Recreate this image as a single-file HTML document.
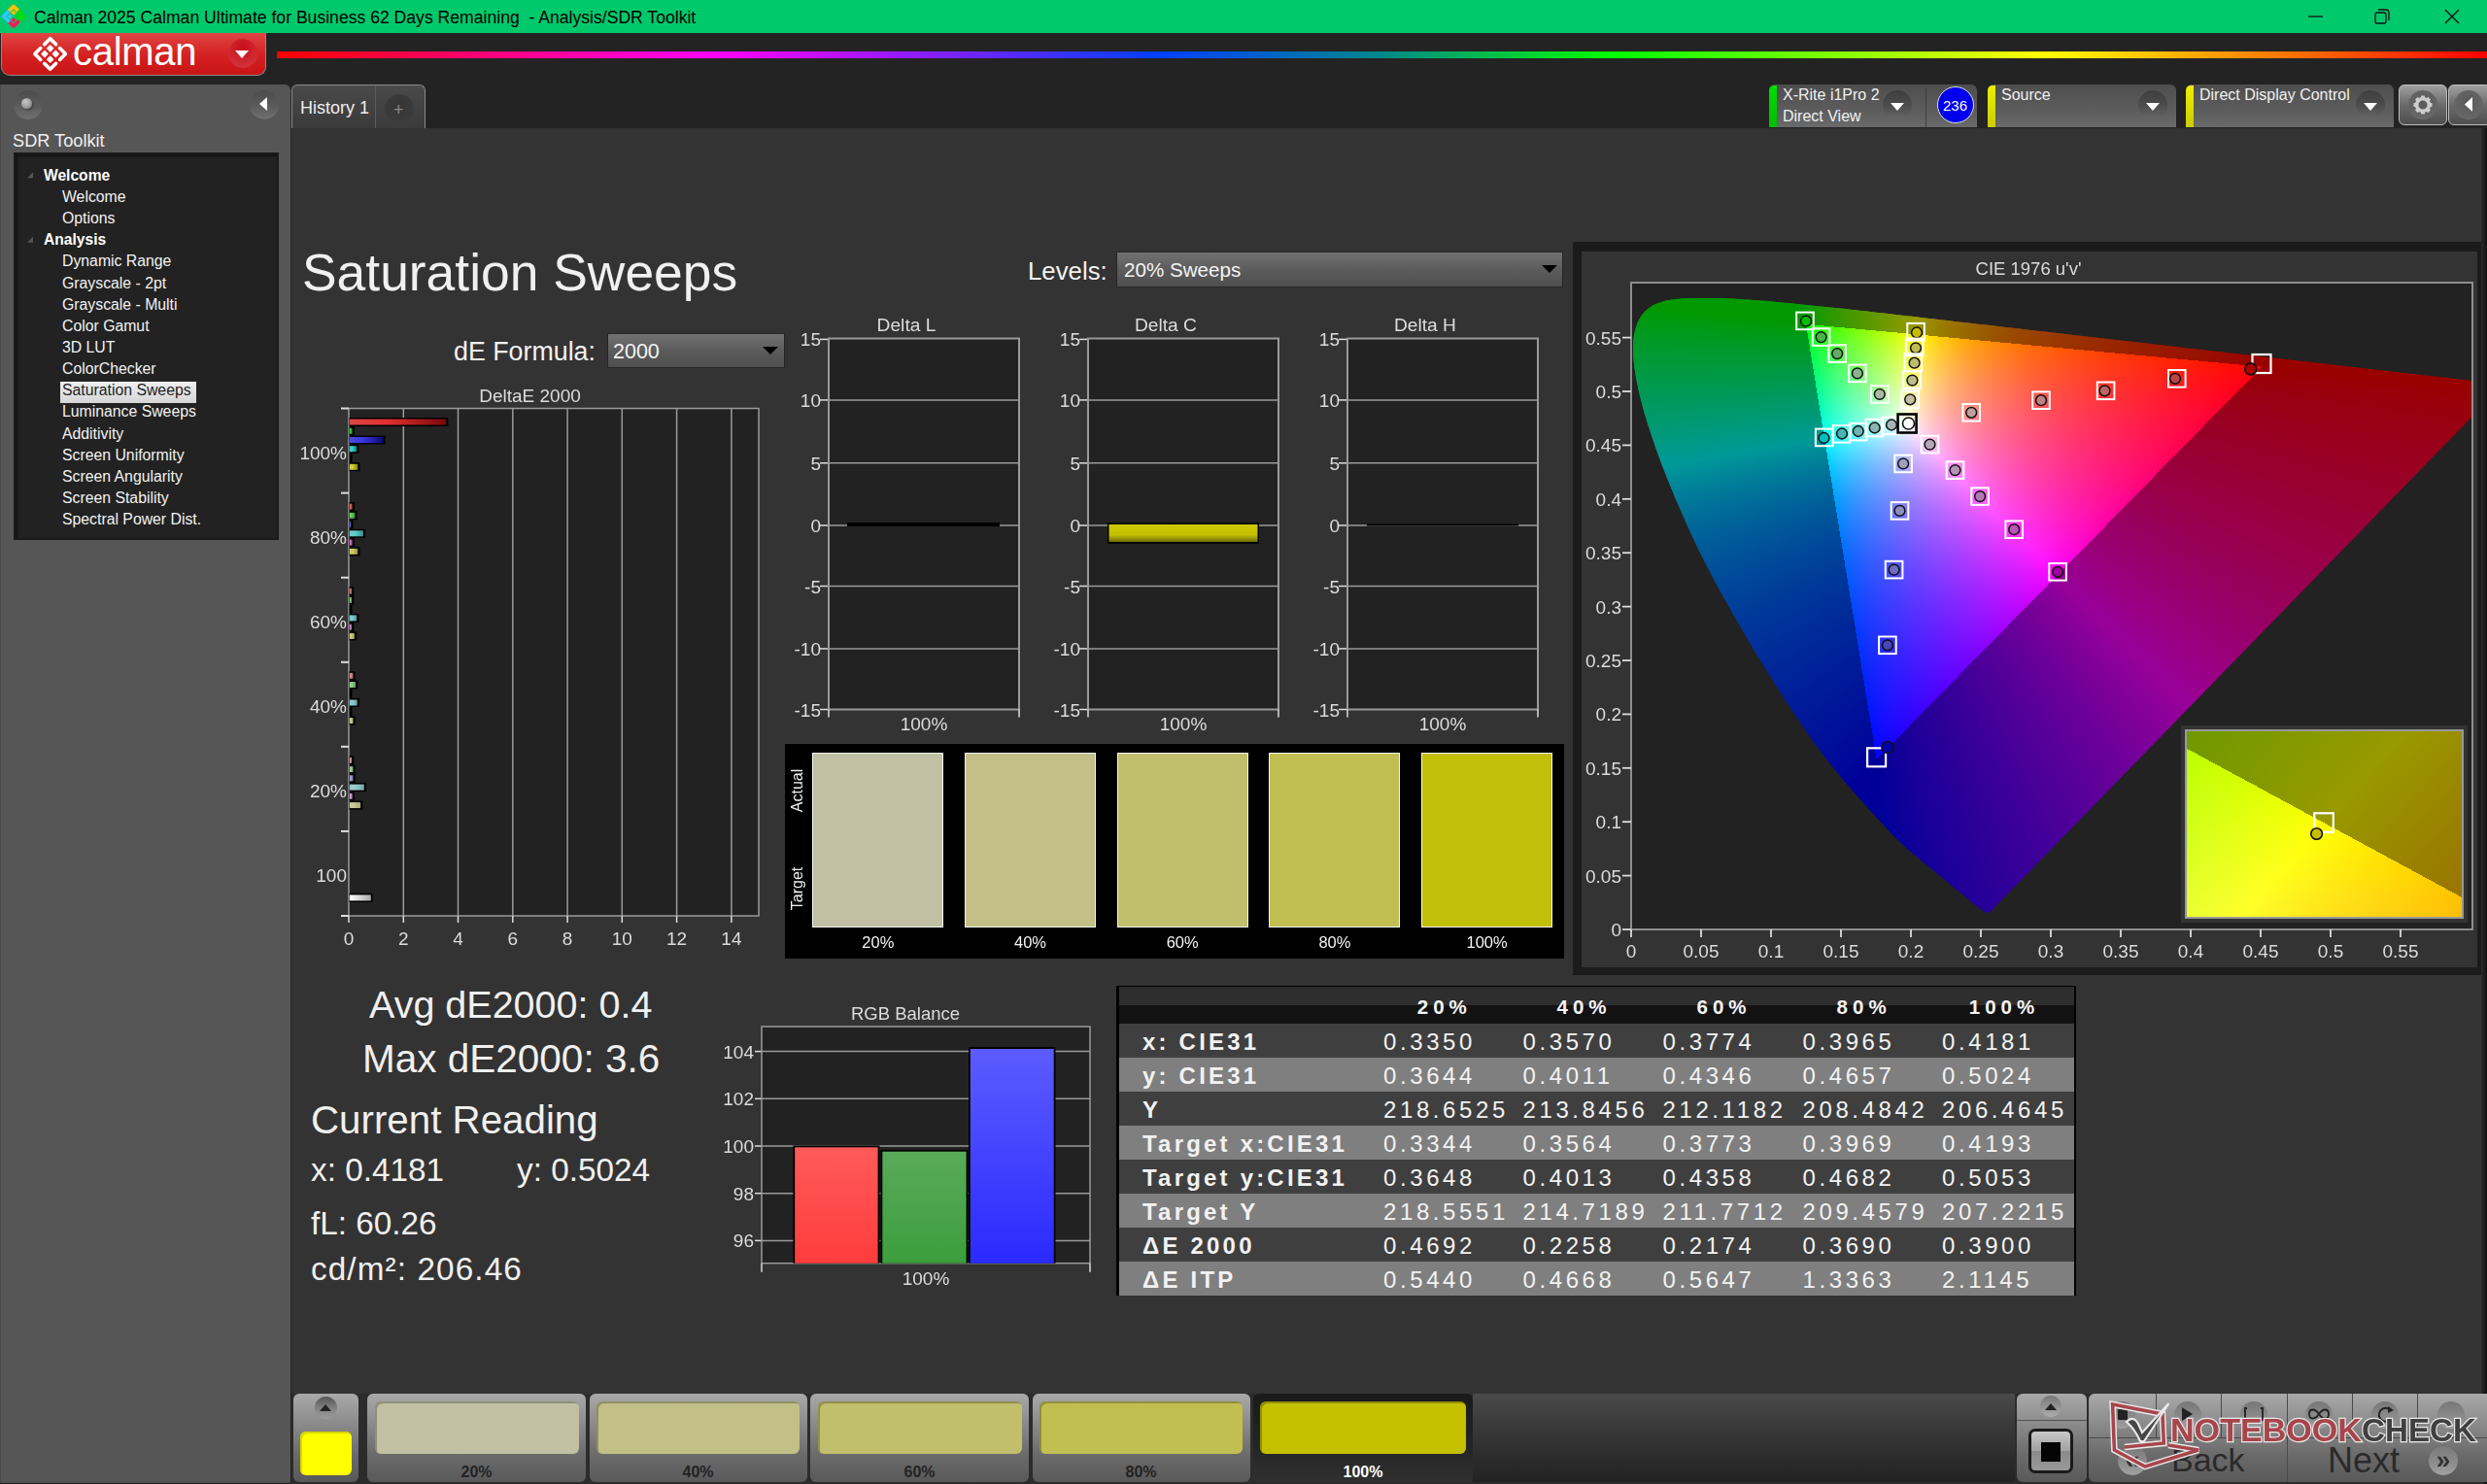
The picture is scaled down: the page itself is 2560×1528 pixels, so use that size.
<!DOCTYPE html>
<html><head><meta charset="utf-8"><style>*{margin:0;padding:0;box-sizing:border-box}
html,body{width:2560px;height:1528px;overflow:hidden;background:#232323;font-family:"Liberation Sans",sans-serif;color:#eee}
.a{position:absolute}
.t{position:absolute;white-space:nowrap;line-height:1}
svg text{font-family:"Liberation Sans",sans-serif}
#titlebar{left:0;top:0;width:2560px;height:34px;background:#00c96c}
#logo{left:1px;top:34px;width:273px;height:44px;border-radius:0 0 9px 9px;background:linear-gradient(#e04444,#d42020 55%,#c81414);border:1px solid #8a8a8a;border-top:none}
#rainbow{left:285px;top:53px;width:2275px;height:7px;background:linear-gradient(90deg,#ff0000 0%,#ff00ff 20%,#0040ff 40%,#00888a 50%,#00ff00 60.5%,#ffff00 80%,#ff0000 100%)}
#sidebar{left:0;top:87px;width:298.5px;height:1440px;background:#565656;border-radius:0 6px 0 0;border-left:1px solid #4a4a4a;border-bottom:1px solid #4a4a4a}
#tree{left:14px;top:157px;width:273px;height:399px;background:#222;border:2px solid #1a1a1a;box-shadow:inset 2px 2px 3px #111}
#content{left:300px;top:132px;width:2256px;height:1396px;background:#333}
</style></head><body>
<div id="titlebar" class="a"></div>
<div class="t" style="left:35px;top:9.5px;font-size:17.6px;color:#000;font-weight:normal;">Calman 2025 Calman Ultimate for Business 62 Days Remaining&nbsp; - Analysis/SDR Toolkit</div>
<div id="logo" class="a"></div>
<div class="t" style="left:75px;top:33px;font-size:40px;color:#fff;font-weight:normal;letter-spacing:-0.3px">calman</div>
<div class="a" style="left:235px;top:40px;width:30px;height:30px;border-radius:50%;background:radial-gradient(circle at 50% 30%,#c80e1a,#d2333a 80%)"></div>
<div id="rainbow" class="a"></div>
<div id="sidebar" class="a"></div>
<div class="a" style="left:14px;top:92.6px;width:30px;height:30px;border-radius:50%;background:linear-gradient(#4c4c4c,#5a5a5a 50%,#707070)"></div>
<div class="a" style="left:22px;top:101px;width:11px;height:11px;border-radius:50%;background:radial-gradient(circle at 40% 35%,#c8c8c8,#7a7a7a);box-shadow:1.5px 1.5px 2px #444"></div>
<div class="a" style="left:256.5px;top:92.6px;width:30px;height:30px;border-radius:50%;background:linear-gradient(#4c4c4c,#5a5a5a 50%,#707070)"></div>
<div class="t" style="left:13px;top:136px;font-size:18.2px;color:#f0f0f0;font-weight:normal;">SDR Toolkit</div>
<div id="tree" class="a"></div>
<div class="t" style="left:45px;top:172.8px;font-size:15.6px;color:#fff;font-weight:bold;">Welcome</div>
<div class="t" style="left:64px;top:194.95000000000002px;font-size:15.8px;color:#f2f2f2;font-weight:normal;">Welcome</div>
<div class="t" style="left:64px;top:217.10000000000002px;font-size:15.8px;color:#f2f2f2;font-weight:normal;">Options</div>
<div class="t" style="left:45px;top:239.25px;font-size:15.6px;color:#fff;font-weight:bold;">Analysis</div>
<div class="t" style="left:64px;top:261.4px;font-size:15.8px;color:#f2f2f2;font-weight:normal;">Dynamic Range</div>
<div class="t" style="left:64px;top:283.55px;font-size:15.8px;color:#f2f2f2;font-weight:normal;">Grayscale - 2pt</div>
<div class="t" style="left:64px;top:305.7px;font-size:15.8px;color:#f2f2f2;font-weight:normal;">Grayscale - Multi</div>
<div class="t" style="left:64px;top:327.85px;font-size:15.8px;color:#f2f2f2;font-weight:normal;">Color Gamut</div>
<div class="t" style="left:64px;top:350.0px;font-size:15.8px;color:#f2f2f2;font-weight:normal;">3D LUT</div>
<div class="t" style="left:64px;top:372.15px;font-size:15.8px;color:#f2f2f2;font-weight:normal;">ColorChecker</div>
<div class="a" style="left:62px;top:392.8px;width:140px;height:22px;background:linear-gradient(#eee,#d6d6d6)"></div>
<div class="t" style="left:64px;top:394.3px;font-size:15.8px;color:#222;font-weight:normal;">Saturation Sweeps</div>
<div class="t" style="left:64px;top:416.45px;font-size:15.8px;color:#f2f2f2;font-weight:normal;">Luminance Sweeps</div>
<div class="t" style="left:64px;top:438.59999999999997px;font-size:15.8px;color:#f2f2f2;font-weight:normal;">Additivity</div>
<div class="t" style="left:64px;top:460.75px;font-size:15.8px;color:#f2f2f2;font-weight:normal;">Screen Uniformity</div>
<div class="t" style="left:64px;top:482.9px;font-size:15.8px;color:#f2f2f2;font-weight:normal;">Screen Angularity</div>
<div class="t" style="left:64px;top:505.04999999999995px;font-size:15.8px;color:#f2f2f2;font-weight:normal;">Screen Stability</div>
<div class="t" style="left:64px;top:527.2px;font-size:15.8px;color:#f2f2f2;font-weight:normal;">Spectral Power Dist.</div>
<div class="a" style="left:300px;top:87px;width:138px;height:46px;border-radius:6px 6px 0 0;background:linear-gradient(#4a4a4a,#3a3a3a);border:1.5px solid #8a8a8a;border-bottom:none"></div>
<div class="a" style="left:386px;top:88px;width:1px;height:44px;background:#5c5c5c"></div>
<div class="a" style="left:396px;top:97px;width:30px;height:30px;border-radius:50%;background:radial-gradient(circle at 50% 40%,#353535,#3b3b3b 70%,#444)"></div>
<div class="t" style="left:309px;top:102px;font-size:18px;color:#eee;font-weight:normal;">History 1</div>
<div class="t" style="left:405px;top:104px;font-size:18px;color:#888;font-weight:normal;">+</div>
<div id="content" class="a"></div>
<div class="a" style="left:1821px;top:87px;width:214px;height:44px;border-radius:6px 6px 0 0;background:linear-gradient(#4e4e4e,#5c5c5c 60%,#6a6a6a)"></div>
<div class="a" style="left:1821px;top:88px;width:8px;height:43px;border-radius:5px 0 0 0;background:linear-gradient(#00dd00,#00bb00)"></div>
<div class="t" style="left:1835px;top:90px;font-size:16px;color:#f0f0f0;font-weight:normal;">X-Rite i1Pro 2</div>
<div class="t" style="left:1835px;top:112px;font-size:16px;color:#f0f0f0;font-weight:normal;">Direct View</div>
<div class="a" style="left:2046px;top:87px;width:194px;height:44px;border-radius:6px 6px 0 0;background:linear-gradient(#4e4e4e,#5c5c5c 60%,#6a6a6a)"></div>
<div class="a" style="left:2046px;top:88px;width:8px;height:43px;border-radius:5px 0 0 0;background:linear-gradient(#eeee00,#cccc00)"></div>
<div class="t" style="left:2060px;top:90px;font-size:16px;color:#f0f0f0;font-weight:normal;">Source</div>
<div class="a" style="left:2250px;top:87px;width:214px;height:44px;border-radius:6px 6px 0 0;background:linear-gradient(#4e4e4e,#5c5c5c 60%,#6a6a6a)"></div>
<div class="a" style="left:2250px;top:88px;width:8px;height:43px;border-radius:5px 0 0 0;background:linear-gradient(#eeee00,#cccc00)"></div>
<div class="t" style="left:2264px;top:90px;font-size:16px;color:#f0f0f0;font-weight:normal;">Direct Display Control</div>
<div class="a" style="left:1938px;top:93px;width:30px;height:30px;border-radius:50%;background:linear-gradient(#3e3e3e,#4c4c4c 50%,#666)"></div>
<div class="a" style="left:2201px;top:93px;width:30px;height:30px;border-radius:50%;background:linear-gradient(#3e3e3e,#4c4c4c 50%,#666)"></div>
<div class="a" style="left:2425px;top:93px;width:30px;height:30px;border-radius:50%;background:linear-gradient(#3e3e3e,#4c4c4c 50%,#666)"></div>
<div class="a" style="left:1982px;top:91px;width:1px;height:40px;background:#3e3e3e"></div>
<div class="a" style="left:1994px;top:89px;width:38px;height:38px;border-radius:50%;background:#0000ee;border:1.5px solid #ddd"></div>
<div class="t" style="left:2000px;top:101px;font-size:15px;color:#fff;font-weight:normal;">236</div>
<div class="a" style="left:2469px;top:87px;width:50px;height:42px;border-radius:6px;background:linear-gradient(#a0a0a0,#6a6a6a 50%,#4e4e4e);border:1.5px solid #bdbdbd"></div>
<div class="a" style="left:2520px;top:87px;width:45px;height:42px;border-radius:6px;background:linear-gradient(#a0a0a0,#6a6a6a 50%,#4e4e4e);border:1.5px solid #bdbdbd"></div>
<div class="a" style="left:2479px;top:93px;width:30px;height:30px;border-radius:50%;background:radial-gradient(circle at 50% 40%,#5a5a5a,#666 70%,#888)"></div>
<div class="a" style="left:2526px;top:93px;width:30px;height:30px;border-radius:50%;background:radial-gradient(circle at 50% 40%,#5a5a5a,#666 70%,#888)"></div>
<div class="t" style="left:311px;top:254px;font-size:53.4px;color:#f0f0f0;font-weight:normal;">Saturation Sweeps</div>
<div class="t" style="left:1058px;top:266.5px;font-size:25.8px;color:#f2f2f2;font-weight:normal;">Levels:</div>
<div class="a" style="left:1149px;top:259px;width:460px;height:37px;background:#262626;padding:1px"><div style="width:100%;height:100%;background:linear-gradient(#727272,#5c5c5c 50%,#4e4e4e)"></div></div>
<div class="t" style="left:1157px;top:268px;font-size:20.6px;color:#f4f4f4;font-weight:normal;">20% Sweeps</div>
<div class="t" style="left:467px;top:349px;font-size:26.8px;color:#f2f2f2;font-weight:normal;">dE Formula:</div>
<div class="a" style="left:625px;top:343px;width:183px;height:36px;background:#262626;padding:1px"><div style="width:100%;height:100%;background:linear-gradient(#727272,#5c5c5c 50%,#4e4e4e)"></div></div>
<div class="t" style="left:631px;top:352px;font-size:21.5px;color:#f4f4f4;font-weight:normal;">2000</div>
<div class="a" style="left:808px;top:766px;width:802px;height:221px;background:#000"></div>
<div class="a" style="left:836.3px;top:775px;width:135px;height:180px;background:#c1c0a3;border:1.5px solid #f4f4f4"></div>
<div class="a" style="left:993.0px;top:775px;width:135px;height:180px;background:#c2c086;border:1.5px solid #f4f4f4"></div>
<div class="a" style="left:1149.7px;top:775px;width:135px;height:180px;background:#c2bf6c;border:1.5px solid #f4f4f4"></div>
<div class="a" style="left:1306.4px;top:775px;width:135px;height:180px;background:#c2bf52;border:1.5px solid #f4f4f4"></div>
<div class="a" style="left:1463.1px;top:775px;width:135px;height:180px;background:#c1bf0a;border:1.5px solid #f4f4f4"></div>
<div class="t" style="left:380px;top:1015px;font-size:39.5px;color:#f0f0f0;font-weight:normal;">Avg dE2000: 0.4</div>
<div class="t" style="left:373px;top:1070px;font-size:40.5px;color:#f0f0f0;font-weight:normal;">Max dE2000: 3.6</div>
<div class="t" style="left:320px;top:1134px;font-size:40.3px;color:#f0f0f0;font-weight:normal;">Current Reading</div>
<div class="t" style="left:320px;top:1188px;font-size:33.3px;color:#f0f0f0;font-weight:normal;">x: 0.4181</div>
<div class="t" style="left:532px;top:1188px;font-size:33.3px;color:#f0f0f0;font-weight:normal;">y: 0.5024</div>
<div class="t" style="left:320px;top:1243px;font-size:33.3px;color:#f0f0f0;font-weight:normal;">fL: 60.26</div>
<div class="t" style="left:320px;top:1290px;font-size:33.3px;color:#f0f0f0;font-weight:normal;letter-spacing:1.1px">cd/m²: 206.46</div>
<div class="a" style="left:1149px;top:1014.6px;width:988px;height:319.4px;background:#000"></div>
<div class="a" style="left:1152px;top:1016px;width:983px;height:19px;background:#2e2e2e"></div>
<div class="a" style="left:1152px;top:1035px;width:983px;height:18.6px;background:#121212"></div>
<div class="t" style="left:1426.8px;width:120px;text-align:center;top:1027px;font-size:20.5px;font-weight:bold;color:#f4f4f4;letter-spacing:5px">20%</div>
<div class="t" style="left:1570.5px;width:120px;text-align:center;top:1027px;font-size:20.5px;font-weight:bold;color:#f4f4f4;letter-spacing:5px">40%</div>
<div class="t" style="left:1714.5px;width:120px;text-align:center;top:1027px;font-size:20.5px;font-weight:bold;color:#f4f4f4;letter-spacing:5px">60%</div>
<div class="t" style="left:1858.6px;width:120px;text-align:center;top:1027px;font-size:20.5px;font-weight:bold;color:#f4f4f4;letter-spacing:5px">80%</div>
<div class="t" style="left:2003px;width:120px;text-align:center;top:1027px;font-size:20.5px;font-weight:bold;color:#f4f4f4;letter-spacing:5px">100%</div>
<div class="a" style="left:1152px;top:1053.6px;width:983px;height:35.1px;background:#3f3f3f"></div>
<div class="t" style="left:1176px;top:1060.6px;font-size:24px;color:#f2f2f2;font-weight:bold;letter-spacing:3.2px">x: CIE31</div>
<div class="t" style="left:1424px;top:1060.6px;font-size:24px;color:#f2f2f2;font-weight:normal;letter-spacing:3.6px">0.3350</div>
<div class="t" style="left:1567.5px;top:1060.6px;font-size:24px;color:#f2f2f2;font-weight:normal;letter-spacing:3.6px">0.3570</div>
<div class="t" style="left:1711.5px;top:1060.6px;font-size:24px;color:#f2f2f2;font-weight:normal;letter-spacing:3.6px">0.3774</div>
<div class="t" style="left:1855.5px;top:1060.6px;font-size:24px;color:#f2f2f2;font-weight:normal;letter-spacing:3.6px">0.3965</div>
<div class="t" style="left:1999px;top:1060.6px;font-size:24px;color:#f2f2f2;font-weight:normal;letter-spacing:3.6px">0.4181</div>
<div class="a" style="left:1152px;top:1088.6px;width:983px;height:35.1px;background:#7f7f7f"></div>
<div class="t" style="left:1176px;top:1095.6px;font-size:24px;color:#f2f2f2;font-weight:bold;letter-spacing:3.2px">y: CIE31</div>
<div class="t" style="left:1424px;top:1095.6px;font-size:24px;color:#f2f2f2;font-weight:normal;letter-spacing:3.6px">0.3644</div>
<div class="t" style="left:1567.5px;top:1095.6px;font-size:24px;color:#f2f2f2;font-weight:normal;letter-spacing:3.6px">0.4011</div>
<div class="t" style="left:1711.5px;top:1095.6px;font-size:24px;color:#f2f2f2;font-weight:normal;letter-spacing:3.6px">0.4346</div>
<div class="t" style="left:1855.5px;top:1095.6px;font-size:24px;color:#f2f2f2;font-weight:normal;letter-spacing:3.6px">0.4657</div>
<div class="t" style="left:1999px;top:1095.6px;font-size:24px;color:#f2f2f2;font-weight:normal;letter-spacing:3.6px">0.5024</div>
<div class="a" style="left:1152px;top:1123.7px;width:983px;height:35.1px;background:#3f3f3f"></div>
<div class="t" style="left:1176px;top:1130.7px;font-size:24px;color:#f2f2f2;font-weight:bold;letter-spacing:3.2px">Y</div>
<div class="t" style="left:1424px;top:1130.7px;font-size:24px;color:#f2f2f2;font-weight:normal;letter-spacing:3.6px">218.6525</div>
<div class="t" style="left:1567.5px;top:1130.7px;font-size:24px;color:#f2f2f2;font-weight:normal;letter-spacing:3.6px">213.8456</div>
<div class="t" style="left:1711.5px;top:1130.7px;font-size:24px;color:#f2f2f2;font-weight:normal;letter-spacing:3.6px">212.1182</div>
<div class="t" style="left:1855.5px;top:1130.7px;font-size:24px;color:#f2f2f2;font-weight:normal;letter-spacing:3.6px">208.4842</div>
<div class="t" style="left:1999px;top:1130.7px;font-size:24px;color:#f2f2f2;font-weight:normal;letter-spacing:3.6px">206.4645</div>
<div class="a" style="left:1152px;top:1158.7px;width:983px;height:35.1px;background:#7f7f7f"></div>
<div class="t" style="left:1176px;top:1165.7px;font-size:24px;color:#f2f2f2;font-weight:bold;letter-spacing:3.2px">Target x:CIE31</div>
<div class="t" style="left:1424px;top:1165.7px;font-size:24px;color:#f2f2f2;font-weight:normal;letter-spacing:3.6px">0.3344</div>
<div class="t" style="left:1567.5px;top:1165.7px;font-size:24px;color:#f2f2f2;font-weight:normal;letter-spacing:3.6px">0.3564</div>
<div class="t" style="left:1711.5px;top:1165.7px;font-size:24px;color:#f2f2f2;font-weight:normal;letter-spacing:3.6px">0.3773</div>
<div class="t" style="left:1855.5px;top:1165.7px;font-size:24px;color:#f2f2f2;font-weight:normal;letter-spacing:3.6px">0.3969</div>
<div class="t" style="left:1999px;top:1165.7px;font-size:24px;color:#f2f2f2;font-weight:normal;letter-spacing:3.6px">0.4193</div>
<div class="a" style="left:1152px;top:1193.7px;width:983px;height:35.1px;background:#3f3f3f"></div>
<div class="t" style="left:1176px;top:1200.7px;font-size:24px;color:#f2f2f2;font-weight:bold;letter-spacing:3.2px">Target y:CIE31</div>
<div class="t" style="left:1424px;top:1200.7px;font-size:24px;color:#f2f2f2;font-weight:normal;letter-spacing:3.6px">0.3648</div>
<div class="t" style="left:1567.5px;top:1200.7px;font-size:24px;color:#f2f2f2;font-weight:normal;letter-spacing:3.6px">0.4013</div>
<div class="t" style="left:1711.5px;top:1200.7px;font-size:24px;color:#f2f2f2;font-weight:normal;letter-spacing:3.6px">0.4358</div>
<div class="t" style="left:1855.5px;top:1200.7px;font-size:24px;color:#f2f2f2;font-weight:normal;letter-spacing:3.6px">0.4682</div>
<div class="t" style="left:1999px;top:1200.7px;font-size:24px;color:#f2f2f2;font-weight:normal;letter-spacing:3.6px">0.5053</div>
<div class="a" style="left:1152px;top:1228.8px;width:983px;height:35.1px;background:#7f7f7f"></div>
<div class="t" style="left:1176px;top:1235.8px;font-size:24px;color:#f2f2f2;font-weight:bold;letter-spacing:3.2px">Target Y</div>
<div class="t" style="left:1424px;top:1235.8px;font-size:24px;color:#f2f2f2;font-weight:normal;letter-spacing:3.6px">218.5551</div>
<div class="t" style="left:1567.5px;top:1235.8px;font-size:24px;color:#f2f2f2;font-weight:normal;letter-spacing:3.6px">214.7189</div>
<div class="t" style="left:1711.5px;top:1235.8px;font-size:24px;color:#f2f2f2;font-weight:normal;letter-spacing:3.6px">211.7712</div>
<div class="t" style="left:1855.5px;top:1235.8px;font-size:24px;color:#f2f2f2;font-weight:normal;letter-spacing:3.6px">209.4579</div>
<div class="t" style="left:1999px;top:1235.8px;font-size:24px;color:#f2f2f2;font-weight:normal;letter-spacing:3.6px">207.2215</div>
<div class="a" style="left:1152px;top:1263.8px;width:983px;height:35.1px;background:#3f3f3f"></div>
<div class="t" style="left:1176px;top:1270.8px;font-size:24px;color:#f2f2f2;font-weight:bold;letter-spacing:3.2px">ΔE 2000</div>
<div class="t" style="left:1424px;top:1270.8px;font-size:24px;color:#f2f2f2;font-weight:normal;letter-spacing:3.6px">0.4692</div>
<div class="t" style="left:1567.5px;top:1270.8px;font-size:24px;color:#f2f2f2;font-weight:normal;letter-spacing:3.6px">0.2258</div>
<div class="t" style="left:1711.5px;top:1270.8px;font-size:24px;color:#f2f2f2;font-weight:normal;letter-spacing:3.6px">0.2174</div>
<div class="t" style="left:1855.5px;top:1270.8px;font-size:24px;color:#f2f2f2;font-weight:normal;letter-spacing:3.6px">0.3690</div>
<div class="t" style="left:1999px;top:1270.8px;font-size:24px;color:#f2f2f2;font-weight:normal;letter-spacing:3.6px">0.3900</div>
<div class="a" style="left:1152px;top:1298.8px;width:983px;height:35.1px;background:#7f7f7f"></div>
<div class="t" style="left:1176px;top:1305.8px;font-size:24px;color:#f2f2f2;font-weight:bold;letter-spacing:3.2px">ΔE ITP</div>
<div class="t" style="left:1424px;top:1305.8px;font-size:24px;color:#f2f2f2;font-weight:normal;letter-spacing:3.6px">0.5440</div>
<div class="t" style="left:1567.5px;top:1305.8px;font-size:24px;color:#f2f2f2;font-weight:normal;letter-spacing:3.6px">0.4668</div>
<div class="t" style="left:1711.5px;top:1305.8px;font-size:24px;color:#f2f2f2;font-weight:normal;letter-spacing:3.6px">0.5647</div>
<div class="t" style="left:1855.5px;top:1305.8px;font-size:24px;color:#f2f2f2;font-weight:normal;letter-spacing:3.6px">1.3363</div>
<div class="t" style="left:1999px;top:1305.8px;font-size:24px;color:#f2f2f2;font-weight:normal;letter-spacing:3.6px">2.1145</div>
<div class="a" style="left:1619px;top:249px;width:941px;height:755px;background:#1b1b1b"></div>
<div class="a" style="left:1628px;top:259px;width:922px;height:737px;background:#333"></div>
<div class="a" style="left:2554px;top:132px;width:6px;height:1396px;background:linear-gradient(90deg,#2a2a2a,#111)"></div>
<div class="a" style="left:1679px;top:291px;width:866px;height:666px;background:#222"></div>
<svg class="a mz" style="left:1679px;top:291px" width="866" height="666"><style>.mz rect{width:12px;height:12px}</style><defs><clipPath id="lc"><path d="M369.8 647.6 L369.7 647.7 L369.7 647.7 L369.6 647.8 L369.5 647.8 L369.4 647.9 L369.2 648.0 L369.1 648.0 L369.0 648.1 L368.8 648.2 L368.6 648.2 L368.4 648.3 L368.2 648.3 L368.0 648.4 L367.8 648.4 L367.5 648.4 L367.2 648.4 L366.9 648.4 L366.5 648.3 L366.1 648.3 L365.7 648.3 L365.3 648.2 L364.8 648.1 L364.1 647.8 L363.2 647.3 L362.1 646.6 L360.9 645.8 L359.6 644.9 L358.1 643.8 L356.4 642.5 L354.4 640.9 L352.2 639.2 L349.9 637.2 L347.3 635.1 L344.5 632.7 L341.4 630.1 L338.0 627.2 L334.2 624.2 L330.3 621.0 L326.1 617.5 L321.5 613.8 L316.5 609.7 L311.1 605.1 L305.4 600.4 L299.4 595.5 L293.0 590.3 L286.1 584.5 L278.6 577.6 L270.3 569.5 L260.9 559.6 L250.2 548.1 L239.0 535.6 L227.7 522.7 L217.0 510.2 L207.5 498.7 L199.3 488.3 L192.0 478.7 L185.3 469.3 L178.8 459.9 L172.2 450.1 L165.2 439.6 L157.7 428.2 L150.1 416.3 L142.3 404.0 L134.6 391.4 L126.8 378.7 L119.3 365.9 L111.7 353.0 L104.0 339.7 L96.5 326.3 L89.0 312.8 L81.9 299.5 L75.1 286.3 L68.6 273.2 L62.4 260.1 L56.5 247.1 L50.9 234.3 L45.5 221.9 L40.6 209.9 L35.9 198.2 L31.5 186.9 L27.4 175.9 L23.7 165.2 L20.2 155.1 L17.1 145.4 L14.3 136.3 L11.9 127.7 L9.8 119.5 L7.9 111.8 L6.4 104.5 L5.0 97.5 L3.9 91.0 L3.1 84.9 L2.5 79.3 L2.1 74.0 L2.0 69.0 L2.1 64.2 L2.3 59.7 L2.8 55.5 L3.5 51.5 L4.4 47.9 L5.5 44.5 L6.7 41.3 L8.1 38.3 L9.7 35.5 L11.5 33.0 L13.4 30.7 L15.5 28.6 L17.7 26.7 L20.0 25.0 L22.4 23.5 L25.0 22.3 L27.7 21.2 L30.5 20.2 L33.3 19.3 L36.2 18.5 L39.2 18.0 L42.3 17.5 L45.4 17.1 L48.6 16.8 L51.9 16.6 L55.1 16.3 L58.5 16.1 L61.8 16.0 L65.3 16.0 L68.7 15.9 L72.1 15.9 L75.5 15.9 L78.9 15.9 L82.3 15.9 L85.7 16.0 L89.2 16.0 L92.6 16.1 L96.1 16.2 L99.7 16.4 L103.2 16.5 L106.8 16.7 L110.4 16.9 L114.1 17.1 L117.8 17.4 L121.6 17.6 L125.4 17.9 L129.3 18.2 L133.2 18.5 L137.2 18.8 L141.2 19.1 L145.3 19.5 L149.5 19.9 L153.7 20.2 L157.9 20.7 L162.3 21.1 L166.7 21.5 L171.2 21.9 L175.7 22.4 L180.4 22.9 L185.1 23.4 L189.9 23.9 L194.8 24.4 L199.7 24.9 L204.8 25.4 L209.9 26.0 L215.2 26.6 L220.5 27.1 L225.9 27.7 L231.4 28.3 L237.0 29.0 L242.6 29.6 L248.4 30.3 L254.3 30.9 L260.3 31.6 L266.4 32.3 L272.5 33.0 L278.8 33.7 L285.2 34.4 L291.7 35.1 L298.3 35.9 L305.0 36.7 L311.8 37.4 L318.8 38.2 L325.8 39.0 L332.9 39.9 L340.1 40.7 L347.4 41.5 L354.9 42.4 L362.4 43.3 L370.1 44.1 L377.8 45.0 L385.6 45.9 L393.5 46.8 L401.6 47.8 L409.7 48.7 L417.9 49.7 L426.2 50.6 L434.5 51.6 L443.0 52.5 L451.5 53.5 L460.1 54.5 L468.7 55.5 L477.4 56.5 L486.1 57.5 L494.9 58.5 L503.7 59.5 L512.5 60.5 L521.3 61.6 L530.0 62.5 L538.1 63.5 L545.5 64.3 L552.9 65.2 L560.8 66.1 L570.0 67.2 L581.0 68.4 L594.5 70.0 L610.1 71.7 L626.9 73.7 L644.0 75.6 L660.6 77.5 L675.6 79.2 L689.3 80.8 L702.5 82.3 L715.0 83.8 L727.0 85.2 L738.4 86.5 L749.2 87.7 L759.3 88.9 L768.7 90.0 L777.5 91.0 L785.8 91.9 L793.7 92.9 L801.4 93.7 L808.7 94.6 L815.6 95.4 L822.2 96.1 L828.3 96.8 L834.1 97.5 L839.6 98.1 L844.6 98.7 L849.3 99.2 L853.6 99.7 L857.6 100.2 L861.3 100.6 L864.7 101.0 L867.8 101.4 L870.5 101.7 L873.0 102.0 L875.2 102.2 L877.4 102.5 L879.7 102.7 L882.0 103.0 L884.4 103.3 L886.8 103.5 L889.0 103.8 L891.0 104.0 L892.7 104.2 L894.0 104.4 L895.1 104.5 L896.0 104.6 L896.7 104.7 L897.2 104.8 L897.7 104.8 Z"/></clipPath><clipPath id="tc"><path d="M649.0 86.6 L180.0 42.8 L252.6 491.0 Z"/></clipPath></defs><g clip-path="url(#lc)"><rect x="0" y="0" fill="#009900"/><rect x="12" y="0" fill="#009900"/><rect x="24" y="0" fill="#009900"/><rect x="36" y="0" fill="#009900"/><rect x="48" y="0" fill="#009900"/><rect x="60" y="0" fill="#009900"/><rect x="72" y="0" fill="#009900"/><rect x="84" y="0" fill="#009900"/><rect x="96" y="0" fill="#009900"/><rect x="108" y="0" fill="#009900"/><rect x="120" y="0" fill="#009900"/><rect x="132" y="0" fill="#009900"/><rect x="144" y="0" fill="#009900"/><rect x="156" y="0" fill="#009900"/><rect x="168" y="0" fill="#009900"/><rect x="180" y="0" fill="#159900"/><rect x="192" y="0" fill="#249900"/><rect x="204" y="0" fill="#339900"/><rect x="216" y="0" fill="#409900"/><rect x="228" y="0" fill="#4e9900"/><rect x="240" y="0" fill="#5c9900"/><rect x="252" y="0" fill="#699900"/><rect x="264" y="0" fill="#779900"/><rect x="276" y="0" fill="#859900"/><rect x="288" y="0" fill="#939900"/><rect x="300" y="0" fill="#998f00"/><rect x="312" y="0" fill="#998300"/><rect x="324" y="0" fill="#997800"/><rect x="336" y="0" fill="#996f00"/><rect x="348" y="0" fill="#996700"/><rect x="360" y="0" fill="#995f00"/><rect x="372" y="0" fill="#995900"/><rect x="384" y="0" fill="#995300"/><rect x="396" y="0" fill="#994d00"/><rect x="408" y="0" fill="#994800"/><rect x="420" y="0" fill="#994300"/><rect x="432" y="0" fill="#993f00"/><rect x="444" y="0" fill="#993b00"/><rect x="456" y="0" fill="#993700"/><rect x="468" y="0" fill="#993300"/><rect x="480" y="0" fill="#993000"/><rect x="492" y="0" fill="#992d00"/><rect x="504" y="0" fill="#992a00"/><rect x="516" y="0" fill="#992700"/><rect x="528" y="0" fill="#992400"/><rect x="540" y="0" fill="#992100"/><rect x="552" y="0" fill="#991f00"/><rect x="564" y="0" fill="#991d00"/><rect x="576" y="0" fill="#991a00"/><rect x="588" y="0" fill="#991800"/><rect x="600" y="0" fill="#991600"/><rect x="612" y="0" fill="#991400"/><rect x="624" y="0" fill="#991200"/><rect x="636" y="0" fill="#991000"/><rect x="648" y="0" fill="#990d00"/><rect x="660" y="0" fill="#990b00"/><rect x="672" y="0" fill="#990900"/><rect x="684" y="0" fill="#990700"/><rect x="696" y="0" fill="#990500"/><rect x="708" y="0" fill="#990300"/><rect x="720" y="0" fill="#990000"/><rect x="732" y="0" fill="#990000"/><rect x="744" y="0" fill="#990000"/><rect x="756" y="0" fill="#990000"/><rect x="768" y="0" fill="#990000"/><rect x="780" y="0" fill="#990000"/><rect x="792" y="0" fill="#990000"/><rect x="804" y="0" fill="#990000"/><rect x="816" y="0" fill="#990000"/><rect x="828" y="0" fill="#990000"/><rect x="840" y="0" fill="#990000"/><rect x="852" y="0" fill="#990000"/><rect x="864" y="0" fill="#990000"/><rect x="0" y="12" fill="#009900"/><rect x="12" y="12" fill="#009900"/><rect x="24" y="12" fill="#009900"/><rect x="36" y="12" fill="#009900"/><rect x="48" y="12" fill="#009900"/><rect x="60" y="12" fill="#009900"/><rect x="72" y="12" fill="#009900"/><rect x="84" y="12" fill="#009900"/><rect x="96" y="12" fill="#009900"/><rect x="108" y="12" fill="#009900"/><rect x="120" y="12" fill="#009900"/><rect x="132" y="12" fill="#009900"/><rect x="144" y="12" fill="#009900"/><rect x="156" y="12" fill="#009900"/><rect x="168" y="12" fill="#009900"/><rect x="180" y="12" fill="#129900"/><rect x="192" y="12" fill="#239900"/><rect x="204" y="12" fill="#319900"/><rect x="216" y="12" fill="#409900"/><rect x="228" y="12" fill="#4e9900"/><rect x="240" y="12" fill="#5b9900"/><rect x="252" y="12" fill="#699900"/><rect x="264" y="12" fill="#789900"/><rect x="276" y="12" fill="#869900"/><rect x="288" y="12" fill="#959900"/><rect x="300" y="12" fill="#998e00"/><rect x="312" y="12" fill="#998200"/><rect x="324" y="12" fill="#997700"/><rect x="336" y="12" fill="#996d00"/><rect x="348" y="12" fill="#996500"/><rect x="360" y="12" fill="#995e00"/><rect x="372" y="12" fill="#995700"/><rect x="384" y="12" fill="#995100"/><rect x="396" y="12" fill="#994b00"/><rect x="408" y="12" fill="#994600"/><rect x="420" y="12" fill="#994100"/><rect x="432" y="12" fill="#993d00"/><rect x="444" y="12" fill="#993900"/><rect x="456" y="12" fill="#993500"/><rect x="468" y="12" fill="#993200"/><rect x="480" y="12" fill="#992e00"/><rect x="492" y="12" fill="#992b00"/><rect x="504" y="12" fill="#992800"/><rect x="516" y="12" fill="#992500"/><rect x="528" y="12" fill="#992300"/><rect x="540" y="12" fill="#992000"/><rect x="552" y="12" fill="#991d00"/><rect x="564" y="12" fill="#991b00"/><rect x="576" y="12" fill="#991900"/><rect x="588" y="12" fill="#991600"/><rect x="600" y="12" fill="#991400"/><rect x="612" y="12" fill="#991200"/><rect x="624" y="12" fill="#991000"/><rect x="636" y="12" fill="#990e00"/><rect x="648" y="12" fill="#990c00"/><rect x="660" y="12" fill="#990a00"/><rect x="672" y="12" fill="#990800"/><rect x="684" y="12" fill="#990600"/><rect x="696" y="12" fill="#990300"/><rect x="708" y="12" fill="#990000"/><rect x="720" y="12" fill="#990000"/><rect x="732" y="12" fill="#990000"/><rect x="744" y="12" fill="#990000"/><rect x="756" y="12" fill="#990000"/><rect x="768" y="12" fill="#990000"/><rect x="780" y="12" fill="#990000"/><rect x="792" y="12" fill="#990000"/><rect x="804" y="12" fill="#990000"/><rect x="816" y="12" fill="#990000"/><rect x="828" y="12" fill="#990000"/><rect x="840" y="12" fill="#990000"/><rect x="852" y="12" fill="#990000"/><rect x="864" y="12" fill="#990000"/><rect x="0" y="24" fill="#009906"/><rect x="12" y="24" fill="#009904"/><rect x="24" y="24" fill="#009903"/><rect x="36" y="24" fill="#009900"/><rect x="48" y="24" fill="#009900"/><rect x="60" y="24" fill="#009900"/><rect x="72" y="24" fill="#009900"/><rect x="84" y="24" fill="#009900"/><rect x="96" y="24" fill="#009900"/><rect x="108" y="24" fill="#009900"/><rect x="120" y="24" fill="#009900"/><rect x="132" y="24" fill="#009900"/><rect x="144" y="24" fill="#009900"/><rect x="156" y="24" fill="#009900"/><rect x="168" y="24" fill="#009900"/><rect x="180" y="24" fill="#109900"/><rect x="192" y="24" fill="#219900"/><rect x="204" y="24" fill="#309900"/><rect x="216" y="24" fill="#3f9900"/><rect x="228" y="24" fill="#4d9900"/><rect x="240" y="24" fill="#5b9900"/><rect x="252" y="24" fill="#6a9900"/><rect x="264" y="24" fill="#789900"/><rect x="276" y="24" fill="#879900"/><rect x="288" y="24" fill="#969900"/><rect x="300" y="24" fill="#998c00"/><rect x="312" y="24" fill="#998000"/><rect x="324" y="24" fill="#997500"/><rect x="336" y="24" fill="#996c00"/><rect x="348" y="24" fill="#996300"/><rect x="360" y="24" fill="#995c00"/><rect x="372" y="24" fill="#995500"/><rect x="384" y="24" fill="#994f00"/><rect x="396" y="24" fill="#994a00"/><rect x="408" y="24" fill="#994500"/><rect x="420" y="24" fill="#994000"/><rect x="432" y="24" fill="#993b00"/><rect x="444" y="24" fill="#993700"/><rect x="456" y="24" fill="#993400"/><rect x="468" y="24" fill="#993000"/><rect x="480" y="24" fill="#992d00"/><rect x="492" y="24" fill="#992a00"/><rect x="504" y="24" fill="#992600"/><rect x="516" y="24" fill="#992400"/><rect x="528" y="24" fill="#992100"/><rect x="540" y="24" fill="#991e00"/><rect x="552" y="24" fill="#991c00"/><rect x="564" y="24" fill="#991900"/><rect x="576" y="24" fill="#991700"/><rect x="588" y="24" fill="#991500"/><rect x="600" y="24" fill="#991300"/><rect x="612" y="24" fill="#991000"/><rect x="624" y="24" fill="#990e00"/><rect x="636" y="24" fill="#990c00"/><rect x="648" y="24" fill="#990a00"/><rect x="660" y="24" fill="#990800"/><rect x="672" y="24" fill="#990600"/><rect x="684" y="24" fill="#990300"/><rect x="696" y="24" fill="#990100"/><rect x="708" y="24" fill="#990000"/><rect x="720" y="24" fill="#990000"/><rect x="732" y="24" fill="#990000"/><rect x="744" y="24" fill="#990000"/><rect x="756" y="24" fill="#990000"/><rect x="768" y="24" fill="#990000"/><rect x="780" y="24" fill="#990000"/><rect x="792" y="24" fill="#990000"/><rect x="804" y="24" fill="#990000"/><rect x="816" y="24" fill="#990000"/><rect x="828" y="24" fill="#990000"/><rect x="840" y="24" fill="#990000"/><rect x="852" y="24" fill="#990000"/><rect x="864" y="24" fill="#990000"/><rect x="0" y="36" fill="#009914"/><rect x="12" y="36" fill="#009913"/><rect x="24" y="36" fill="#009912"/><rect x="36" y="36" fill="#009911"/><rect x="48" y="36" fill="#009910"/><rect x="60" y="36" fill="#00990f"/><rect x="72" y="36" fill="#00990e"/><rect x="84" y="36" fill="#00990d"/><rect x="96" y="36" fill="#00990b"/><rect x="108" y="36" fill="#00990a"/><rect x="120" y="36" fill="#009908"/><rect x="132" y="36" fill="#009907"/><rect x="144" y="36" fill="#009905"/><rect x="156" y="36" fill="#009902"/><rect x="168" y="36" fill="#009900"/><rect x="180" y="36" fill="#0d9900"/><rect x="192" y="36" fill="#1f9900"/><rect x="204" y="36" fill="#2f9900"/><rect x="216" y="36" fill="#3e9900"/><rect x="228" y="36" fill="#4c9900"/><rect x="240" y="36" fill="#5b9900"/><rect x="252" y="36" fill="#6a9900"/><rect x="264" y="36" fill="#799900"/><rect x="276" y="36" fill="#889900"/><rect x="288" y="36" fill="#989900"/><rect x="300" y="36" fill="#998b00"/><rect x="312" y="36" fill="#997e00"/><rect x="324" y="36" fill="#997300"/><rect x="336" y="36" fill="#996a00"/><rect x="348" y="36" fill="#996200"/><rect x="360" y="36" fill="#995a00"/><rect x="372" y="36" fill="#995300"/><rect x="384" y="36" fill="#994d00"/><rect x="396" y="36" fill="#994800"/><rect x="408" y="36" fill="#994300"/><rect x="420" y="36" fill="#993e00"/><rect x="432" y="36" fill="#993a00"/><rect x="444" y="36" fill="#993600"/><rect x="456" y="36" fill="#993200"/><rect x="468" y="36" fill="#992e00"/><rect x="480" y="36" fill="#992b00"/><rect x="492" y="36" fill="#992800"/><rect x="504" y="36" fill="#992500"/><rect x="516" y="36" fill="#992200"/><rect x="528" y="36" fill="#991f00"/><rect x="540" y="36" fill="#991d00"/><rect x="552" y="36" fill="#991a00"/><rect x="564" y="36" fill="#991800"/><rect x="576" y="36" fill="#991500"/><rect x="588" y="36" fill="#991300"/><rect x="600" y="36" fill="#991100"/><rect x="612" y="36" fill="#990f00"/><rect x="624" y="36" fill="#990c00"/><rect x="636" y="36" fill="#990a00"/><rect x="648" y="36" fill="#990800"/><rect x="660" y="36" fill="#990600"/><rect x="672" y="36" fill="#990300"/><rect x="684" y="36" fill="#990100"/><rect x="696" y="36" fill="#990000"/><rect x="708" y="36" fill="#990000"/><rect x="720" y="36" fill="#990000"/><rect x="732" y="36" fill="#990000"/><rect x="744" y="36" fill="#990000"/><rect x="756" y="36" fill="#990000"/><rect x="768" y="36" fill="#990000"/><rect x="780" y="36" fill="#990000"/><rect x="792" y="36" fill="#990000"/><rect x="804" y="36" fill="#990000"/><rect x="816" y="36" fill="#990000"/><rect x="828" y="36" fill="#990000"/><rect x="840" y="36" fill="#990000"/><rect x="852" y="36" fill="#990000"/><rect x="864" y="36" fill="#990000"/><rect x="0" y="48" fill="#009920"/><rect x="12" y="48" fill="#00991f"/><rect x="24" y="48" fill="#00991e"/><rect x="36" y="48" fill="#00991e"/><rect x="48" y="48" fill="#00991d"/><rect x="60" y="48" fill="#00991c"/><rect x="72" y="48" fill="#00991c"/><rect x="84" y="48" fill="#00991b"/><rect x="96" y="48" fill="#00991a"/><rect x="108" y="48" fill="#009919"/><rect x="120" y="48" fill="#009918"/><rect x="132" y="48" fill="#009918"/><rect x="144" y="48" fill="#009917"/><rect x="156" y="48" fill="#009916"/><rect x="168" y="48" fill="#009914"/><rect x="180" y="48" fill="#0a9913"/><rect x="192" y="48" fill="#1d9912"/><rect x="204" y="48" fill="#2d9911"/><rect x="216" y="48" fill="#3d990f"/><rect x="228" y="48" fill="#4c990e"/><rect x="240" y="48" fill="#5b990c"/><rect x="252" y="48" fill="#6a990a"/><rect x="264" y="48" fill="#799908"/><rect x="276" y="48" fill="#899905"/><rect x="288" y="48" fill="#999802"/><rect x="300" y="48" fill="#998900"/><rect x="312" y="48" fill="#997d00"/><rect x="324" y="48" fill="#997200"/><rect x="336" y="48" fill="#996800"/><rect x="348" y="48" fill="#996000"/><rect x="360" y="48" fill="#995800"/><rect x="372" y="48" fill="#995200"/><rect x="384" y="48" fill="#994c00"/><rect x="396" y="48" fill="#994600"/><rect x="408" y="48" fill="#994100"/><rect x="420" y="48" fill="#993c00"/><rect x="432" y="48" fill="#993800"/><rect x="444" y="48" fill="#993400"/><rect x="456" y="48" fill="#993000"/><rect x="468" y="48" fill="#992d00"/><rect x="480" y="48" fill="#992900"/><rect x="492" y="48" fill="#992600"/><rect x="504" y="48" fill="#992300"/><rect x="516" y="48" fill="#992000"/><rect x="528" y="48" fill="#991e00"/><rect x="540" y="48" fill="#991b00"/><rect x="552" y="48" fill="#991800"/><rect x="564" y="48" fill="#991600"/><rect x="576" y="48" fill="#991400"/><rect x="588" y="48" fill="#991100"/><rect x="600" y="48" fill="#990f00"/><rect x="612" y="48" fill="#990d00"/><rect x="624" y="48" fill="#990b00"/><rect x="636" y="48" fill="#990800"/><rect x="648" y="48" fill="#990600"/><rect x="660" y="48" fill="#990400"/><rect x="672" y="48" fill="#990100"/><rect x="684" y="48" fill="#990000"/><rect x="696" y="48" fill="#990000"/><rect x="708" y="48" fill="#990000"/><rect x="720" y="48" fill="#990000"/><rect x="732" y="48" fill="#990000"/><rect x="744" y="48" fill="#990000"/><rect x="756" y="48" fill="#990000"/><rect x="768" y="48" fill="#990000"/><rect x="780" y="48" fill="#990000"/><rect x="792" y="48" fill="#990000"/><rect x="804" y="48" fill="#990000"/><rect x="816" y="48" fill="#990000"/><rect x="828" y="48" fill="#990000"/><rect x="840" y="48" fill="#990000"/><rect x="852" y="48" fill="#990000"/><rect x="864" y="48" fill="#990000"/><rect x="0" y="60" fill="#00992b"/><rect x="12" y="60" fill="#00992a"/><rect x="24" y="60" fill="#00992a"/><rect x="36" y="60" fill="#009929"/><rect x="48" y="60" fill="#009929"/><rect x="60" y="60" fill="#009929"/><rect x="72" y="60" fill="#009928"/><rect x="84" y="60" fill="#009928"/><rect x="96" y="60" fill="#009927"/><rect x="108" y="60" fill="#009927"/><rect x="120" y="60" fill="#009926"/><rect x="132" y="60" fill="#009926"/><rect x="144" y="60" fill="#009925"/><rect x="156" y="60" fill="#009925"/><rect x="168" y="60" fill="#009924"/><rect x="180" y="60" fill="#069923"/><rect x="192" y="60" fill="#1a9923"/><rect x="204" y="60" fill="#2c9922"/><rect x="216" y="60" fill="#3c9921"/><rect x="228" y="60" fill="#4b9920"/><rect x="240" y="60" fill="#5b991f"/><rect x="252" y="60" fill="#6a991e"/><rect x="264" y="60" fill="#7a991d"/><rect x="276" y="60" fill="#8a991c"/><rect x="288" y="60" fill="#99961b"/><rect x="300" y="60" fill="#998717"/><rect x="312" y="60" fill="#997b14"/><rect x="324" y="60" fill="#997011"/><rect x="336" y="60" fill="#99660e"/><rect x="348" y="60" fill="#995e0c"/><rect x="360" y="60" fill="#99570a"/><rect x="372" y="60" fill="#995008"/><rect x="384" y="60" fill="#994a06"/><rect x="396" y="60" fill="#994404"/><rect x="408" y="60" fill="#993f02"/><rect x="420" y="60" fill="#993b00"/><rect x="432" y="60" fill="#993600"/><rect x="444" y="60" fill="#993200"/><rect x="456" y="60" fill="#992e00"/><rect x="468" y="60" fill="#992b00"/><rect x="480" y="60" fill="#992800"/><rect x="492" y="60" fill="#992400"/><rect x="504" y="60" fill="#992100"/><rect x="516" y="60" fill="#991f00"/><rect x="528" y="60" fill="#991c00"/><rect x="540" y="60" fill="#991900"/><rect x="552" y="60" fill="#991700"/><rect x="564" y="60" fill="#991400"/><rect x="576" y="60" fill="#991200"/><rect x="588" y="60" fill="#990f00"/><rect x="600" y="60" fill="#990d00"/><rect x="612" y="60" fill="#990b00"/><rect x="624" y="60" fill="#990900"/><rect x="636" y="60" fill="#990600"/><rect x="648" y="60" fill="#990400"/><rect x="660" y="60" fill="#990100"/><rect x="672" y="60" fill="#990000"/><rect x="684" y="60" fill="#990000"/><rect x="696" y="60" fill="#990000"/><rect x="708" y="60" fill="#990000"/><rect x="720" y="60" fill="#990000"/><rect x="732" y="60" fill="#990000"/><rect x="744" y="60" fill="#990000"/><rect x="756" y="60" fill="#990000"/><rect x="768" y="60" fill="#990000"/><rect x="780" y="60" fill="#990000"/><rect x="792" y="60" fill="#990000"/><rect x="804" y="60" fill="#990000"/><rect x="816" y="60" fill="#990000"/><rect x="828" y="60" fill="#990000"/><rect x="840" y="60" fill="#990000"/><rect x="852" y="60" fill="#990000"/><rect x="864" y="60" fill="#990000"/><rect x="0" y="72" fill="#009935"/><rect x="12" y="72" fill="#009935"/><rect x="24" y="72" fill="#009935"/><rect x="36" y="72" fill="#009935"/><rect x="48" y="72" fill="#009934"/><rect x="60" y="72" fill="#009934"/><rect x="72" y="72" fill="#009934"/><rect x="84" y="72" fill="#009934"/><rect x="96" y="72" fill="#009934"/><rect x="108" y="72" fill="#009933"/><rect x="120" y="72" fill="#009933"/><rect x="132" y="72" fill="#009933"/><rect x="144" y="72" fill="#009933"/><rect x="156" y="72" fill="#009933"/><rect x="168" y="72" fill="#009932"/><rect x="180" y="72" fill="#019932"/><rect x="192" y="72" fill="#189932"/><rect x="204" y="72" fill="#2a9932"/><rect x="216" y="72" fill="#3a9931"/><rect x="228" y="72" fill="#4a9931"/><rect x="240" y="72" fill="#5a9931"/><rect x="252" y="72" fill="#6a9930"/><rect x="264" y="72" fill="#7b9930"/><rect x="276" y="72" fill="#8b992f"/><rect x="288" y="72" fill="#99952e"/><rect x="300" y="72" fill="#998629"/><rect x="312" y="72" fill="#997924"/><rect x="324" y="72" fill="#996e21"/><rect x="336" y="72" fill="#99641d"/><rect x="348" y="72" fill="#995c1b"/><rect x="360" y="72" fill="#995518"/><rect x="372" y="72" fill="#994e16"/><rect x="384" y="72" fill="#994814"/><rect x="396" y="72" fill="#994212"/><rect x="408" y="72" fill="#993d10"/><rect x="420" y="72" fill="#99390e"/><rect x="432" y="72" fill="#99340d"/><rect x="444" y="72" fill="#99300b"/><rect x="456" y="72" fill="#992d0a"/><rect x="468" y="72" fill="#992908"/><rect x="480" y="72" fill="#992607"/><rect x="492" y="72" fill="#992306"/><rect x="504" y="72" fill="#992005"/><rect x="516" y="72" fill="#991d04"/><rect x="528" y="72" fill="#991a02"/><rect x="540" y="72" fill="#991701"/><rect x="552" y="72" fill="#991500"/><rect x="564" y="72" fill="#991200"/><rect x="576" y="72" fill="#991000"/><rect x="588" y="72" fill="#990e00"/><rect x="600" y="72" fill="#990b00"/><rect x="612" y="72" fill="#990900"/><rect x="624" y="72" fill="#990600"/><rect x="636" y="72" fill="#990400"/><rect x="648" y="72" fill="#990100"/><rect x="660" y="72" fill="#990000"/><rect x="672" y="72" fill="#990000"/><rect x="684" y="72" fill="#990000"/><rect x="696" y="72" fill="#990000"/><rect x="708" y="72" fill="#990000"/><rect x="720" y="72" fill="#990000"/><rect x="732" y="72" fill="#990000"/><rect x="744" y="72" fill="#990000"/><rect x="756" y="72" fill="#990000"/><rect x="768" y="72" fill="#990000"/><rect x="780" y="72" fill="#990000"/><rect x="792" y="72" fill="#990000"/><rect x="804" y="72" fill="#990000"/><rect x="816" y="72" fill="#990000"/><rect x="828" y="72" fill="#990000"/><rect x="840" y="72" fill="#990000"/><rect x="852" y="72" fill="#990000"/><rect x="864" y="72" fill="#990000"/><rect x="0" y="84" fill="#00993f"/><rect x="12" y="84" fill="#00993f"/><rect x="24" y="84" fill="#00993f"/><rect x="36" y="84" fill="#00993f"/><rect x="48" y="84" fill="#00993f"/><rect x="60" y="84" fill="#009940"/><rect x="72" y="84" fill="#009940"/><rect x="84" y="84" fill="#009940"/><rect x="96" y="84" fill="#009940"/><rect x="108" y="84" fill="#009940"/><rect x="120" y="84" fill="#009940"/><rect x="132" y="84" fill="#009940"/><rect x="144" y="84" fill="#009940"/><rect x="156" y="84" fill="#009940"/><rect x="168" y="84" fill="#009940"/><rect x="180" y="84" fill="#009940"/><rect x="192" y="84" fill="#159940"/><rect x="204" y="84" fill="#289941"/><rect x="216" y="84" fill="#399941"/><rect x="228" y="84" fill="#4a9941"/><rect x="240" y="84" fill="#5a9941"/><rect x="252" y="84" fill="#6b9941"/><rect x="264" y="84" fill="#7b9941"/><rect x="276" y="84" fill="#8c9941"/><rect x="288" y="84" fill="#99933f"/><rect x="300" y="84" fill="#998439"/><rect x="312" y="84" fill="#997733"/><rect x="324" y="84" fill="#996c2f"/><rect x="336" y="84" fill="#99632b"/><rect x="348" y="84" fill="#995a27"/><rect x="360" y="84" fill="#995324"/><rect x="372" y="84" fill="#994c21"/><rect x="384" y="84" fill="#99461f"/><rect x="396" y="84" fill="#99401c"/><rect x="408" y="84" fill="#993b1a"/><rect x="420" y="84" fill="#993718"/><rect x="432" y="84" fill="#993217"/><rect x="444" y="84" fill="#992e15"/><rect x="456" y="84" fill="#992b13"/><rect x="468" y="84" fill="#992712"/><rect x="480" y="84" fill="#992411"/><rect x="492" y="84" fill="#99210f"/><rect x="504" y="84" fill="#991e0e"/><rect x="516" y="84" fill="#991b0d"/><rect x="528" y="84" fill="#99180c"/><rect x="540" y="84" fill="#99160b"/><rect x="552" y="84" fill="#99130a"/><rect x="564" y="84" fill="#991009"/><rect x="576" y="84" fill="#990e08"/><rect x="588" y="84" fill="#990c07"/><rect x="600" y="84" fill="#990906"/><rect x="612" y="84" fill="#990705"/><rect x="624" y="84" fill="#990404"/><rect x="636" y="84" fill="#990103"/><rect x="648" y="84" fill="#990002"/><rect x="660" y="84" fill="#990001"/><rect x="672" y="84" fill="#990000"/><rect x="684" y="84" fill="#990000"/><rect x="696" y="84" fill="#990000"/><rect x="708" y="84" fill="#990000"/><rect x="720" y="84" fill="#990000"/><rect x="732" y="84" fill="#990000"/><rect x="744" y="84" fill="#990000"/><rect x="756" y="84" fill="#990000"/><rect x="768" y="84" fill="#990000"/><rect x="780" y="84" fill="#990000"/><rect x="792" y="84" fill="#990000"/><rect x="804" y="84" fill="#990000"/><rect x="816" y="84" fill="#990000"/><rect x="828" y="84" fill="#990000"/><rect x="840" y="84" fill="#990000"/><rect x="852" y="84" fill="#990000"/><rect x="864" y="84" fill="#990000"/><rect x="0" y="96" fill="#009949"/><rect x="12" y="96" fill="#00994a"/><rect x="24" y="96" fill="#00994a"/><rect x="36" y="96" fill="#00994a"/><rect x="48" y="96" fill="#00994a"/><rect x="60" y="96" fill="#00994b"/><rect x="72" y="96" fill="#00994b"/><rect x="84" y="96" fill="#00994b"/><rect x="96" y="96" fill="#00994c"/><rect x="108" y="96" fill="#00994c"/><rect x="120" y="96" fill="#00994c"/><rect x="132" y="96" fill="#00994d"/><rect x="144" y="96" fill="#00994d"/><rect x="156" y="96" fill="#00994d"/><rect x="168" y="96" fill="#00994e"/><rect x="180" y="96" fill="#00994e"/><rect x="192" y="96" fill="#13994f"/><rect x="204" y="96" fill="#26994f"/><rect x="216" y="96" fill="#389950"/><rect x="228" y="96" fill="#499950"/><rect x="240" y="96" fill="#5a9951"/><rect x="252" y="96" fill="#6b9952"/><rect x="264" y="96" fill="#7c9952"/><rect x="276" y="96" fill="#8e9953"/><rect x="288" y="96" fill="#999150"/><rect x="300" y="96" fill="#998248"/><rect x="312" y="96" fill="#997542"/><rect x="324" y="96" fill="#996a3c"/><rect x="336" y="96" fill="#996037"/><rect x="348" y="96" fill="#995833"/><rect x="360" y="96" fill="#99512f"/><rect x="372" y="96" fill="#994a2c"/><rect x="384" y="96" fill="#994429"/><rect x="396" y="96" fill="#993e26"/><rect x="408" y="96" fill="#993924"/><rect x="420" y="96" fill="#993522"/><rect x="432" y="96" fill="#993120"/><rect x="444" y="96" fill="#992d1e"/><rect x="456" y="96" fill="#99291c"/><rect x="468" y="96" fill="#99251a"/><rect x="480" y="96" fill="#992219"/><rect x="492" y="96" fill="#991f17"/><rect x="504" y="96" fill="#991c16"/><rect x="516" y="96" fill="#991915"/><rect x="528" y="96" fill="#991613"/><rect x="540" y="96" fill="#991412"/><rect x="552" y="96" fill="#991111"/><rect x="564" y="96" fill="#990e10"/><rect x="576" y="96" fill="#990c0f"/><rect x="588" y="96" fill="#99090e"/><rect x="600" y="96" fill="#99070d"/><rect x="612" y="96" fill="#99040c"/><rect x="624" y="96" fill="#99010b"/><rect x="636" y="96" fill="#99000b"/><rect x="648" y="96" fill="#99000a"/><rect x="660" y="96" fill="#990009"/><rect x="672" y="96" fill="#990008"/><rect x="684" y="96" fill="#990007"/><rect x="696" y="96" fill="#990007"/><rect x="708" y="96" fill="#990006"/><rect x="720" y="96" fill="#990005"/><rect x="732" y="96" fill="#990005"/><rect x="744" y="96" fill="#990004"/><rect x="756" y="96" fill="#990003"/><rect x="768" y="96" fill="#990002"/><rect x="780" y="96" fill="#990002"/><rect x="792" y="96" fill="#990001"/><rect x="804" y="96" fill="#990000"/><rect x="816" y="96" fill="#990000"/><rect x="828" y="96" fill="#990000"/><rect x="840" y="96" fill="#990000"/><rect x="852" y="96" fill="#990000"/><rect x="864" y="96" fill="#990000"/><rect x="0" y="108" fill="#009953"/><rect x="12" y="108" fill="#009954"/><rect x="24" y="108" fill="#009954"/><rect x="36" y="108" fill="#009955"/><rect x="48" y="108" fill="#009955"/><rect x="60" y="108" fill="#009956"/><rect x="72" y="108" fill="#009956"/><rect x="84" y="108" fill="#009957"/><rect x="96" y="108" fill="#009957"/><rect x="108" y="108" fill="#009958"/><rect x="120" y="108" fill="#009959"/><rect x="132" y="108" fill="#009959"/><rect x="144" y="108" fill="#00995a"/><rect x="156" y="108" fill="#00995b"/><rect x="168" y="108" fill="#00995c"/><rect x="180" y="108" fill="#00995c"/><rect x="192" y="108" fill="#0f995d"/><rect x="204" y="108" fill="#24995e"/><rect x="216" y="108" fill="#36995f"/><rect x="228" y="108" fill="#489960"/><rect x="240" y="108" fill="#599961"/><rect x="252" y="108" fill="#6b9962"/><rect x="264" y="108" fill="#7d9963"/><rect x="276" y="108" fill="#8f9965"/><rect x="288" y="108" fill="#999060"/><rect x="300" y="108" fill="#998057"/><rect x="312" y="108" fill="#99734f"/><rect x="324" y="108" fill="#996849"/><rect x="336" y="108" fill="#995e43"/><rect x="348" y="108" fill="#99563e"/><rect x="360" y="108" fill="#994f3a"/><rect x="372" y="108" fill="#994836"/><rect x="384" y="108" fill="#994233"/><rect x="396" y="108" fill="#993c30"/><rect x="408" y="108" fill="#99372d"/><rect x="420" y="108" fill="#99332a"/><rect x="432" y="108" fill="#992f28"/><rect x="444" y="108" fill="#992b26"/><rect x="456" y="108" fill="#992724"/><rect x="468" y="108" fill="#992322"/><rect x="480" y="108" fill="#992020"/><rect x="492" y="108" fill="#991d1f"/><rect x="504" y="108" fill="#991a1d"/><rect x="516" y="108" fill="#99171c"/><rect x="528" y="108" fill="#99141a"/><rect x="540" y="108" fill="#991219"/><rect x="552" y="108" fill="#990f18"/><rect x="564" y="108" fill="#990c17"/><rect x="576" y="108" fill="#990a15"/><rect x="588" y="108" fill="#990714"/><rect x="600" y="108" fill="#990413"/><rect x="612" y="108" fill="#990112"/><rect x="624" y="108" fill="#990011"/><rect x="636" y="108" fill="#990011"/><rect x="648" y="108" fill="#990010"/><rect x="660" y="108" fill="#99000f"/><rect x="672" y="108" fill="#99000e"/><rect x="684" y="108" fill="#99000d"/><rect x="696" y="108" fill="#99000d"/><rect x="708" y="108" fill="#99000c"/><rect x="720" y="108" fill="#99000b"/><rect x="732" y="108" fill="#99000a"/><rect x="744" y="108" fill="#99000a"/><rect x="756" y="108" fill="#990009"/><rect x="768" y="108" fill="#990008"/><rect x="780" y="108" fill="#990008"/><rect x="792" y="108" fill="#990007"/><rect x="804" y="108" fill="#990007"/><rect x="816" y="108" fill="#990006"/><rect x="828" y="108" fill="#990005"/><rect x="840" y="108" fill="#990005"/><rect x="852" y="108" fill="#990004"/><rect x="864" y="108" fill="#990004"/><rect x="0" y="120" fill="#00995e"/><rect x="12" y="120" fill="#00995e"/><rect x="24" y="120" fill="#00995f"/><rect x="36" y="120" fill="#009960"/><rect x="48" y="120" fill="#009960"/><rect x="60" y="120" fill="#009961"/><rect x="72" y="120" fill="#009962"/><rect x="84" y="120" fill="#009963"/><rect x="96" y="120" fill="#009963"/><rect x="108" y="120" fill="#009964"/><rect x="120" y="120" fill="#009965"/><rect x="132" y="120" fill="#009966"/><rect x="144" y="120" fill="#009967"/><rect x="156" y="120" fill="#009968"/><rect x="168" y="120" fill="#009969"/><rect x="180" y="120" fill="#00996b"/><rect x="192" y="120" fill="#0c996c"/><rect x="204" y="120" fill="#22996d"/><rect x="216" y="120" fill="#35996e"/><rect x="228" y="120" fill="#479970"/><rect x="240" y="120" fill="#599971"/><rect x="252" y="120" fill="#6b9973"/><rect x="264" y="120" fill="#7e9975"/><rect x="276" y="120" fill="#919977"/><rect x="288" y="120" fill="#998e70"/><rect x="300" y="120" fill="#997e66"/><rect x="312" y="120" fill="#99715d"/><rect x="324" y="120" fill="#996655"/><rect x="336" y="120" fill="#995c4f"/><rect x="348" y="120" fill="#995449"/><rect x="360" y="120" fill="#994c45"/><rect x="372" y="120" fill="#994640"/><rect x="384" y="120" fill="#99403c"/><rect x="396" y="120" fill="#993a39"/><rect x="408" y="120" fill="#993536"/><rect x="420" y="120" fill="#993133"/><rect x="432" y="120" fill="#992c30"/><rect x="444" y="120" fill="#99292e"/><rect x="456" y="120" fill="#99252b"/><rect x="468" y="120" fill="#992129"/><rect x="480" y="120" fill="#991e27"/><rect x="492" y="120" fill="#991b25"/><rect x="504" y="120" fill="#991824"/><rect x="516" y="120" fill="#991522"/><rect x="528" y="120" fill="#991221"/><rect x="540" y="120" fill="#990f1f"/><rect x="552" y="120" fill="#990d1e"/><rect x="564" y="120" fill="#990a1d"/><rect x="576" y="120" fill="#99071b"/><rect x="588" y="120" fill="#99051a"/><rect x="600" y="120" fill="#990119"/><rect x="612" y="120" fill="#990018"/><rect x="624" y="120" fill="#990017"/><rect x="636" y="120" fill="#990016"/><rect x="648" y="120" fill="#990015"/><rect x="660" y="120" fill="#990014"/><rect x="672" y="120" fill="#990013"/><rect x="684" y="120" fill="#990013"/><rect x="696" y="120" fill="#990012"/><rect x="708" y="120" fill="#990011"/><rect x="720" y="120" fill="#990010"/><rect x="732" y="120" fill="#99000f"/><rect x="744" y="120" fill="#99000f"/><rect x="756" y="120" fill="#99000e"/><rect x="768" y="120" fill="#99000d"/><rect x="780" y="120" fill="#99000d"/><rect x="792" y="120" fill="#99000c"/><rect x="804" y="120" fill="#99000c"/><rect x="816" y="120" fill="#99000b"/><rect x="828" y="120" fill="#99000a"/><rect x="840" y="120" fill="#99000a"/><rect x="852" y="120" fill="#990009"/><rect x="864" y="120" fill="#990009"/><rect x="0" y="132" fill="#009968"/><rect x="12" y="132" fill="#009969"/><rect x="24" y="132" fill="#009969"/><rect x="36" y="132" fill="#00996a"/><rect x="48" y="132" fill="#00996b"/><rect x="60" y="132" fill="#00996c"/><rect x="72" y="132" fill="#00996d"/><rect x="84" y="132" fill="#00996e"/><rect x="96" y="132" fill="#00996f"/><rect x="108" y="132" fill="#009971"/><rect x="120" y="132" fill="#009972"/><rect x="132" y="132" fill="#009973"/><rect x="144" y="132" fill="#009974"/><rect x="156" y="132" fill="#009976"/><rect x="168" y="132" fill="#009977"/><rect x="180" y="132" fill="#009979"/><rect x="192" y="132" fill="#08997b"/><rect x="204" y="132" fill="#1f997c"/><rect x="216" y="132" fill="#33997e"/><rect x="228" y="132" fill="#469980"/><rect x="240" y="132" fill="#599982"/><rect x="252" y="132" fill="#6c9984"/><rect x="264" y="132" fill="#7f9987"/><rect x="276" y="132" fill="#929989"/><rect x="288" y="132" fill="#998c80"/><rect x="300" y="132" fill="#997c74"/><rect x="312" y="132" fill="#996f6a"/><rect x="324" y="132" fill="#996462"/><rect x="336" y="132" fill="#995a5a"/><rect x="348" y="132" fill="#995254"/><rect x="360" y="132" fill="#994a4f"/><rect x="372" y="132" fill="#99444a"/><rect x="384" y="132" fill="#993e45"/><rect x="396" y="132" fill="#993842"/><rect x="408" y="132" fill="#99333e"/><rect x="420" y="132" fill="#992f3b"/><rect x="432" y="132" fill="#992a38"/><rect x="444" y="132" fill="#992635"/><rect x="456" y="132" fill="#992333"/><rect x="468" y="132" fill="#991f30"/><rect x="480" y="132" fill="#991c2e"/><rect x="492" y="132" fill="#99192c"/><rect x="504" y="132" fill="#99162a"/><rect x="516" y="132" fill="#991328"/><rect x="528" y="132" fill="#991027"/><rect x="540" y="132" fill="#990d25"/><rect x="552" y="132" fill="#990a24"/><rect x="564" y="132" fill="#990822"/><rect x="576" y="132" fill="#990521"/><rect x="588" y="132" fill="#990120"/><rect x="600" y="132" fill="#99001f"/><rect x="612" y="132" fill="#99001d"/><rect x="624" y="132" fill="#99001c"/><rect x="636" y="132" fill="#99001b"/><rect x="648" y="132" fill="#99001a"/><rect x="660" y="132" fill="#990019"/><rect x="672" y="132" fill="#990018"/><rect x="684" y="132" fill="#990017"/><rect x="696" y="132" fill="#990017"/><rect x="708" y="132" fill="#990016"/><rect x="720" y="132" fill="#990015"/><rect x="732" y="132" fill="#990014"/><rect x="744" y="132" fill="#990013"/><rect x="756" y="132" fill="#990013"/><rect x="768" y="132" fill="#990012"/><rect x="780" y="132" fill="#990011"/><rect x="792" y="132" fill="#990011"/><rect x="804" y="132" fill="#990010"/><rect x="816" y="132" fill="#99000f"/><rect x="828" y="132" fill="#99000f"/><rect x="840" y="132" fill="#99000e"/><rect x="852" y="132" fill="#99000e"/><rect x="864" y="132" fill="#99000d"/><rect x="0" y="144" fill="#009972"/><rect x="12" y="144" fill="#009973"/><rect x="24" y="144" fill="#009974"/><rect x="36" y="144" fill="#009975"/><rect x="48" y="144" fill="#009976"/><rect x="60" y="144" fill="#009978"/><rect x="72" y="144" fill="#009979"/><rect x="84" y="144" fill="#00997a"/><rect x="96" y="144" fill="#00997c"/><rect x="108" y="144" fill="#00997d"/><rect x="120" y="144" fill="#00997f"/><rect x="132" y="144" fill="#009980"/><rect x="144" y="144" fill="#009982"/><rect x="156" y="144" fill="#009984"/><rect x="168" y="144" fill="#009986"/><rect x="180" y="144" fill="#009988"/><rect x="192" y="144" fill="#02998a"/><rect x="204" y="144" fill="#1d998c"/><rect x="216" y="144" fill="#32998e"/><rect x="228" y="144" fill="#459991"/><rect x="240" y="144" fill="#589993"/><rect x="252" y="144" fill="#6c9996"/><rect x="264" y="144" fill="#7f9899"/><rect x="276" y="144" fill="#909599"/><rect x="288" y="144" fill="#998a90"/><rect x="300" y="144" fill="#997a83"/><rect x="312" y="144" fill="#996c77"/><rect x="324" y="144" fill="#99616e"/><rect x="336" y="144" fill="#995866"/><rect x="348" y="144" fill="#994f5f"/><rect x="360" y="144" fill="#994859"/><rect x="372" y="144" fill="#994153"/><rect x="384" y="144" fill="#993b4e"/><rect x="396" y="144" fill="#99364a"/><rect x="408" y="144" fill="#993146"/><rect x="420" y="144" fill="#992c43"/><rect x="432" y="144" fill="#99283f"/><rect x="444" y="144" fill="#99243c"/><rect x="456" y="144" fill="#99213a"/><rect x="468" y="144" fill="#991d37"/><rect x="480" y="144" fill="#991a35"/><rect x="492" y="144" fill="#991733"/><rect x="504" y="144" fill="#991430"/><rect x="516" y="144" fill="#99112f"/><rect x="528" y="144" fill="#990e2d"/><rect x="540" y="144" fill="#990b2b"/><rect x="552" y="144" fill="#990829"/><rect x="564" y="144" fill="#990528"/><rect x="576" y="144" fill="#990226"/><rect x="588" y="144" fill="#990025"/><rect x="600" y="144" fill="#990024"/><rect x="612" y="144" fill="#990022"/><rect x="624" y="144" fill="#990021"/><rect x="636" y="144" fill="#990020"/><rect x="648" y="144" fill="#99001f"/><rect x="660" y="144" fill="#99001e"/><rect x="672" y="144" fill="#99001d"/><rect x="684" y="144" fill="#99001c"/><rect x="696" y="144" fill="#99001b"/><rect x="708" y="144" fill="#99001a"/><rect x="720" y="144" fill="#990019"/><rect x="732" y="144" fill="#990018"/><rect x="744" y="144" fill="#990018"/><rect x="756" y="144" fill="#990017"/><rect x="768" y="144" fill="#990016"/><rect x="780" y="144" fill="#990015"/><rect x="792" y="144" fill="#990015"/><rect x="804" y="144" fill="#990014"/><rect x="816" y="144" fill="#990013"/><rect x="828" y="144" fill="#990013"/><rect x="840" y="144" fill="#990012"/><rect x="852" y="144" fill="#990011"/><rect x="864" y="144" fill="#990011"/><rect x="0" y="156" fill="#00997c"/><rect x="12" y="156" fill="#00997e"/><rect x="24" y="156" fill="#00997f"/><rect x="36" y="156" fill="#009980"/><rect x="48" y="156" fill="#009982"/><rect x="60" y="156" fill="#009983"/><rect x="72" y="156" fill="#009985"/><rect x="84" y="156" fill="#009986"/><rect x="96" y="156" fill="#009988"/><rect x="108" y="156" fill="#00998a"/><rect x="120" y="156" fill="#00998c"/><rect x="132" y="156" fill="#00998e"/><rect x="144" y="156" fill="#009990"/><rect x="156" y="156" fill="#009992"/><rect x="168" y="156" fill="#009994"/><rect x="180" y="156" fill="#009997"/><rect x="192" y="156" fill="#009899"/><rect x="204" y="156" fill="#199599"/><rect x="216" y="156" fill="#2e9399"/><rect x="228" y="156" fill="#409099"/><rect x="240" y="156" fill="#518d99"/><rect x="252" y="156" fill="#628a99"/><rect x="264" y="156" fill="#728799"/><rect x="276" y="156" fill="#828499"/><rect x="288" y="156" fill="#918199"/><rect x="300" y="156" fill="#997791"/><rect x="312" y="156" fill="#996a85"/><rect x="324" y="156" fill="#995f7a"/><rect x="336" y="156" fill="#995571"/><rect x="348" y="156" fill="#994d69"/><rect x="360" y="156" fill="#994663"/><rect x="372" y="156" fill="#993f5d"/><rect x="384" y="156" fill="#993957"/><rect x="396" y="156" fill="#993453"/><rect x="408" y="156" fill="#992f4e"/><rect x="420" y="156" fill="#992a4a"/><rect x="432" y="156" fill="#992647"/><rect x="444" y="156" fill="#992244"/><rect x="456" y="156" fill="#991e41"/><rect x="468" y="156" fill="#991b3e"/><rect x="480" y="156" fill="#99173b"/><rect x="492" y="156" fill="#991439"/><rect x="504" y="156" fill="#991137"/><rect x="516" y="156" fill="#990e34"/><rect x="528" y="156" fill="#990b32"/><rect x="540" y="156" fill="#990831"/><rect x="552" y="156" fill="#99052f"/><rect x="564" y="156" fill="#99022d"/><rect x="576" y="156" fill="#99002c"/><rect x="588" y="156" fill="#99002a"/><rect x="600" y="156" fill="#990029"/><rect x="612" y="156" fill="#990027"/><rect x="624" y="156" fill="#990026"/><rect x="636" y="156" fill="#990025"/><rect x="648" y="156" fill="#990024"/><rect x="660" y="156" fill="#990023"/><rect x="672" y="156" fill="#990021"/><rect x="684" y="156" fill="#990020"/><rect x="696" y="156" fill="#99001f"/><rect x="708" y="156" fill="#99001e"/><rect x="720" y="156" fill="#99001e"/><rect x="732" y="156" fill="#99001d"/><rect x="744" y="156" fill="#99001c"/><rect x="756" y="156" fill="#99001b"/><rect x="768" y="156" fill="#99001a"/><rect x="780" y="156" fill="#990019"/><rect x="792" y="156" fill="#990019"/><rect x="804" y="156" fill="#990018"/><rect x="816" y="156" fill="#990017"/><rect x="828" y="156" fill="#990016"/><rect x="840" y="156" fill="#990016"/><rect x="852" y="156" fill="#990015"/><rect x="864" y="156" fill="#990015"/><rect x="0" y="168" fill="#009987"/><rect x="12" y="168" fill="#009988"/><rect x="24" y="168" fill="#00998a"/><rect x="36" y="168" fill="#00998c"/><rect x="48" y="168" fill="#00998d"/><rect x="60" y="168" fill="#00998f"/><rect x="72" y="168" fill="#009991"/><rect x="84" y="168" fill="#009993"/><rect x="96" y="168" fill="#009995"/><rect x="108" y="168" fill="#009997"/><rect x="120" y="168" fill="#009899"/><rect x="132" y="168" fill="#009699"/><rect x="144" y="168" fill="#009399"/><rect x="156" y="168" fill="#009199"/><rect x="168" y="168" fill="#008f99"/><rect x="180" y="168" fill="#008c99"/><rect x="192" y="168" fill="#008999"/><rect x="204" y="168" fill="#148799"/><rect x="216" y="168" fill="#288499"/><rect x="228" y="168" fill="#398299"/><rect x="240" y="168" fill="#497f99"/><rect x="252" y="168" fill="#587c99"/><rect x="264" y="168" fill="#677999"/><rect x="276" y="168" fill="#757699"/><rect x="288" y="168" fill="#847399"/><rect x="300" y="168" fill="#927099"/><rect x="312" y="168" fill="#996892"/><rect x="324" y="168" fill="#995c86"/><rect x="336" y="168" fill="#99537c"/><rect x="348" y="168" fill="#994a74"/><rect x="360" y="168" fill="#99436c"/><rect x="372" y="168" fill="#993d66"/><rect x="384" y="168" fill="#993760"/><rect x="396" y="168" fill="#99315b"/><rect x="408" y="168" fill="#992c56"/><rect x="420" y="168" fill="#992852"/><rect x="432" y="168" fill="#99244e"/><rect x="444" y="168" fill="#99204b"/><rect x="456" y="168" fill="#991c47"/><rect x="468" y="168" fill="#991844"/><rect x="480" y="168" fill="#991542"/><rect x="492" y="168" fill="#99123f"/><rect x="504" y="168" fill="#990f3d"/><rect x="516" y="168" fill="#990c3a"/><rect x="528" y="168" fill="#990938"/><rect x="540" y="168" fill="#990536"/><rect x="552" y="168" fill="#990234"/><rect x="564" y="168" fill="#990032"/><rect x="576" y="168" fill="#990031"/><rect x="588" y="168" fill="#99002f"/><rect x="600" y="168" fill="#99002e"/><rect x="612" y="168" fill="#99002c"/><rect x="624" y="168" fill="#99002b"/><rect x="636" y="168" fill="#990029"/><rect x="648" y="168" fill="#990028"/><rect x="660" y="168" fill="#990027"/><rect x="672" y="168" fill="#990026"/><rect x="684" y="168" fill="#990025"/><rect x="696" y="168" fill="#990024"/><rect x="708" y="168" fill="#990023"/><rect x="720" y="168" fill="#990022"/><rect x="732" y="168" fill="#990021"/><rect x="744" y="168" fill="#990020"/><rect x="756" y="168" fill="#99001f"/><rect x="768" y="168" fill="#99001e"/><rect x="780" y="168" fill="#99001d"/><rect x="792" y="168" fill="#99001c"/><rect x="804" y="168" fill="#99001c"/><rect x="816" y="168" fill="#99001b"/><rect x="828" y="168" fill="#99001a"/><rect x="840" y="168" fill="#990019"/><rect x="852" y="168" fill="#990019"/><rect x="864" y="168" fill="#990018"/><rect x="0" y="180" fill="#009992"/><rect x="12" y="180" fill="#009993"/><rect x="24" y="180" fill="#009995"/><rect x="36" y="180" fill="#009997"/><rect x="48" y="180" fill="#009899"/><rect x="60" y="180" fill="#009699"/><rect x="72" y="180" fill="#009499"/><rect x="84" y="180" fill="#009299"/><rect x="96" y="180" fill="#009099"/><rect x="108" y="180" fill="#008e99"/><rect x="120" y="180" fill="#008b99"/><rect x="132" y="180" fill="#008999"/><rect x="144" y="180" fill="#008799"/><rect x="156" y="180" fill="#008599"/><rect x="168" y="180" fill="#008299"/><rect x="180" y="180" fill="#008099"/><rect x="192" y="180" fill="#007d99"/><rect x="204" y="180" fill="#0f7b99"/><rect x="216" y="180" fill="#227899"/><rect x="228" y="180" fill="#327599"/><rect x="240" y="180" fill="#427399"/><rect x="252" y="180" fill="#507099"/><rect x="264" y="180" fill="#5e6d99"/><rect x="276" y="180" fill="#6b6a99"/><rect x="288" y="180" fill="#786799"/><rect x="300" y="180" fill="#856499"/><rect x="312" y="180" fill="#926199"/><rect x="324" y="180" fill="#995a92"/><rect x="336" y="180" fill="#995088"/><rect x="348" y="180" fill="#99487e"/><rect x="360" y="180" fill="#994176"/><rect x="372" y="180" fill="#993a6f"/><rect x="384" y="180" fill="#993469"/><rect x="396" y="180" fill="#992f63"/><rect x="408" y="180" fill="#992a5e"/><rect x="420" y="180" fill="#99255a"/><rect x="432" y="180" fill="#992155"/><rect x="444" y="180" fill="#991d52"/><rect x="456" y="180" fill="#991a4e"/><rect x="468" y="180" fill="#99164b"/><rect x="480" y="180" fill="#991348"/><rect x="492" y="180" fill="#990f45"/><rect x="504" y="180" fill="#990c42"/><rect x="516" y="180" fill="#990940"/><rect x="528" y="180" fill="#99063e"/><rect x="540" y="180" fill="#99023b"/><rect x="552" y="180" fill="#990039"/><rect x="564" y="180" fill="#990038"/><rect x="576" y="180" fill="#990036"/><rect x="588" y="180" fill="#990034"/><rect x="600" y="180" fill="#990032"/><rect x="612" y="180" fill="#990031"/><rect x="624" y="180" fill="#99002f"/><rect x="636" y="180" fill="#99002e"/><rect x="648" y="180" fill="#99002d"/><rect x="660" y="180" fill="#99002b"/><rect x="672" y="180" fill="#99002a"/><rect x="684" y="180" fill="#990029"/><rect x="696" y="180" fill="#990028"/><rect x="708" y="180" fill="#990027"/><rect x="720" y="180" fill="#990026"/><rect x="732" y="180" fill="#990025"/><rect x="744" y="180" fill="#990024"/><rect x="756" y="180" fill="#990023"/><rect x="768" y="180" fill="#990022"/><rect x="780" y="180" fill="#990021"/><rect x="792" y="180" fill="#990020"/><rect x="804" y="180" fill="#99001f"/><rect x="816" y="180" fill="#99001e"/><rect x="828" y="180" fill="#99001e"/><rect x="840" y="180" fill="#99001d"/><rect x="852" y="180" fill="#99001c"/><rect x="864" y="180" fill="#99001b"/><rect x="0" y="192" fill="#009499"/><rect x="12" y="192" fill="#009399"/><rect x="24" y="192" fill="#009199"/><rect x="36" y="192" fill="#008f99"/><rect x="48" y="192" fill="#008d99"/><rect x="60" y="192" fill="#008b99"/><rect x="72" y="192" fill="#008999"/><rect x="84" y="192" fill="#008799"/><rect x="96" y="192" fill="#008599"/><rect x="108" y="192" fill="#008399"/><rect x="120" y="192" fill="#008099"/><rect x="132" y="192" fill="#007e99"/><rect x="144" y="192" fill="#007c99"/><rect x="156" y="192" fill="#007a99"/><rect x="168" y="192" fill="#007799"/><rect x="180" y="192" fill="#007599"/><rect x="192" y="192" fill="#007399"/><rect x="204" y="192" fill="#0b7099"/><rect x="216" y="192" fill="#1d6e99"/><rect x="228" y="192" fill="#2d6b99"/><rect x="240" y="192" fill="#3b6899"/><rect x="252" y="192" fill="#496699"/><rect x="264" y="192" fill="#566399"/><rect x="276" y="192" fill="#626099"/><rect x="288" y="192" fill="#6f5d99"/><rect x="300" y="192" fill="#7b5a99"/><rect x="312" y="192" fill="#875799"/><rect x="324" y="192" fill="#935499"/><rect x="336" y="192" fill="#994e93"/><rect x="348" y="192" fill="#994589"/><rect x="360" y="192" fill="#993e80"/><rect x="372" y="192" fill="#993778"/><rect x="384" y="192" fill="#993272"/><rect x="396" y="192" fill="#992c6b"/><rect x="408" y="192" fill="#992766"/><rect x="420" y="192" fill="#992361"/><rect x="432" y="192" fill="#991f5d"/><rect x="444" y="192" fill="#991b58"/><rect x="456" y="192" fill="#991755"/><rect x="468" y="192" fill="#991351"/><rect x="480" y="192" fill="#99104e"/><rect x="492" y="192" fill="#990d4b"/><rect x="504" y="192" fill="#990948"/><rect x="516" y="192" fill="#990646"/><rect x="528" y="192" fill="#990243"/><rect x="540" y="192" fill="#990041"/><rect x="552" y="192" fill="#99003f"/><rect x="564" y="192" fill="#99003d"/><rect x="576" y="192" fill="#99003b"/><rect x="588" y="192" fill="#990039"/><rect x="600" y="192" fill="#990037"/><rect x="612" y="192" fill="#990035"/><rect x="624" y="192" fill="#990034"/><rect x="636" y="192" fill="#990032"/><rect x="648" y="192" fill="#990031"/><rect x="660" y="192" fill="#990030"/><rect x="672" y="192" fill="#99002e"/><rect x="684" y="192" fill="#99002d"/><rect x="696" y="192" fill="#99002c"/><rect x="708" y="192" fill="#99002b"/><rect x="720" y="192" fill="#990029"/><rect x="732" y="192" fill="#990028"/><rect x="744" y="192" fill="#990027"/><rect x="756" y="192" fill="#990026"/><rect x="768" y="192" fill="#990025"/><rect x="780" y="192" fill="#990024"/><rect x="792" y="192" fill="#990024"/><rect x="804" y="192" fill="#990023"/><rect x="816" y="192" fill="#990022"/><rect x="828" y="192" fill="#990021"/><rect x="840" y="192" fill="#990020"/><rect x="852" y="192" fill="#990020"/><rect x="864" y="192" fill="#99001f"/><rect x="0" y="204" fill="#008a99"/><rect x="12" y="204" fill="#008999"/><rect x="24" y="204" fill="#008799"/><rect x="36" y="204" fill="#008599"/><rect x="48" y="204" fill="#008399"/><rect x="60" y="204" fill="#008199"/><rect x="72" y="204" fill="#007f99"/><rect x="84" y="204" fill="#007d99"/><rect x="96" y="204" fill="#007b99"/><rect x="108" y="204" fill="#007999"/><rect x="120" y="204" fill="#007799"/><rect x="132" y="204" fill="#007599"/><rect x="144" y="204" fill="#007299"/><rect x="156" y="204" fill="#007099"/><rect x="168" y="204" fill="#006e99"/><rect x="180" y="204" fill="#006c99"/><rect x="192" y="204" fill="#006999"/><rect x="204" y="204" fill="#076799"/><rect x="216" y="204" fill="#196499"/><rect x="228" y="204" fill="#286299"/><rect x="240" y="204" fill="#365f99"/><rect x="252" y="204" fill="#435d99"/><rect x="264" y="204" fill="#4f5a99"/><rect x="276" y="204" fill="#5b5799"/><rect x="288" y="204" fill="#665499"/><rect x="300" y="204" fill="#725199"/><rect x="312" y="204" fill="#7d4e99"/><rect x="324" y="204" fill="#884b99"/><rect x="336" y="204" fill="#934899"/><rect x="348" y="204" fill="#994393"/><rect x="360" y="204" fill="#993b8a"/><rect x="372" y="204" fill="#993582"/><rect x="384" y="204" fill="#992f7a"/><rect x="396" y="204" fill="#992a74"/><rect x="408" y="204" fill="#99256e"/><rect x="420" y="204" fill="#992069"/><rect x="432" y="204" fill="#991c64"/><rect x="444" y="204" fill="#99185f"/><rect x="456" y="204" fill="#99145b"/><rect x="468" y="204" fill="#991158"/><rect x="480" y="204" fill="#990d54"/><rect x="492" y="204" fill="#990a51"/><rect x="504" y="204" fill="#99064e"/><rect x="516" y="204" fill="#99024b"/><rect x="528" y="204" fill="#990048"/><rect x="540" y="204" fill="#990046"/><rect x="552" y="204" fill="#990044"/><rect x="564" y="204" fill="#990042"/><rect x="576" y="204" fill="#99003f"/><rect x="588" y="204" fill="#99003e"/><rect x="600" y="204" fill="#99003c"/><rect x="612" y="204" fill="#99003a"/><rect x="624" y="204" fill="#990038"/><rect x="636" y="204" fill="#990037"/><rect x="648" y="204" fill="#990035"/><rect x="660" y="204" fill="#990034"/><rect x="672" y="204" fill="#990032"/><rect x="684" y="204" fill="#990031"/><rect x="696" y="204" fill="#990030"/><rect x="708" y="204" fill="#99002e"/><rect x="720" y="204" fill="#99002d"/><rect x="732" y="204" fill="#99002c"/><rect x="744" y="204" fill="#99002b"/><rect x="756" y="204" fill="#99002a"/><rect x="768" y="204" fill="#990029"/><rect x="780" y="204" fill="#990028"/><rect x="792" y="204" fill="#990027"/><rect x="804" y="204" fill="#990026"/><rect x="816" y="204" fill="#990025"/><rect x="828" y="204" fill="#990024"/><rect x="840" y="204" fill="#990024"/><rect x="852" y="204" fill="#990023"/><rect x="864" y="204" fill="#990022"/><rect x="0" y="216" fill="#008299"/><rect x="12" y="216" fill="#008099"/><rect x="24" y="216" fill="#007e99"/><rect x="36" y="216" fill="#007c99"/><rect x="48" y="216" fill="#007a99"/><rect x="60" y="216" fill="#007899"/><rect x="72" y="216" fill="#007699"/><rect x="84" y="216" fill="#007499"/><rect x="96" y="216" fill="#007299"/><rect x="108" y="216" fill="#007099"/><rect x="120" y="216" fill="#006e99"/><rect x="132" y="216" fill="#006c99"/><rect x="144" y="216" fill="#006a99"/><rect x="156" y="216" fill="#006899"/><rect x="168" y="216" fill="#006699"/><rect x="180" y="216" fill="#006399"/><rect x="192" y="216" fill="#006199"/><rect x="204" y="216" fill="#025f99"/><rect x="216" y="216" fill="#155c99"/><rect x="228" y="216" fill="#245a99"/><rect x="240" y="216" fill="#315799"/><rect x="252" y="216" fill="#3d5599"/><rect x="264" y="216" fill="#495299"/><rect x="276" y="216" fill="#544f99"/><rect x="288" y="216" fill="#5f4c99"/><rect x="300" y="216" fill="#6a4a99"/><rect x="312" y="216" fill="#744799"/><rect x="324" y="216" fill="#7f4499"/><rect x="336" y="216" fill="#894199"/><rect x="348" y="216" fill="#933d99"/><rect x="360" y="216" fill="#993894"/><rect x="372" y="216" fill="#99328b"/><rect x="384" y="216" fill="#992c83"/><rect x="396" y="216" fill="#99277c"/><rect x="408" y="216" fill="#992276"/><rect x="420" y="216" fill="#991d70"/><rect x="432" y="216" fill="#99196b"/><rect x="444" y="216" fill="#991566"/><rect x="456" y="216" fill="#991262"/><rect x="468" y="216" fill="#990e5e"/><rect x="480" y="216" fill="#990a5a"/><rect x="492" y="216" fill="#990757"/><rect x="504" y="216" fill="#990354"/><rect x="516" y="216" fill="#990051"/><rect x="528" y="216" fill="#99004e"/><rect x="540" y="216" fill="#99004b"/><rect x="552" y="216" fill="#990049"/><rect x="564" y="216" fill="#990046"/><rect x="576" y="216" fill="#990044"/><rect x="588" y="216" fill="#990042"/><rect x="600" y="216" fill="#990040"/><rect x="612" y="216" fill="#99003e"/><rect x="624" y="216" fill="#99003d"/><rect x="636" y="216" fill="#99003b"/><rect x="648" y="216" fill="#990039"/><rect x="660" y="216" fill="#990038"/><rect x="672" y="216" fill="#990036"/><rect x="684" y="216" fill="#990035"/><rect x="696" y="216" fill="#990034"/><rect x="708" y="216" fill="#990032"/><rect x="720" y="216" fill="#990031"/><rect x="732" y="216" fill="#990030"/><rect x="744" y="216" fill="#99002f"/><rect x="756" y="216" fill="#99002e"/><rect x="768" y="216" fill="#99002c"/><rect x="780" y="216" fill="#99002b"/><rect x="792" y="216" fill="#99002a"/><rect x="804" y="216" fill="#99002a"/><rect x="816" y="216" fill="#990029"/><rect x="828" y="216" fill="#990028"/><rect x="840" y="216" fill="#990027"/><rect x="852" y="216" fill="#990026"/><rect x="864" y="216" fill="#990025"/><rect x="0" y="228" fill="#007999"/><rect x="12" y="228" fill="#007899"/><rect x="24" y="228" fill="#007699"/><rect x="36" y="228" fill="#007499"/><rect x="48" y="228" fill="#007299"/><rect x="60" y="228" fill="#007099"/><rect x="72" y="228" fill="#006e99"/><rect x="84" y="228" fill="#006d99"/><rect x="96" y="228" fill="#006b99"/><rect x="108" y="228" fill="#006999"/><rect x="120" y="228" fill="#006799"/><rect x="132" y="228" fill="#006499"/><rect x="144" y="228" fill="#006299"/><rect x="156" y="228" fill="#006099"/><rect x="168" y="228" fill="#005e99"/><rect x="180" y="228" fill="#005c99"/><rect x="192" y="228" fill="#005999"/><rect x="204" y="228" fill="#005799"/><rect x="216" y="228" fill="#125599"/><rect x="228" y="228" fill="#205299"/><rect x="240" y="228" fill="#2c5099"/><rect x="252" y="228" fill="#384d99"/><rect x="264" y="228" fill="#434b99"/><rect x="276" y="228" fill="#4e4899"/><rect x="288" y="228" fill="#584599"/><rect x="300" y="228" fill="#634399"/><rect x="312" y="228" fill="#6d4099"/><rect x="324" y="228" fill="#773d99"/><rect x="336" y="228" fill="#803a99"/><rect x="348" y="228" fill="#8a3799"/><rect x="360" y="228" fill="#943499"/><rect x="372" y="228" fill="#992f94"/><rect x="384" y="228" fill="#99298c"/><rect x="396" y="228" fill="#992484"/><rect x="408" y="228" fill="#991f7d"/><rect x="420" y="228" fill="#991b77"/><rect x="432" y="228" fill="#991672"/><rect x="444" y="228" fill="#99126d"/><rect x="456" y="228" fill="#990f68"/><rect x="468" y="228" fill="#990b64"/><rect x="480" y="228" fill="#990760"/><rect x="492" y="228" fill="#99035d"/><rect x="504" y="228" fill="#990059"/><rect x="516" y="228" fill="#990056"/><rect x="528" y="228" fill="#990053"/><rect x="540" y="228" fill="#990050"/><rect x="552" y="228" fill="#99004e"/><rect x="564" y="228" fill="#99004b"/><rect x="576" y="228" fill="#990049"/><rect x="588" y="228" fill="#990047"/><rect x="600" y="228" fill="#990045"/><rect x="612" y="228" fill="#990043"/><rect x="624" y="228" fill="#990041"/><rect x="636" y="228" fill="#99003f"/><rect x="648" y="228" fill="#99003d"/><rect x="660" y="228" fill="#99003c"/><rect x="672" y="228" fill="#99003a"/><rect x="684" y="228" fill="#990039"/><rect x="696" y="228" fill="#990037"/><rect x="708" y="228" fill="#990036"/><rect x="720" y="228" fill="#990035"/><rect x="732" y="228" fill="#990033"/><rect x="744" y="228" fill="#990032"/><rect x="756" y="228" fill="#990031"/><rect x="768" y="228" fill="#990030"/><rect x="780" y="228" fill="#99002f"/><rect x="792" y="228" fill="#99002e"/><rect x="804" y="228" fill="#99002d"/><rect x="816" y="228" fill="#99002c"/><rect x="828" y="228" fill="#99002b"/><rect x="840" y="228" fill="#99002a"/><rect x="852" y="228" fill="#990029"/><rect x="864" y="228" fill="#990028"/><rect x="0" y="240" fill="#007299"/><rect x="12" y="240" fill="#007099"/><rect x="24" y="240" fill="#006f99"/><rect x="36" y="240" fill="#006d99"/><rect x="48" y="240" fill="#006b99"/><rect x="60" y="240" fill="#006999"/><rect x="72" y="240" fill="#006799"/><rect x="84" y="240" fill="#006599"/><rect x="96" y="240" fill="#006499"/><rect x="108" y="240" fill="#006299"/><rect x="120" y="240" fill="#006099"/><rect x="132" y="240" fill="#005e99"/><rect x="144" y="240" fill="#005b99"/><rect x="156" y="240" fill="#005999"/><rect x="168" y="240" fill="#005799"/><rect x="180" y="240" fill="#005599"/><rect x="192" y="240" fill="#005399"/><rect x="204" y="240" fill="#005199"/><rect x="216" y="240" fill="#0f4e99"/><rect x="228" y="240" fill="#1c4c99"/><rect x="240" y="240" fill="#284999"/><rect x="252" y="240" fill="#344799"/><rect x="264" y="240" fill="#3e4499"/><rect x="276" y="240" fill="#494299"/><rect x="288" y="240" fill="#533f99"/><rect x="300" y="240" fill="#5c3d99"/><rect x="312" y="240" fill="#663a99"/><rect x="324" y="240" fill="#6f3799"/><rect x="336" y="240" fill="#793499"/><rect x="348" y="240" fill="#823199"/><rect x="360" y="240" fill="#8b2e99"/><rect x="372" y="240" fill="#942b99"/><rect x="384" y="240" fill="#992694"/><rect x="396" y="240" fill="#99218c"/><rect x="408" y="240" fill="#991c85"/><rect x="420" y="240" fill="#99187f"/><rect x="432" y="240" fill="#991379"/><rect x="444" y="240" fill="#990f74"/><rect x="456" y="240" fill="#990b6f"/><rect x="468" y="240" fill="#99076a"/><rect x="480" y="240" fill="#990366"/><rect x="492" y="240" fill="#990062"/><rect x="504" y="240" fill="#99005f"/><rect x="516" y="240" fill="#99005b"/><rect x="528" y="240" fill="#990058"/><rect x="540" y="240" fill="#990055"/><rect x="552" y="240" fill="#990053"/><rect x="564" y="240" fill="#990050"/><rect x="576" y="240" fill="#99004e"/><rect x="588" y="240" fill="#99004b"/><rect x="600" y="240" fill="#990049"/><rect x="612" y="240" fill="#990047"/><rect x="624" y="240" fill="#990045"/><rect x="636" y="240" fill="#990043"/><rect x="648" y="240" fill="#990042"/><rect x="660" y="240" fill="#990040"/><rect x="672" y="240" fill="#99003e"/><rect x="684" y="240" fill="#99003d"/><rect x="696" y="240" fill="#99003b"/><rect x="708" y="240" fill="#99003a"/><rect x="720" y="240" fill="#990038"/><rect x="732" y="240" fill="#990037"/><rect x="744" y="240" fill="#990036"/><rect x="756" y="240" fill="#990035"/><rect x="768" y="240" fill="#990033"/><rect x="780" y="240" fill="#990032"/><rect x="792" y="240" fill="#990031"/><rect x="804" y="240" fill="#990030"/><rect x="816" y="240" fill="#99002f"/><rect x="828" y="240" fill="#99002e"/><rect x="840" y="240" fill="#99002d"/><rect x="852" y="240" fill="#99002c"/><rect x="864" y="240" fill="#99002b"/><rect x="0" y="252" fill="#006c99"/><rect x="12" y="252" fill="#006a99"/><rect x="24" y="252" fill="#006899"/><rect x="36" y="252" fill="#006699"/><rect x="48" y="252" fill="#006599"/><rect x="60" y="252" fill="#006399"/><rect x="72" y="252" fill="#006199"/><rect x="84" y="252" fill="#005f99"/><rect x="96" y="252" fill="#005d99"/><rect x="108" y="252" fill="#005b99"/><rect x="120" y="252" fill="#005999"/><rect x="132" y="252" fill="#005799"/><rect x="144" y="252" fill="#005599"/><rect x="156" y="252" fill="#005399"/><rect x="168" y="252" fill="#005199"/><rect x="180" y="252" fill="#004f99"/><rect x="192" y="252" fill="#004d99"/><rect x="204" y="252" fill="#004a99"/><rect x="216" y="252" fill="#0b4899"/><rect x="228" y="252" fill="#194699"/><rect x="240" y="252" fill="#254499"/><rect x="252" y="252" fill="#304199"/><rect x="264" y="252" fill="#3a3f99"/><rect x="276" y="252" fill="#443c99"/><rect x="288" y="252" fill="#4d3a99"/><rect x="300" y="252" fill="#573799"/><rect x="312" y="252" fill="#603499"/><rect x="324" y="252" fill="#693199"/><rect x="336" y="252" fill="#722e99"/><rect x="348" y="252" fill="#7a2c99"/><rect x="360" y="252" fill="#832899"/><rect x="372" y="252" fill="#8b2599"/><rect x="384" y="252" fill="#942299"/><rect x="396" y="252" fill="#991e95"/><rect x="408" y="252" fill="#99198d"/><rect x="420" y="252" fill="#991486"/><rect x="432" y="252" fill="#991080"/><rect x="444" y="252" fill="#990c7a"/><rect x="456" y="252" fill="#990875"/><rect x="468" y="252" fill="#990370"/><rect x="480" y="252" fill="#99006c"/><rect x="492" y="252" fill="#990068"/><rect x="504" y="252" fill="#990064"/><rect x="516" y="252" fill="#990061"/><rect x="528" y="252" fill="#99005e"/><rect x="540" y="252" fill="#99005a"/><rect x="552" y="252" fill="#990058"/><rect x="564" y="252" fill="#990055"/><rect x="576" y="252" fill="#990052"/><rect x="588" y="252" fill="#990050"/><rect x="600" y="252" fill="#99004e"/><rect x="612" y="252" fill="#99004b"/><rect x="624" y="252" fill="#990049"/><rect x="636" y="252" fill="#990047"/><rect x="648" y="252" fill="#990046"/><rect x="660" y="252" fill="#990044"/><rect x="672" y="252" fill="#990042"/><rect x="684" y="252" fill="#990040"/><rect x="696" y="252" fill="#99003f"/><rect x="708" y="252" fill="#99003d"/><rect x="720" y="252" fill="#99003c"/><rect x="732" y="252" fill="#99003b"/><rect x="744" y="252" fill="#990039"/><rect x="756" y="252" fill="#990038"/><rect x="768" y="252" fill="#990037"/><rect x="780" y="252" fill="#990036"/><rect x="792" y="252" fill="#990034"/><rect x="804" y="252" fill="#990033"/><rect x="816" y="252" fill="#990032"/><rect x="828" y="252" fill="#990031"/><rect x="840" y="252" fill="#990030"/><rect x="852" y="252" fill="#99002f"/><rect x="864" y="252" fill="#99002e"/><rect x="0" y="264" fill="#006599"/><rect x="12" y="264" fill="#006499"/><rect x="24" y="264" fill="#006299"/><rect x="36" y="264" fill="#006099"/><rect x="48" y="264" fill="#005f99"/><rect x="60" y="264" fill="#005d99"/><rect x="72" y="264" fill="#005b99"/><rect x="84" y="264" fill="#005999"/><rect x="96" y="264" fill="#005799"/><rect x="108" y="264" fill="#005599"/><rect x="120" y="264" fill="#005399"/><rect x="132" y="264" fill="#005199"/><rect x="144" y="264" fill="#004f99"/><rect x="156" y="264" fill="#004d99"/><rect x="168" y="264" fill="#004b99"/><rect x="180" y="264" fill="#004999"/><rect x="192" y="264" fill="#004799"/><rect x="204" y="264" fill="#004599"/><rect x="216" y="264" fill="#084399"/><rect x="228" y="264" fill="#164099"/><rect x="240" y="264" fill="#223e99"/><rect x="252" y="264" fill="#2c3c99"/><rect x="264" y="264" fill="#363999"/><rect x="276" y="264" fill="#3f3799"/><rect x="288" y="264" fill="#493499"/><rect x="300" y="264" fill="#523299"/><rect x="312" y="264" fill="#5a2f99"/><rect x="324" y="264" fill="#632c99"/><rect x="336" y="264" fill="#6b2999"/><rect x="348" y="264" fill="#742799"/><rect x="360" y="264" fill="#7c2499"/><rect x="372" y="264" fill="#842099"/><rect x="384" y="264" fill="#8c1d99"/><rect x="396" y="264" fill="#941a99"/><rect x="408" y="264" fill="#991695"/><rect x="420" y="264" fill="#99118e"/><rect x="432" y="264" fill="#990d87"/><rect x="444" y="264" fill="#990881"/><rect x="456" y="264" fill="#99037c"/><rect x="468" y="264" fill="#990077"/><rect x="480" y="264" fill="#990072"/><rect x="492" y="264" fill="#99006e"/><rect x="504" y="264" fill="#99006a"/><rect x="516" y="264" fill="#990066"/><rect x="528" y="264" fill="#990063"/><rect x="540" y="264" fill="#990060"/><rect x="552" y="264" fill="#99005c"/><rect x="564" y="264" fill="#99005a"/><rect x="576" y="264" fill="#990057"/><rect x="588" y="264" fill="#990054"/><rect x="600" y="264" fill="#990052"/><rect x="612" y="264" fill="#990050"/><rect x="624" y="264" fill="#99004e"/><rect x="636" y="264" fill="#99004c"/><rect x="648" y="264" fill="#99004a"/><rect x="660" y="264" fill="#990048"/><rect x="672" y="264" fill="#990046"/><rect x="684" y="264" fill="#990044"/><rect x="696" y="264" fill="#990043"/><rect x="708" y="264" fill="#990041"/><rect x="720" y="264" fill="#99003f"/><rect x="732" y="264" fill="#99003e"/><rect x="744" y="264" fill="#99003d"/><rect x="756" y="264" fill="#99003b"/><rect x="768" y="264" fill="#99003a"/><rect x="780" y="264" fill="#990039"/><rect x="792" y="264" fill="#990038"/><rect x="804" y="264" fill="#990036"/><rect x="816" y="264" fill="#990035"/><rect x="828" y="264" fill="#990034"/><rect x="840" y="264" fill="#990033"/><rect x="852" y="264" fill="#990032"/><rect x="864" y="264" fill="#990031"/><rect x="0" y="276" fill="#006099"/><rect x="12" y="276" fill="#005e99"/><rect x="24" y="276" fill="#005c99"/><rect x="36" y="276" fill="#005b99"/><rect x="48" y="276" fill="#005999"/><rect x="60" y="276" fill="#005799"/><rect x="72" y="276" fill="#005699"/><rect x="84" y="276" fill="#005499"/><rect x="96" y="276" fill="#005299"/><rect x="108" y="276" fill="#005099"/><rect x="120" y="276" fill="#004e99"/><rect x="132" y="276" fill="#004c99"/><rect x="144" y="276" fill="#004a99"/><rect x="156" y="276" fill="#004899"/><rect x="168" y="276" fill="#004699"/><rect x="180" y="276" fill="#004499"/><rect x="192" y="276" fill="#004299"/><rect x="204" y="276" fill="#004099"/><rect x="216" y="276" fill="#053e99"/><rect x="228" y="276" fill="#133b99"/><rect x="240" y="276" fill="#1f3999"/><rect x="252" y="276" fill="#293799"/><rect x="264" y="276" fill="#323499"/><rect x="276" y="276" fill="#3b3299"/><rect x="288" y="276" fill="#443099"/><rect x="300" y="276" fill="#4d2d99"/><rect x="312" y="276" fill="#552a99"/><rect x="324" y="276" fill="#5d2899"/><rect x="336" y="276" fill="#662599"/><rect x="348" y="276" fill="#6e2299"/><rect x="360" y="276" fill="#751f99"/><rect x="372" y="276" fill="#7d1c99"/><rect x="384" y="276" fill="#851999"/><rect x="396" y="276" fill="#8d1599"/><rect x="408" y="276" fill="#941299"/><rect x="420" y="276" fill="#990d95"/><rect x="432" y="276" fill="#99098e"/><rect x="444" y="276" fill="#990488"/><rect x="456" y="276" fill="#990082"/><rect x="468" y="276" fill="#99007d"/><rect x="480" y="276" fill="#990078"/><rect x="492" y="276" fill="#990074"/><rect x="504" y="276" fill="#99006f"/><rect x="516" y="276" fill="#99006c"/><rect x="528" y="276" fill="#990068"/><rect x="540" y="276" fill="#990065"/><rect x="552" y="276" fill="#990061"/><rect x="564" y="276" fill="#99005e"/><rect x="576" y="276" fill="#99005c"/><rect x="588" y="276" fill="#990059"/><rect x="600" y="276" fill="#990056"/><rect x="612" y="276" fill="#990054"/><rect x="624" y="276" fill="#990052"/><rect x="636" y="276" fill="#990050"/><rect x="648" y="276" fill="#99004e"/><rect x="660" y="276" fill="#99004c"/><rect x="672" y="276" fill="#99004a"/><rect x="684" y="276" fill="#990048"/><rect x="696" y="276" fill="#990046"/><rect x="708" y="276" fill="#990045"/><rect x="720" y="276" fill="#990043"/><rect x="732" y="276" fill="#990042"/><rect x="744" y="276" fill="#990040"/><rect x="756" y="276" fill="#99003f"/><rect x="768" y="276" fill="#99003d"/><rect x="780" y="276" fill="#99003c"/><rect x="792" y="276" fill="#99003b"/><rect x="804" y="276" fill="#99003a"/><rect x="816" y="276" fill="#990038"/><rect x="828" y="276" fill="#990037"/><rect x="840" y="276" fill="#990036"/><rect x="852" y="276" fill="#990035"/><rect x="864" y="276" fill="#990034"/><rect x="0" y="288" fill="#005b99"/><rect x="12" y="288" fill="#005999"/><rect x="24" y="288" fill="#005799"/><rect x="36" y="288" fill="#005699"/><rect x="48" y="288" fill="#005499"/><rect x="60" y="288" fill="#005299"/><rect x="72" y="288" fill="#005099"/><rect x="84" y="288" fill="#004f99"/><rect x="96" y="288" fill="#004d99"/><rect x="108" y="288" fill="#004b99"/><rect x="120" y="288" fill="#004999"/><rect x="132" y="288" fill="#004799"/><rect x="144" y="288" fill="#004599"/><rect x="156" y="288" fill="#004399"/><rect x="168" y="288" fill="#004199"/><rect x="180" y="288" fill="#003f99"/><rect x="192" y="288" fill="#003d99"/><rect x="204" y="288" fill="#003b99"/><rect x="216" y="288" fill="#023999"/><rect x="228" y="288" fill="#113799"/><rect x="240" y="288" fill="#1c3599"/><rect x="252" y="288" fill="#263299"/><rect x="264" y="288" fill="#2f3099"/><rect x="276" y="288" fill="#382e99"/><rect x="288" y="288" fill="#402b99"/><rect x="300" y="288" fill="#492999"/><rect x="312" y="288" fill="#512699"/><rect x="324" y="288" fill="#592399"/><rect x="336" y="288" fill="#602199"/><rect x="348" y="288" fill="#681e99"/><rect x="360" y="288" fill="#701b99"/><rect x="372" y="288" fill="#771899"/><rect x="384" y="288" fill="#7f1499"/><rect x="396" y="288" fill="#861199"/><rect x="408" y="288" fill="#8d0d99"/><rect x="420" y="288" fill="#950999"/><rect x="432" y="288" fill="#990495"/><rect x="444" y="288" fill="#99008f"/><rect x="456" y="288" fill="#990089"/><rect x="468" y="288" fill="#990083"/><rect x="480" y="288" fill="#99007e"/><rect x="492" y="288" fill="#990079"/><rect x="504" y="288" fill="#990075"/><rect x="516" y="288" fill="#990071"/><rect x="528" y="288" fill="#99006d"/><rect x="540" y="288" fill="#99006a"/><rect x="552" y="288" fill="#990066"/><rect x="564" y="288" fill="#990063"/><rect x="576" y="288" fill="#990060"/><rect x="588" y="288" fill="#99005d"/><rect x="600" y="288" fill="#99005b"/><rect x="612" y="288" fill="#990058"/><rect x="624" y="288" fill="#990056"/><rect x="636" y="288" fill="#990054"/><rect x="648" y="288" fill="#990051"/><rect x="660" y="288" fill="#99004f"/><rect x="672" y="288" fill="#99004e"/><rect x="684" y="288" fill="#99004c"/><rect x="696" y="288" fill="#99004a"/><rect x="708" y="288" fill="#990048"/><rect x="720" y="288" fill="#990047"/><rect x="732" y="288" fill="#990045"/><rect x="744" y="288" fill="#990043"/><rect x="756" y="288" fill="#990042"/><rect x="768" y="288" fill="#990041"/><rect x="780" y="288" fill="#99003f"/><rect x="792" y="288" fill="#99003e"/><rect x="804" y="288" fill="#99003d"/><rect x="816" y="288" fill="#99003b"/><rect x="828" y="288" fill="#99003a"/><rect x="840" y="288" fill="#990039"/><rect x="852" y="288" fill="#990038"/><rect x="864" y="288" fill="#990037"/><rect x="0" y="300" fill="#005699"/><rect x="12" y="300" fill="#005499"/><rect x="24" y="300" fill="#005399"/><rect x="36" y="300" fill="#005199"/><rect x="48" y="300" fill="#004f99"/><rect x="60" y="300" fill="#004e99"/><rect x="72" y="300" fill="#004c99"/><rect x="84" y="300" fill="#004a99"/><rect x="96" y="300" fill="#004899"/><rect x="108" y="300" fill="#004699"/><rect x="120" y="300" fill="#004599"/><rect x="132" y="300" fill="#004399"/><rect x="144" y="300" fill="#004199"/><rect x="156" y="300" fill="#003f99"/><rect x="168" y="300" fill="#003d99"/><rect x="180" y="300" fill="#003b99"/><rect x="192" y="300" fill="#003999"/><rect x="204" y="300" fill="#003799"/><rect x="216" y="300" fill="#003599"/><rect x="228" y="300" fill="#0e3399"/><rect x="240" y="300" fill="#193099"/><rect x="252" y="300" fill="#232e99"/><rect x="264" y="300" fill="#2c2c99"/><rect x="276" y="300" fill="#342999"/><rect x="288" y="300" fill="#3d2799"/><rect x="300" y="300" fill="#452499"/><rect x="312" y="300" fill="#4c2299"/><rect x="324" y="300" fill="#541f99"/><rect x="336" y="300" fill="#5c1c99"/><rect x="348" y="300" fill="#631a99"/><rect x="360" y="300" fill="#6a1799"/><rect x="372" y="300" fill="#711499"/><rect x="384" y="300" fill="#791099"/><rect x="396" y="300" fill="#800d99"/><rect x="408" y="300" fill="#870999"/><rect x="420" y="300" fill="#8e0499"/><rect x="432" y="300" fill="#950099"/><rect x="444" y="300" fill="#990095"/><rect x="456" y="300" fill="#99008f"/><rect x="468" y="300" fill="#990089"/><rect x="480" y="300" fill="#990084"/><rect x="492" y="300" fill="#99007f"/><rect x="504" y="300" fill="#99007a"/><rect x="516" y="300" fill="#990076"/><rect x="528" y="300" fill="#990072"/><rect x="540" y="300" fill="#99006f"/><rect x="552" y="300" fill="#99006b"/><rect x="564" y="300" fill="#990068"/><rect x="576" y="300" fill="#990065"/><rect x="588" y="300" fill="#990062"/><rect x="600" y="300" fill="#99005f"/><rect x="612" y="300" fill="#99005c"/><rect x="624" y="300" fill="#99005a"/><rect x="636" y="300" fill="#990058"/><rect x="648" y="300" fill="#990055"/><rect x="660" y="300" fill="#990053"/><rect x="672" y="300" fill="#990051"/><rect x="684" y="300" fill="#99004f"/><rect x="696" y="300" fill="#99004d"/><rect x="708" y="300" fill="#99004c"/><rect x="720" y="300" fill="#99004a"/><rect x="732" y="300" fill="#990048"/><rect x="744" y="300" fill="#990047"/><rect x="756" y="300" fill="#990045"/><rect x="768" y="300" fill="#990044"/><rect x="780" y="300" fill="#990042"/><rect x="792" y="300" fill="#990041"/><rect x="804" y="300" fill="#990040"/><rect x="816" y="300" fill="#99003e"/><rect x="828" y="300" fill="#99003d"/><rect x="840" y="300" fill="#99003c"/><rect x="852" y="300" fill="#99003b"/><rect x="864" y="300" fill="#99003a"/><rect x="0" y="312" fill="#005199"/><rect x="12" y="312" fill="#005099"/><rect x="24" y="312" fill="#004e99"/><rect x="36" y="312" fill="#004c99"/><rect x="48" y="312" fill="#004b99"/><rect x="60" y="312" fill="#004999"/><rect x="72" y="312" fill="#004799"/><rect x="84" y="312" fill="#004699"/><rect x="96" y="312" fill="#004499"/><rect x="108" y="312" fill="#004299"/><rect x="120" y="312" fill="#004099"/><rect x="132" y="312" fill="#003f99"/><rect x="144" y="312" fill="#003d99"/><rect x="156" y="312" fill="#003b99"/><rect x="168" y="312" fill="#003999"/><rect x="180" y="312" fill="#003799"/><rect x="192" y="312" fill="#003599"/><rect x="204" y="312" fill="#003399"/><rect x="216" y="312" fill="#003199"/><rect x="228" y="312" fill="#0c2f99"/><rect x="240" y="312" fill="#172c99"/><rect x="252" y="312" fill="#202a99"/><rect x="264" y="312" fill="#292899"/><rect x="276" y="312" fill="#312699"/><rect x="288" y="312" fill="#392399"/><rect x="300" y="312" fill="#412199"/><rect x="312" y="312" fill="#491e99"/><rect x="324" y="312" fill="#501b99"/><rect x="336" y="312" fill="#571999"/><rect x="348" y="312" fill="#5e1699"/><rect x="360" y="312" fill="#651399"/><rect x="372" y="312" fill="#6c1099"/><rect x="384" y="312" fill="#730c99"/><rect x="396" y="312" fill="#7a0899"/><rect x="408" y="312" fill="#810499"/><rect x="420" y="312" fill="#870099"/><rect x="432" y="312" fill="#8e0099"/><rect x="444" y="312" fill="#950099"/><rect x="456" y="312" fill="#990096"/><rect x="468" y="312" fill="#990090"/><rect x="480" y="312" fill="#99008a"/><rect x="492" y="312" fill="#990085"/><rect x="504" y="312" fill="#990080"/><rect x="516" y="312" fill="#99007c"/><rect x="528" y="312" fill="#990077"/><rect x="540" y="312" fill="#990074"/><rect x="552" y="312" fill="#990070"/><rect x="564" y="312" fill="#99006c"/><rect x="576" y="312" fill="#990069"/><rect x="588" y="312" fill="#990066"/><rect x="600" y="312" fill="#990063"/><rect x="612" y="312" fill="#990061"/><rect x="624" y="312" fill="#99005e"/><rect x="636" y="312" fill="#99005c"/><rect x="648" y="312" fill="#990059"/><rect x="660" y="312" fill="#990057"/><rect x="672" y="312" fill="#990055"/><rect x="684" y="312" fill="#990053"/><rect x="696" y="312" fill="#990051"/><rect x="708" y="312" fill="#99004f"/><rect x="720" y="312" fill="#99004d"/><rect x="732" y="312" fill="#99004c"/><rect x="744" y="312" fill="#99004a"/><rect x="756" y="312" fill="#990049"/><rect x="768" y="312" fill="#990047"/><rect x="780" y="312" fill="#990046"/><rect x="792" y="312" fill="#990044"/><rect x="804" y="312" fill="#990043"/><rect x="816" y="312" fill="#990042"/><rect x="828" y="312" fill="#990040"/><rect x="840" y="312" fill="#99003f"/><rect x="852" y="312" fill="#99003e"/><rect x="864" y="312" fill="#99003d"/><rect x="0" y="324" fill="#004d99"/><rect x="12" y="324" fill="#004b99"/><rect x="24" y="324" fill="#004a99"/><rect x="36" y="324" fill="#004899"/><rect x="48" y="324" fill="#004799"/><rect x="60" y="324" fill="#004599"/><rect x="72" y="324" fill="#004399"/><rect x="84" y="324" fill="#004299"/><rect x="96" y="324" fill="#004099"/><rect x="108" y="324" fill="#003e99"/><rect x="120" y="324" fill="#003c99"/><rect x="132" y="324" fill="#003b99"/><rect x="144" y="324" fill="#003999"/><rect x="156" y="324" fill="#003799"/><rect x="168" y="324" fill="#003599"/><rect x="180" y="324" fill="#003399"/><rect x="192" y="324" fill="#003199"/><rect x="204" y="324" fill="#002f99"/><rect x="216" y="324" fill="#002d99"/><rect x="228" y="324" fill="#092b99"/><rect x="240" y="324" fill="#142999"/><rect x="252" y="324" fill="#1e2699"/><rect x="264" y="324" fill="#262499"/><rect x="276" y="324" fill="#2e2299"/><rect x="288" y="324" fill="#361f99"/><rect x="300" y="324" fill="#3e1d99"/><rect x="312" y="324" fill="#451a99"/><rect x="324" y="324" fill="#4c1899"/><rect x="336" y="324" fill="#531599"/><rect x="348" y="324" fill="#5a1299"/><rect x="360" y="324" fill="#610f99"/><rect x="372" y="324" fill="#680c99"/><rect x="384" y="324" fill="#6e0899"/><rect x="396" y="324" fill="#750499"/><rect x="408" y="324" fill="#7b0099"/><rect x="420" y="324" fill="#820099"/><rect x="432" y="324" fill="#880099"/><rect x="444" y="324" fill="#8f0099"/><rect x="456" y="324" fill="#950099"/><rect x="468" y="324" fill="#990096"/><rect x="480" y="324" fill="#990090"/><rect x="492" y="324" fill="#99008b"/><rect x="504" y="324" fill="#990086"/><rect x="516" y="324" fill="#990081"/><rect x="528" y="324" fill="#99007d"/><rect x="540" y="324" fill="#990078"/><rect x="552" y="324" fill="#990075"/><rect x="564" y="324" fill="#990071"/><rect x="576" y="324" fill="#99006e"/><rect x="588" y="324" fill="#99006b"/><rect x="600" y="324" fill="#990068"/><rect x="612" y="324" fill="#990065"/><rect x="624" y="324" fill="#990062"/><rect x="636" y="324" fill="#990060"/><rect x="648" y="324" fill="#99005d"/><rect x="660" y="324" fill="#99005b"/><rect x="672" y="324" fill="#990059"/><rect x="684" y="324" fill="#990057"/><rect x="696" y="324" fill="#990055"/><rect x="708" y="324" fill="#990053"/><rect x="720" y="324" fill="#990051"/><rect x="732" y="324" fill="#99004f"/><rect x="744" y="324" fill="#99004d"/><rect x="756" y="324" fill="#99004c"/><rect x="768" y="324" fill="#99004a"/><rect x="780" y="324" fill="#990049"/><rect x="792" y="324" fill="#990047"/><rect x="804" y="324" fill="#990046"/><rect x="816" y="324" fill="#990044"/><rect x="828" y="324" fill="#990043"/><rect x="840" y="324" fill="#990042"/><rect x="852" y="324" fill="#990041"/><rect x="864" y="324" fill="#990040"/><rect x="0" y="336" fill="#004999"/><rect x="12" y="336" fill="#004899"/><rect x="24" y="336" fill="#004699"/><rect x="36" y="336" fill="#004499"/><rect x="48" y="336" fill="#004399"/><rect x="60" y="336" fill="#004199"/><rect x="72" y="336" fill="#003f99"/><rect x="84" y="336" fill="#003e99"/><rect x="96" y="336" fill="#003c99"/><rect x="108" y="336" fill="#003a99"/><rect x="120" y="336" fill="#003999"/><rect x="132" y="336" fill="#003799"/><rect x="144" y="336" fill="#003599"/><rect x="156" y="336" fill="#003399"/><rect x="168" y="336" fill="#003199"/><rect x="180" y="336" fill="#002f99"/><rect x="192" y="336" fill="#002d99"/><rect x="204" y="336" fill="#002b99"/><rect x="216" y="336" fill="#002999"/><rect x="228" y="336" fill="#072799"/><rect x="240" y="336" fill="#122599"/><rect x="252" y="336" fill="#1b2399"/><rect x="264" y="336" fill="#242199"/><rect x="276" y="336" fill="#2c1e99"/><rect x="288" y="336" fill="#331c99"/><rect x="300" y="336" fill="#3a1a99"/><rect x="312" y="336" fill="#421799"/><rect x="324" y="336" fill="#491499"/><rect x="336" y="336" fill="#4f1299"/><rect x="348" y="336" fill="#560f99"/><rect x="360" y="336" fill="#5d0b99"/><rect x="372" y="336" fill="#630899"/><rect x="384" y="336" fill="#6a0499"/><rect x="396" y="336" fill="#700099"/><rect x="408" y="336" fill="#760099"/><rect x="420" y="336" fill="#7c0099"/><rect x="432" y="336" fill="#830099"/><rect x="444" y="336" fill="#890099"/><rect x="456" y="336" fill="#8f0099"/><rect x="468" y="336" fill="#950099"/><rect x="480" y="336" fill="#990096"/><rect x="492" y="336" fill="#990090"/><rect x="504" y="336" fill="#99008b"/><rect x="516" y="336" fill="#990086"/><rect x="528" y="336" fill="#990082"/><rect x="540" y="336" fill="#99007d"/><rect x="552" y="336" fill="#99007a"/><rect x="564" y="336" fill="#990076"/><rect x="576" y="336" fill="#990072"/><rect x="588" y="336" fill="#99006f"/><rect x="600" y="336" fill="#99006c"/><rect x="612" y="336" fill="#990069"/><rect x="624" y="336" fill="#990066"/><rect x="636" y="336" fill="#990064"/><rect x="648" y="336" fill="#990061"/><rect x="660" y="336" fill="#99005f"/><rect x="672" y="336" fill="#99005c"/><rect x="684" y="336" fill="#99005a"/><rect x="696" y="336" fill="#990058"/><rect x="708" y="336" fill="#990056"/><rect x="720" y="336" fill="#990054"/><rect x="732" y="336" fill="#990052"/><rect x="744" y="336" fill="#990051"/><rect x="756" y="336" fill="#99004f"/><rect x="768" y="336" fill="#99004d"/><rect x="780" y="336" fill="#99004c"/><rect x="792" y="336" fill="#99004a"/><rect x="804" y="336" fill="#990049"/><rect x="816" y="336" fill="#990047"/><rect x="828" y="336" fill="#990046"/><rect x="840" y="336" fill="#990045"/><rect x="852" y="336" fill="#990044"/><rect x="864" y="336" fill="#990042"/><rect x="0" y="348" fill="#004599"/><rect x="12" y="348" fill="#004499"/><rect x="24" y="348" fill="#004299"/><rect x="36" y="348" fill="#004199"/><rect x="48" y="348" fill="#003f99"/><rect x="60" y="348" fill="#003e99"/><rect x="72" y="348" fill="#003c99"/><rect x="84" y="348" fill="#003a99"/><rect x="96" y="348" fill="#003999"/><rect x="108" y="348" fill="#003799"/><rect x="120" y="348" fill="#003599"/><rect x="132" y="348" fill="#003399"/><rect x="144" y="348" fill="#003299"/><rect x="156" y="348" fill="#003099"/><rect x="168" y="348" fill="#002e99"/><rect x="180" y="348" fill="#002c99"/><rect x="192" y="348" fill="#002a99"/><rect x="204" y="348" fill="#002899"/><rect x="216" y="348" fill="#002699"/><rect x="228" y="348" fill="#052499"/><rect x="240" y="348" fill="#102299"/><rect x="252" y="348" fill="#192099"/><rect x="264" y="348" fill="#211d99"/><rect x="276" y="348" fill="#291b99"/><rect x="288" y="348" fill="#301999"/><rect x="300" y="348" fill="#381699"/><rect x="312" y="348" fill="#3e1499"/><rect x="324" y="348" fill="#451199"/><rect x="336" y="348" fill="#4c0e99"/><rect x="348" y="348" fill="#520b99"/><rect x="360" y="348" fill="#590899"/><rect x="372" y="348" fill="#5f0499"/><rect x="384" y="348" fill="#650099"/><rect x="396" y="348" fill="#6b0099"/><rect x="408" y="348" fill="#710099"/><rect x="420" y="348" fill="#770099"/><rect x="432" y="348" fill="#7d0099"/><rect x="444" y="348" fill="#830099"/><rect x="456" y="348" fill="#890099"/><rect x="468" y="348" fill="#8f0099"/><rect x="480" y="348" fill="#950099"/><rect x="492" y="348" fill="#990096"/><rect x="504" y="348" fill="#990091"/><rect x="516" y="348" fill="#99008c"/><rect x="528" y="348" fill="#990087"/><rect x="540" y="348" fill="#990082"/><rect x="552" y="348" fill="#99007e"/><rect x="564" y="348" fill="#99007b"/><rect x="576" y="348" fill="#990077"/><rect x="588" y="348" fill="#990073"/><rect x="600" y="348" fill="#990070"/><rect x="612" y="348" fill="#99006d"/><rect x="624" y="348" fill="#99006a"/><rect x="636" y="348" fill="#990068"/><rect x="648" y="348" fill="#990065"/><rect x="660" y="348" fill="#990063"/><rect x="672" y="348" fill="#990060"/><rect x="684" y="348" fill="#99005e"/><rect x="696" y="348" fill="#99005c"/><rect x="708" y="348" fill="#99005a"/><rect x="720" y="348" fill="#990058"/><rect x="732" y="348" fill="#990056"/><rect x="744" y="348" fill="#990054"/><rect x="756" y="348" fill="#990052"/><rect x="768" y="348" fill="#990051"/><rect x="780" y="348" fill="#99004f"/><rect x="792" y="348" fill="#99004d"/><rect x="804" y="348" fill="#99004c"/><rect x="816" y="348" fill="#99004a"/><rect x="828" y="348" fill="#990049"/><rect x="840" y="348" fill="#990048"/><rect x="852" y="348" fill="#990046"/><rect x="864" y="348" fill="#990045"/><rect x="0" y="360" fill="#004299"/><rect x="12" y="360" fill="#004099"/><rect x="24" y="360" fill="#003f99"/><rect x="36" y="360" fill="#003d99"/><rect x="48" y="360" fill="#003c99"/><rect x="60" y="360" fill="#003a99"/><rect x="72" y="360" fill="#003899"/><rect x="84" y="360" fill="#003799"/><rect x="96" y="360" fill="#003599"/><rect x="108" y="360" fill="#003399"/><rect x="120" y="360" fill="#003299"/><rect x="132" y="360" fill="#003099"/><rect x="144" y="360" fill="#002e99"/><rect x="156" y="360" fill="#002c99"/><rect x="168" y="360" fill="#002b99"/><rect x="180" y="360" fill="#002999"/><rect x="192" y="360" fill="#002799"/><rect x="204" y="360" fill="#002599"/><rect x="216" y="360" fill="#002399"/><rect x="228" y="360" fill="#022199"/><rect x="240" y="360" fill="#0e1f99"/><rect x="252" y="360" fill="#171c99"/><rect x="264" y="360" fill="#1f1a99"/><rect x="276" y="360" fill="#271899"/><rect x="288" y="360" fill="#2e1699"/><rect x="300" y="360" fill="#351399"/><rect x="312" y="360" fill="#3c1099"/><rect x="324" y="360" fill="#420e99"/><rect x="336" y="360" fill="#490b99"/><rect x="348" y="360" fill="#4f0799"/><rect x="360" y="360" fill="#550499"/><rect x="372" y="360" fill="#5b0099"/><rect x="384" y="360" fill="#610099"/><rect x="396" y="360" fill="#670099"/><rect x="408" y="360" fill="#6d0099"/><rect x="420" y="360" fill="#730099"/><rect x="432" y="360" fill="#790099"/><rect x="444" y="360" fill="#7e0099"/><rect x="456" y="360" fill="#840099"/><rect x="468" y="360" fill="#8a0099"/><rect x="480" y="360" fill="#900099"/><rect x="492" y="360" fill="#950099"/><rect x="504" y="360" fill="#990096"/><rect x="516" y="360" fill="#990091"/><rect x="528" y="360" fill="#99008c"/><rect x="540" y="360" fill="#990087"/><rect x="552" y="360" fill="#990083"/><rect x="564" y="360" fill="#99007f"/><rect x="576" y="360" fill="#99007b"/><rect x="588" y="360" fill="#990078"/><rect x="600" y="360" fill="#990075"/><rect x="612" y="360" fill="#990071"/><rect x="624" y="360" fill="#99006e"/><rect x="636" y="360" fill="#99006c"/><rect x="648" y="360" fill="#990069"/><rect x="660" y="360" fill="#990066"/><rect x="672" y="360" fill="#990064"/><rect x="684" y="360" fill="#990061"/><rect x="696" y="360" fill="#99005f"/><rect x="708" y="360" fill="#99005d"/><rect x="720" y="360" fill="#99005b"/><rect x="732" y="360" fill="#990059"/><rect x="744" y="360" fill="#990057"/><rect x="756" y="360" fill="#990055"/><rect x="768" y="360" fill="#990054"/><rect x="780" y="360" fill="#990052"/><rect x="792" y="360" fill="#990050"/><rect x="804" y="360" fill="#99004f"/><rect x="816" y="360" fill="#99004d"/><rect x="828" y="360" fill="#99004c"/><rect x="840" y="360" fill="#99004a"/><rect x="852" y="360" fill="#990049"/><rect x="864" y="360" fill="#990048"/><rect x="0" y="372" fill="#003e99"/><rect x="12" y="372" fill="#003d99"/><rect x="24" y="372" fill="#003b99"/><rect x="36" y="372" fill="#003a99"/><rect x="48" y="372" fill="#003899"/><rect x="60" y="372" fill="#003799"/><rect x="72" y="372" fill="#003599"/><rect x="84" y="372" fill="#003499"/><rect x="96" y="372" fill="#003299"/><rect x="108" y="372" fill="#003099"/><rect x="120" y="372" fill="#002f99"/><rect x="132" y="372" fill="#002d99"/><rect x="144" y="372" fill="#002b99"/><rect x="156" y="372" fill="#002999"/><rect x="168" y="372" fill="#002899"/><rect x="180" y="372" fill="#002699"/><rect x="192" y="372" fill="#002499"/><rect x="204" y="372" fill="#002299"/><rect x="216" y="372" fill="#002099"/><rect x="228" y="372" fill="#001e99"/><rect x="240" y="372" fill="#0c1c99"/><rect x="252" y="372" fill="#151999"/><rect x="264" y="372" fill="#1d1799"/><rect x="276" y="372" fill="#241599"/><rect x="288" y="372" fill="#2b1299"/><rect x="300" y="372" fill="#321099"/><rect x="312" y="372" fill="#390d99"/><rect x="324" y="372" fill="#3f0a99"/><rect x="336" y="372" fill="#450799"/><rect x="348" y="372" fill="#4c0499"/><rect x="360" y="372" fill="#520099"/><rect x="372" y="372" fill="#580099"/><rect x="384" y="372" fill="#5d0099"/><rect x="396" y="372" fill="#630099"/><rect x="408" y="372" fill="#690099"/><rect x="420" y="372" fill="#6f0099"/><rect x="432" y="372" fill="#740099"/><rect x="444" y="372" fill="#7a0099"/><rect x="456" y="372" fill="#7f0099"/><rect x="468" y="372" fill="#850099"/><rect x="480" y="372" fill="#8a0099"/><rect x="492" y="372" fill="#900099"/><rect x="504" y="372" fill="#950099"/><rect x="516" y="372" fill="#990096"/><rect x="528" y="372" fill="#990091"/><rect x="540" y="372" fill="#99008c"/><rect x="552" y="372" fill="#990088"/><rect x="564" y="372" fill="#990084"/><rect x="576" y="372" fill="#990080"/><rect x="588" y="372" fill="#99007c"/><rect x="600" y="372" fill="#990079"/><rect x="612" y="372" fill="#990076"/><rect x="624" y="372" fill="#990072"/><rect x="636" y="372" fill="#990070"/><rect x="648" y="372" fill="#99006d"/><rect x="660" y="372" fill="#99006a"/><rect x="672" y="372" fill="#990068"/><rect x="684" y="372" fill="#990065"/><rect x="696" y="372" fill="#990063"/><rect x="708" y="372" fill="#990061"/><rect x="720" y="372" fill="#99005e"/><rect x="732" y="372" fill="#99005c"/><rect x="744" y="372" fill="#99005a"/><rect x="756" y="372" fill="#990059"/><rect x="768" y="372" fill="#990057"/><rect x="780" y="372" fill="#990055"/><rect x="792" y="372" fill="#990053"/><rect x="804" y="372" fill="#990052"/><rect x="816" y="372" fill="#990050"/><rect x="828" y="372" fill="#99004f"/><rect x="840" y="372" fill="#99004d"/><rect x="852" y="372" fill="#99004c"/><rect x="864" y="372" fill="#99004b"/><rect x="0" y="384" fill="#003b99"/><rect x="12" y="384" fill="#003a99"/><rect x="24" y="384" fill="#003899"/><rect x="36" y="384" fill="#003799"/><rect x="48" y="384" fill="#003599"/><rect x="60" y="384" fill="#003499"/><rect x="72" y="384" fill="#003299"/><rect x="84" y="384" fill="#003199"/><rect x="96" y="384" fill="#002f99"/><rect x="108" y="384" fill="#002d99"/><rect x="120" y="384" fill="#002c99"/><rect x="132" y="384" fill="#002a99"/><rect x="144" y="384" fill="#002899"/><rect x="156" y="384" fill="#002699"/><rect x="168" y="384" fill="#002599"/><rect x="180" y="384" fill="#002399"/><rect x="192" y="384" fill="#002199"/><rect x="204" y="384" fill="#001f99"/><rect x="216" y="384" fill="#001d99"/><rect x="228" y="384" fill="#001b99"/><rect x="240" y="384" fill="#0a1999"/><rect x="252" y="384" fill="#131799"/><rect x="264" y="384" fill="#1b1499"/><rect x="276" y="384" fill="#221299"/><rect x="288" y="384" fill="#291099"/><rect x="300" y="384" fill="#300d99"/><rect x="312" y="384" fill="#360a99"/><rect x="324" y="384" fill="#3c0799"/><rect x="336" y="384" fill="#430499"/><rect x="348" y="384" fill="#490099"/><rect x="360" y="384" fill="#4e0099"/><rect x="372" y="384" fill="#540099"/><rect x="384" y="384" fill="#5a0099"/><rect x="396" y="384" fill="#5f0099"/><rect x="408" y="384" fill="#650099"/><rect x="420" y="384" fill="#6b0099"/><rect x="432" y="384" fill="#700099"/><rect x="444" y="384" fill="#750099"/><rect x="456" y="384" fill="#7b0099"/><rect x="468" y="384" fill="#800099"/><rect x="480" y="384" fill="#860099"/><rect x="492" y="384" fill="#8b0099"/><rect x="504" y="384" fill="#900099"/><rect x="516" y="384" fill="#950099"/><rect x="528" y="384" fill="#990096"/><rect x="540" y="384" fill="#990091"/><rect x="552" y="384" fill="#99008d"/><rect x="564" y="384" fill="#990089"/><rect x="576" y="384" fill="#990085"/><rect x="588" y="384" fill="#990081"/><rect x="600" y="384" fill="#99007d"/><rect x="612" y="384" fill="#99007a"/><rect x="624" y="384" fill="#990076"/><rect x="636" y="384" fill="#990073"/><rect x="648" y="384" fill="#990071"/><rect x="660" y="384" fill="#99006e"/><rect x="672" y="384" fill="#99006b"/><rect x="684" y="384" fill="#990069"/><rect x="696" y="384" fill="#990066"/><rect x="708" y="384" fill="#990064"/><rect x="720" y="384" fill="#990062"/><rect x="732" y="384" fill="#990060"/><rect x="744" y="384" fill="#99005e"/><rect x="756" y="384" fill="#99005c"/><rect x="768" y="384" fill="#99005a"/><rect x="780" y="384" fill="#990058"/><rect x="792" y="384" fill="#990056"/><rect x="804" y="384" fill="#990055"/><rect x="816" y="384" fill="#990053"/><rect x="828" y="384" fill="#990052"/><rect x="840" y="384" fill="#990050"/><rect x="852" y="384" fill="#99004f"/><rect x="864" y="384" fill="#99004d"/><rect x="0" y="396" fill="#003899"/><rect x="12" y="396" fill="#003799"/><rect x="24" y="396" fill="#003599"/><rect x="36" y="396" fill="#003499"/><rect x="48" y="396" fill="#003299"/><rect x="60" y="396" fill="#003199"/><rect x="72" y="396" fill="#002f99"/><rect x="84" y="396" fill="#002e99"/><rect x="96" y="396" fill="#002c99"/><rect x="108" y="396" fill="#002a99"/><rect x="120" y="396" fill="#002999"/><rect x="132" y="396" fill="#002799"/><rect x="144" y="396" fill="#002599"/><rect x="156" y="396" fill="#002499"/><rect x="168" y="396" fill="#002299"/><rect x="180" y="396" fill="#002099"/><rect x="192" y="396" fill="#001e99"/><rect x="204" y="396" fill="#001c99"/><rect x="216" y="396" fill="#001a99"/><rect x="228" y="396" fill="#001899"/><rect x="240" y="396" fill="#081699"/><rect x="252" y="396" fill="#111499"/><rect x="264" y="396" fill="#191199"/><rect x="276" y="396" fill="#200f99"/><rect x="288" y="396" fill="#270d99"/><rect x="300" y="396" fill="#2d0a99"/><rect x="312" y="396" fill="#340799"/><rect x="324" y="396" fill="#3a0499"/><rect x="336" y="396" fill="#400099"/><rect x="348" y="396" fill="#460099"/><rect x="360" y="396" fill="#4b0099"/><rect x="372" y="396" fill="#510099"/><rect x="384" y="396" fill="#570099"/><rect x="396" y="396" fill="#5c0099"/><rect x="408" y="396" fill="#610099"/><rect x="420" y="396" fill="#670099"/><rect x="432" y="396" fill="#6c0099"/><rect x="444" y="396" fill="#710099"/><rect x="456" y="396" fill="#770099"/><rect x="468" y="396" fill="#7c0099"/><rect x="480" y="396" fill="#810099"/><rect x="492" y="396" fill="#860099"/><rect x="504" y="396" fill="#8b0099"/><rect x="516" y="396" fill="#900099"/><rect x="528" y="396" fill="#950099"/><rect x="540" y="396" fill="#990096"/><rect x="552" y="396" fill="#990092"/><rect x="564" y="396" fill="#99008d"/><rect x="576" y="396" fill="#990089"/><rect x="588" y="396" fill="#990085"/><rect x="600" y="396" fill="#990081"/><rect x="612" y="396" fill="#99007e"/><rect x="624" y="396" fill="#99007b"/><rect x="636" y="396" fill="#990077"/><rect x="648" y="396" fill="#990074"/><rect x="660" y="396" fill="#990072"/><rect x="672" y="396" fill="#99006f"/><rect x="684" y="396" fill="#99006c"/><rect x="696" y="396" fill="#99006a"/><rect x="708" y="396" fill="#990067"/><rect x="720" y="396" fill="#990065"/><rect x="732" y="396" fill="#990063"/><rect x="744" y="396" fill="#990061"/><rect x="756" y="396" fill="#99005f"/><rect x="768" y="396" fill="#99005d"/><rect x="780" y="396" fill="#99005b"/><rect x="792" y="396" fill="#990059"/><rect x="804" y="396" fill="#990058"/><rect x="816" y="396" fill="#990056"/><rect x="828" y="396" fill="#990054"/><rect x="840" y="396" fill="#990053"/><rect x="852" y="396" fill="#990051"/><rect x="864" y="396" fill="#990050"/><rect x="0" y="408" fill="#003599"/><rect x="12" y="408" fill="#003499"/><rect x="24" y="408" fill="#003399"/><rect x="36" y="408" fill="#003199"/><rect x="48" y="408" fill="#003099"/><rect x="60" y="408" fill="#002e99"/><rect x="72" y="408" fill="#002c99"/><rect x="84" y="408" fill="#002b99"/><rect x="96" y="408" fill="#002999"/><rect x="108" y="408" fill="#002899"/><rect x="120" y="408" fill="#002699"/><rect x="132" y="408" fill="#002499"/><rect x="144" y="408" fill="#002399"/><rect x="156" y="408" fill="#002199"/><rect x="168" y="408" fill="#001f99"/><rect x="180" y="408" fill="#001d99"/><rect x="192" y="408" fill="#001b99"/><rect x="204" y="408" fill="#001999"/><rect x="216" y="408" fill="#001799"/><rect x="228" y="408" fill="#001599"/><rect x="240" y="408" fill="#061399"/><rect x="252" y="408" fill="#0f1199"/><rect x="264" y="408" fill="#170f99"/><rect x="276" y="408" fill="#1e0c99"/><rect x="288" y="408" fill="#250a99"/><rect x="300" y="408" fill="#2b0799"/><rect x="312" y="408" fill="#310499"/><rect x="324" y="408" fill="#370099"/><rect x="336" y="408" fill="#3d0099"/><rect x="348" y="408" fill="#430099"/><rect x="360" y="408" fill="#480099"/><rect x="372" y="408" fill="#4e0099"/><rect x="384" y="408" fill="#530099"/><rect x="396" y="408" fill="#590099"/><rect x="408" y="408" fill="#5e0099"/><rect x="420" y="408" fill="#630099"/><rect x="432" y="408" fill="#680099"/><rect x="444" y="408" fill="#6e0099"/><rect x="456" y="408" fill="#730099"/><rect x="468" y="408" fill="#780099"/><rect x="480" y="408" fill="#7d0099"/><rect x="492" y="408" fill="#820099"/><rect x="504" y="408" fill="#870099"/><rect x="516" y="408" fill="#8c0099"/><rect x="528" y="408" fill="#910099"/><rect x="540" y="408" fill="#960099"/><rect x="552" y="408" fill="#990097"/><rect x="564" y="408" fill="#990092"/><rect x="576" y="408" fill="#99008e"/><rect x="588" y="408" fill="#99008a"/><rect x="600" y="408" fill="#990086"/><rect x="612" y="408" fill="#990082"/><rect x="624" y="408" fill="#99007f"/><rect x="636" y="408" fill="#99007b"/><rect x="648" y="408" fill="#990078"/><rect x="660" y="408" fill="#990075"/><rect x="672" y="408" fill="#990073"/><rect x="684" y="408" fill="#990070"/><rect x="696" y="408" fill="#99006d"/><rect x="708" y="408" fill="#99006b"/><rect x="720" y="408" fill="#990069"/><rect x="732" y="408" fill="#990066"/><rect x="744" y="408" fill="#990064"/><rect x="756" y="408" fill="#990062"/><rect x="768" y="408" fill="#990060"/><rect x="780" y="408" fill="#99005e"/><rect x="792" y="408" fill="#99005c"/><rect x="804" y="408" fill="#99005b"/><rect x="816" y="408" fill="#990059"/><rect x="828" y="408" fill="#990057"/><rect x="840" y="408" fill="#990056"/><rect x="852" y="408" fill="#990054"/><rect x="864" y="408" fill="#990053"/><rect x="0" y="420" fill="#003399"/><rect x="12" y="420" fill="#003199"/><rect x="24" y="420" fill="#003099"/><rect x="36" y="420" fill="#002e99"/><rect x="48" y="420" fill="#002d99"/><rect x="60" y="420" fill="#002b99"/><rect x="72" y="420" fill="#002a99"/><rect x="84" y="420" fill="#002899"/><rect x="96" y="420" fill="#002799"/><rect x="108" y="420" fill="#002599"/><rect x="120" y="420" fill="#002399"/><rect x="132" y="420" fill="#002299"/><rect x="144" y="420" fill="#002099"/><rect x="156" y="420" fill="#001e99"/><rect x="168" y="420" fill="#001c99"/><rect x="180" y="420" fill="#001b99"/><rect x="192" y="420" fill="#001999"/><rect x="204" y="420" fill="#001799"/><rect x="216" y="420" fill="#001599"/><rect x="228" y="420" fill="#001399"/><rect x="240" y="420" fill="#041199"/><rect x="252" y="420" fill="#0e0e99"/><rect x="264" y="420" fill="#150c99"/><rect x="276" y="420" fill="#1c0999"/><rect x="288" y="420" fill="#230799"/><rect x="300" y="420" fill="#290399"/><rect x="312" y="420" fill="#2f0099"/><rect x="324" y="420" fill="#350099"/><rect x="336" y="420" fill="#3b0099"/><rect x="348" y="420" fill="#400099"/><rect x="360" y="420" fill="#460099"/><rect x="372" y="420" fill="#4b0099"/><rect x="384" y="420" fill="#500099"/><rect x="396" y="420" fill="#560099"/><rect x="408" y="420" fill="#5b0099"/><rect x="420" y="420" fill="#600099"/><rect x="432" y="420" fill="#650099"/><rect x="444" y="420" fill="#6a0099"/><rect x="456" y="420" fill="#6f0099"/><rect x="468" y="420" fill="#740099"/><rect x="480" y="420" fill="#790099"/><rect x="492" y="420" fill="#7e0099"/><rect x="504" y="420" fill="#820099"/><rect x="516" y="420" fill="#870099"/><rect x="528" y="420" fill="#8c0099"/><rect x="540" y="420" fill="#910099"/><rect x="552" y="420" fill="#960099"/><rect x="564" y="420" fill="#990097"/><rect x="576" y="420" fill="#990092"/><rect x="588" y="420" fill="#99008e"/><rect x="600" y="420" fill="#99008a"/><rect x="612" y="420" fill="#990086"/><rect x="624" y="420" fill="#990083"/><rect x="636" y="420" fill="#99007f"/><rect x="648" y="420" fill="#99007c"/><rect x="660" y="420" fill="#990079"/><rect x="672" y="420" fill="#990076"/><rect x="684" y="420" fill="#990073"/><rect x="696" y="420" fill="#990071"/><rect x="708" y="420" fill="#99006e"/><rect x="720" y="420" fill="#99006c"/><rect x="732" y="420" fill="#99006a"/><rect x="744" y="420" fill="#990067"/><rect x="756" y="420" fill="#990065"/><rect x="768" y="420" fill="#990063"/><rect x="780" y="420" fill="#990061"/><rect x="792" y="420" fill="#99005f"/><rect x="804" y="420" fill="#99005e"/><rect x="816" y="420" fill="#99005c"/><rect x="828" y="420" fill="#99005a"/><rect x="840" y="420" fill="#990059"/><rect x="852" y="420" fill="#990057"/><rect x="864" y="420" fill="#990055"/><rect x="0" y="432" fill="#003099"/><rect x="12" y="432" fill="#002f99"/><rect x="24" y="432" fill="#002d99"/><rect x="36" y="432" fill="#002c99"/><rect x="48" y="432" fill="#002a99"/><rect x="60" y="432" fill="#002999"/><rect x="72" y="432" fill="#002799"/><rect x="84" y="432" fill="#002699"/><rect x="96" y="432" fill="#002499"/><rect x="108" y="432" fill="#002399"/><rect x="120" y="432" fill="#002199"/><rect x="132" y="432" fill="#001f99"/><rect x="144" y="432" fill="#001e99"/><rect x="156" y="432" fill="#001c99"/><rect x="168" y="432" fill="#001a99"/><rect x="180" y="432" fill="#001899"/><rect x="192" y="432" fill="#001699"/><rect x="204" y="432" fill="#001499"/><rect x="216" y="432" fill="#001299"/><rect x="228" y="432" fill="#001099"/><rect x="240" y="432" fill="#020e99"/><rect x="252" y="432" fill="#0c0c99"/><rect x="264" y="432" fill="#140999"/><rect x="276" y="432" fill="#1b0799"/><rect x="288" y="432" fill="#210399"/><rect x="300" y="432" fill="#270099"/><rect x="312" y="432" fill="#2d0099"/><rect x="324" y="432" fill="#330099"/><rect x="336" y="432" fill="#380099"/><rect x="348" y="432" fill="#3e0099"/><rect x="360" y="432" fill="#430099"/><rect x="372" y="432" fill="#480099"/><rect x="384" y="432" fill="#4e0099"/><rect x="396" y="432" fill="#530099"/><rect x="408" y="432" fill="#580099"/><rect x="420" y="432" fill="#5d0099"/><rect x="432" y="432" fill="#620099"/><rect x="444" y="432" fill="#670099"/><rect x="456" y="432" fill="#6b0099"/><rect x="468" y="432" fill="#700099"/><rect x="480" y="432" fill="#750099"/><rect x="492" y="432" fill="#7a0099"/><rect x="504" y="432" fill="#7e0099"/><rect x="516" y="432" fill="#830099"/><rect x="528" y="432" fill="#880099"/><rect x="540" y="432" fill="#8c0099"/><rect x="552" y="432" fill="#910099"/><rect x="564" y="432" fill="#960099"/><rect x="576" y="432" fill="#990097"/><rect x="588" y="432" fill="#990092"/><rect x="600" y="432" fill="#99008e"/><rect x="612" y="432" fill="#99008a"/><rect x="624" y="432" fill="#990087"/><rect x="636" y="432" fill="#990083"/><rect x="648" y="432" fill="#990080"/><rect x="660" y="432" fill="#99007d"/><rect x="672" y="432" fill="#99007a"/><rect x="684" y="432" fill="#990077"/><rect x="696" y="432" fill="#990074"/><rect x="708" y="432" fill="#990072"/><rect x="720" y="432" fill="#99006f"/><rect x="732" y="432" fill="#99006d"/><rect x="744" y="432" fill="#99006b"/><rect x="756" y="432" fill="#990068"/><rect x="768" y="432" fill="#990066"/><rect x="780" y="432" fill="#990064"/><rect x="792" y="432" fill="#990062"/><rect x="804" y="432" fill="#990061"/><rect x="816" y="432" fill="#99005f"/><rect x="828" y="432" fill="#99005d"/><rect x="840" y="432" fill="#99005b"/><rect x="852" y="432" fill="#99005a"/><rect x="864" y="432" fill="#990058"/><rect x="0" y="444" fill="#002e99"/><rect x="12" y="444" fill="#002c99"/><rect x="24" y="444" fill="#002b99"/><rect x="36" y="444" fill="#002999"/><rect x="48" y="444" fill="#002899"/><rect x="60" y="444" fill="#002699"/><rect x="72" y="444" fill="#002599"/><rect x="84" y="444" fill="#002399"/><rect x="96" y="444" fill="#002299"/><rect x="108" y="444" fill="#002099"/><rect x="120" y="444" fill="#001e99"/><rect x="132" y="444" fill="#001d99"/><rect x="144" y="444" fill="#001b99"/><rect x="156" y="444" fill="#001999"/><rect x="168" y="444" fill="#001899"/><rect x="180" y="444" fill="#001699"/><rect x="192" y="444" fill="#001499"/><rect x="204" y="444" fill="#001299"/><rect x="216" y="444" fill="#001099"/><rect x="228" y="444" fill="#000e99"/><rect x="240" y="444" fill="#000b99"/><rect x="252" y="444" fill="#0a0999"/><rect x="264" y="444" fill="#120699"/><rect x="276" y="444" fill="#190399"/><rect x="288" y="444" fill="#1f0099"/><rect x="300" y="444" fill="#250099"/><rect x="312" y="444" fill="#2b0099"/><rect x="324" y="444" fill="#310099"/><rect x="336" y="444" fill="#360099"/><rect x="348" y="444" fill="#3c0099"/><rect x="360" y="444" fill="#410099"/><rect x="372" y="444" fill="#460099"/><rect x="384" y="444" fill="#4b0099"/><rect x="396" y="444" fill="#500099"/><rect x="408" y="444" fill="#550099"/><rect x="420" y="444" fill="#5a0099"/><rect x="432" y="444" fill="#5f0099"/><rect x="444" y="444" fill="#630099"/><rect x="456" y="444" fill="#680099"/><rect x="468" y="444" fill="#6d0099"/><rect x="480" y="444" fill="#710099"/><rect x="492" y="444" fill="#760099"/><rect x="504" y="444" fill="#7b0099"/><rect x="516" y="444" fill="#7f0099"/><rect x="528" y="444" fill="#840099"/><rect x="540" y="444" fill="#880099"/><rect x="552" y="444" fill="#8d0099"/><rect x="564" y="444" fill="#910099"/><rect x="576" y="444" fill="#960099"/><rect x="588" y="444" fill="#990097"/><rect x="600" y="444" fill="#990093"/><rect x="612" y="444" fill="#99008f"/><rect x="624" y="444" fill="#99008b"/><rect x="636" y="444" fill="#990087"/><rect x="648" y="444" fill="#990084"/><rect x="660" y="444" fill="#990081"/><rect x="672" y="444" fill="#99007e"/><rect x="684" y="444" fill="#99007b"/><rect x="696" y="444" fill="#990078"/><rect x="708" y="444" fill="#990075"/><rect x="720" y="444" fill="#990073"/><rect x="732" y="444" fill="#990070"/><rect x="744" y="444" fill="#99006e"/><rect x="756" y="444" fill="#99006c"/><rect x="768" y="444" fill="#990069"/><rect x="780" y="444" fill="#990067"/><rect x="792" y="444" fill="#990065"/><rect x="804" y="444" fill="#990063"/><rect x="816" y="444" fill="#990062"/><rect x="828" y="444" fill="#990060"/><rect x="840" y="444" fill="#99005e"/><rect x="852" y="444" fill="#99005c"/><rect x="864" y="444" fill="#99005b"/><rect x="0" y="456" fill="#002b99"/><rect x="12" y="456" fill="#002a99"/><rect x="24" y="456" fill="#002899"/><rect x="36" y="456" fill="#002799"/><rect x="48" y="456" fill="#002599"/><rect x="60" y="456" fill="#002499"/><rect x="72" y="456" fill="#002299"/><rect x="84" y="456" fill="#002199"/><rect x="96" y="456" fill="#001f99"/><rect x="108" y="456" fill="#001e99"/><rect x="120" y="456" fill="#001c99"/><rect x="132" y="456" fill="#001a99"/><rect x="144" y="456" fill="#001999"/><rect x="156" y="456" fill="#001799"/><rect x="168" y="456" fill="#001599"/><rect x="180" y="456" fill="#001399"/><rect x="192" y="456" fill="#001199"/><rect x="204" y="456" fill="#000f99"/><rect x="216" y="456" fill="#000d99"/><rect x="228" y="456" fill="#000b99"/><rect x="240" y="456" fill="#000999"/><rect x="252" y="456" fill="#090699"/><rect x="264" y="456" fill="#110399"/><rect x="276" y="456" fill="#170099"/><rect x="288" y="456" fill="#1e0099"/><rect x="300" y="456" fill="#240099"/><rect x="312" y="456" fill="#290099"/><rect x="324" y="456" fill="#2f0099"/><rect x="336" y="456" fill="#340099"/><rect x="348" y="456" fill="#390099"/><rect x="360" y="456" fill="#3f0099"/><rect x="372" y="456" fill="#440099"/><rect x="384" y="456" fill="#480099"/><rect x="396" y="456" fill="#4d0099"/><rect x="408" y="456" fill="#520099"/><rect x="420" y="456" fill="#570099"/><rect x="432" y="456" fill="#5c0099"/><rect x="444" y="456" fill="#600099"/><rect x="456" y="456" fill="#650099"/><rect x="468" y="456" fill="#690099"/><rect x="480" y="456" fill="#6e0099"/><rect x="492" y="456" fill="#720099"/><rect x="504" y="456" fill="#770099"/><rect x="516" y="456" fill="#7b0099"/><rect x="528" y="456" fill="#800099"/><rect x="540" y="456" fill="#840099"/><rect x="552" y="456" fill="#890099"/><rect x="564" y="456" fill="#8d0099"/><rect x="576" y="456" fill="#910099"/><rect x="588" y="456" fill="#960099"/><rect x="600" y="456" fill="#990097"/><rect x="612" y="456" fill="#990093"/><rect x="624" y="456" fill="#99008f"/><rect x="636" y="456" fill="#99008b"/><rect x="648" y="456" fill="#990088"/><rect x="660" y="456" fill="#990084"/><rect x="672" y="456" fill="#990081"/><rect x="684" y="456" fill="#99007e"/><rect x="696" y="456" fill="#99007b"/><rect x="708" y="456" fill="#990079"/><rect x="720" y="456" fill="#990076"/><rect x="732" y="456" fill="#990073"/><rect x="744" y="456" fill="#990071"/><rect x="756" y="456" fill="#99006f"/><rect x="768" y="456" fill="#99006c"/><rect x="780" y="456" fill="#99006a"/><rect x="792" y="456" fill="#990068"/><rect x="804" y="456" fill="#990066"/><rect x="816" y="456" fill="#990064"/><rect x="828" y="456" fill="#990063"/><rect x="840" y="456" fill="#990061"/><rect x="852" y="456" fill="#99005f"/><rect x="864" y="456" fill="#99005d"/><rect x="0" y="468" fill="#002999"/><rect x="12" y="468" fill="#002799"/><rect x="24" y="468" fill="#002699"/><rect x="36" y="468" fill="#002599"/><rect x="48" y="468" fill="#002399"/><rect x="60" y="468" fill="#002299"/><rect x="72" y="468" fill="#002099"/><rect x="84" y="468" fill="#001f99"/><rect x="96" y="468" fill="#001d99"/><rect x="108" y="468" fill="#001c99"/><rect x="120" y="468" fill="#001a99"/><rect x="132" y="468" fill="#001899"/><rect x="144" y="468" fill="#001799"/><rect x="156" y="468" fill="#001599"/><rect x="168" y="468" fill="#001399"/><rect x="180" y="468" fill="#001199"/><rect x="192" y="468" fill="#000f99"/><rect x="204" y="468" fill="#000d99"/><rect x="216" y="468" fill="#000b99"/><rect x="228" y="468" fill="#000999"/><rect x="240" y="468" fill="#000699"/><rect x="252" y="468" fill="#070399"/><rect x="264" y="468" fill="#0f0099"/><rect x="276" y="468" fill="#160099"/><rect x="288" y="468" fill="#1c0099"/><rect x="300" y="468" fill="#220099"/><rect x="312" y="468" fill="#280099"/><rect x="324" y="468" fill="#2d0099"/><rect x="336" y="468" fill="#320099"/><rect x="348" y="468" fill="#370099"/><rect x="360" y="468" fill="#3c0099"/><rect x="372" y="468" fill="#410099"/><rect x="384" y="468" fill="#460099"/><rect x="396" y="468" fill="#4b0099"/><rect x="408" y="468" fill="#500099"/><rect x="420" y="468" fill="#540099"/><rect x="432" y="468" fill="#590099"/><rect x="444" y="468" fill="#5d0099"/><rect x="456" y="468" fill="#620099"/><rect x="468" y="468" fill="#660099"/><rect x="480" y="468" fill="#6b0099"/><rect x="492" y="468" fill="#6f0099"/><rect x="504" y="468" fill="#740099"/><rect x="516" y="468" fill="#780099"/><rect x="528" y="468" fill="#7c0099"/><rect x="540" y="468" fill="#810099"/><rect x="552" y="468" fill="#850099"/><rect x="564" y="468" fill="#890099"/><rect x="576" y="468" fill="#8d0099"/><rect x="588" y="468" fill="#920099"/><rect x="600" y="468" fill="#960099"/><rect x="612" y="468" fill="#990097"/><rect x="624" y="468" fill="#990093"/><rect x="636" y="468" fill="#99008f"/><rect x="648" y="468" fill="#99008c"/><rect x="660" y="468" fill="#990088"/><rect x="672" y="468" fill="#990085"/><rect x="684" y="468" fill="#990082"/><rect x="696" y="468" fill="#99007f"/><rect x="708" y="468" fill="#99007c"/><rect x="720" y="468" fill="#990079"/><rect x="732" y="468" fill="#990077"/><rect x="744" y="468" fill="#990074"/><rect x="756" y="468" fill="#990072"/><rect x="768" y="468" fill="#990070"/><rect x="780" y="468" fill="#99006d"/><rect x="792" y="468" fill="#99006b"/><rect x="804" y="468" fill="#990069"/><rect x="816" y="468" fill="#990067"/><rect x="828" y="468" fill="#990065"/><rect x="840" y="468" fill="#990064"/><rect x="852" y="468" fill="#990062"/><rect x="864" y="468" fill="#990060"/><rect x="0" y="480" fill="#002799"/><rect x="12" y="480" fill="#002599"/><rect x="24" y="480" fill="#002499"/><rect x="36" y="480" fill="#002299"/><rect x="48" y="480" fill="#002199"/><rect x="60" y="480" fill="#002099"/><rect x="72" y="480" fill="#001e99"/><rect x="84" y="480" fill="#001c99"/><rect x="96" y="480" fill="#001b99"/><rect x="108" y="480" fill="#001999"/><rect x="120" y="480" fill="#001899"/><rect x="132" y="480" fill="#001699"/><rect x="144" y="480" fill="#001499"/><rect x="156" y="480" fill="#001399"/><rect x="168" y="480" fill="#001199"/><rect x="180" y="480" fill="#000f99"/><rect x="192" y="480" fill="#000d99"/><rect x="204" y="480" fill="#000b99"/><rect x="216" y="480" fill="#000899"/><rect x="228" y="480" fill="#000699"/><rect x="240" y="480" fill="#000399"/><rect x="252" y="480" fill="#060099"/><rect x="264" y="480" fill="#0e0099"/><rect x="276" y="480" fill="#140099"/><rect x="288" y="480" fill="#1a0099"/><rect x="300" y="480" fill="#200099"/><rect x="312" y="480" fill="#260099"/><rect x="324" y="480" fill="#2b0099"/><rect x="336" y="480" fill="#300099"/><rect x="348" y="480" fill="#350099"/><rect x="360" y="480" fill="#3a0099"/><rect x="372" y="480" fill="#3f0099"/><rect x="384" y="480" fill="#440099"/><rect x="396" y="480" fill="#480099"/><rect x="408" y="480" fill="#4d0099"/><rect x="420" y="480" fill="#520099"/><rect x="432" y="480" fill="#560099"/><rect x="444" y="480" fill="#5b0099"/><rect x="456" y="480" fill="#5f0099"/><rect x="468" y="480" fill="#630099"/><rect x="480" y="480" fill="#680099"/><rect x="492" y="480" fill="#6c0099"/><rect x="504" y="480" fill="#700099"/><rect x="516" y="480" fill="#750099"/><rect x="528" y="480" fill="#790099"/><rect x="540" y="480" fill="#7d0099"/><rect x="552" y="480" fill="#810099"/><rect x="564" y="480" fill="#850099"/><rect x="576" y="480" fill="#8a0099"/><rect x="588" y="480" fill="#8e0099"/><rect x="600" y="480" fill="#920099"/><rect x="612" y="480" fill="#960099"/><rect x="624" y="480" fill="#990097"/><rect x="636" y="480" fill="#990093"/><rect x="648" y="480" fill="#99008f"/><rect x="660" y="480" fill="#99008c"/><rect x="672" y="480" fill="#990088"/><rect x="684" y="480" fill="#990085"/><rect x="696" y="480" fill="#990082"/><rect x="708" y="480" fill="#99007f"/><rect x="720" y="480" fill="#99007d"/><rect x="732" y="480" fill="#99007a"/><rect x="744" y="480" fill="#990077"/><rect x="756" y="480" fill="#990075"/><rect x="768" y="480" fill="#990073"/><rect x="780" y="480" fill="#990070"/><rect x="792" y="480" fill="#99006e"/><rect x="804" y="480" fill="#99006c"/><rect x="816" y="480" fill="#99006a"/><rect x="828" y="480" fill="#990068"/><rect x="840" y="480" fill="#990066"/><rect x="852" y="480" fill="#990065"/><rect x="864" y="480" fill="#990063"/><rect x="0" y="492" fill="#002499"/><rect x="12" y="492" fill="#002399"/><rect x="24" y="492" fill="#002299"/><rect x="36" y="492" fill="#002099"/><rect x="48" y="492" fill="#001f99"/><rect x="60" y="492" fill="#001d99"/><rect x="72" y="492" fill="#001c99"/><rect x="84" y="492" fill="#001a99"/><rect x="96" y="492" fill="#001999"/><rect x="108" y="492" fill="#001799"/><rect x="120" y="492" fill="#001699"/><rect x="132" y="492" fill="#001499"/><rect x="144" y="492" fill="#001299"/><rect x="156" y="492" fill="#001099"/><rect x="168" y="492" fill="#000e99"/><rect x="180" y="492" fill="#000d99"/><rect x="192" y="492" fill="#000b99"/><rect x="204" y="492" fill="#000899"/><rect x="216" y="492" fill="#000699"/><rect x="228" y="492" fill="#000399"/><rect x="240" y="492" fill="#000099"/><rect x="252" y="492" fill="#040099"/><rect x="264" y="492" fill="#0c0099"/><rect x="276" y="492" fill="#130099"/><rect x="288" y="492" fill="#190099"/><rect x="300" y="492" fill="#1f0099"/><rect x="312" y="492" fill="#240099"/><rect x="324" y="492" fill="#290099"/><rect x="336" y="492" fill="#2e0099"/><rect x="348" y="492" fill="#330099"/><rect x="360" y="492" fill="#380099"/><rect x="372" y="492" fill="#3d0099"/><rect x="384" y="492" fill="#420099"/><rect x="396" y="492" fill="#460099"/><rect x="408" y="492" fill="#4b0099"/><rect x="420" y="492" fill="#4f0099"/><rect x="432" y="492" fill="#540099"/><rect x="444" y="492" fill="#580099"/><rect x="456" y="492" fill="#5c0099"/><rect x="468" y="492" fill="#610099"/><rect x="480" y="492" fill="#650099"/><rect x="492" y="492" fill="#690099"/><rect x="504" y="492" fill="#6d0099"/><rect x="516" y="492" fill="#710099"/><rect x="528" y="492" fill="#750099"/><rect x="540" y="492" fill="#7a0099"/><rect x="552" y="492" fill="#7e0099"/><rect x="564" y="492" fill="#820099"/><rect x="576" y="492" fill="#860099"/><rect x="588" y="492" fill="#8a0099"/><rect x="600" y="492" fill="#8e0099"/><rect x="612" y="492" fill="#920099"/><rect x="624" y="492" fill="#960099"/><rect x="636" y="492" fill="#990097"/><rect x="648" y="492" fill="#990093"/><rect x="660" y="492" fill="#990090"/><rect x="672" y="492" fill="#99008c"/><rect x="684" y="492" fill="#990089"/><rect x="696" y="492" fill="#990086"/><rect x="708" y="492" fill="#990083"/><rect x="720" y="492" fill="#990080"/><rect x="732" y="492" fill="#99007d"/><rect x="744" y="492" fill="#99007b"/><rect x="756" y="492" fill="#990078"/><rect x="768" y="492" fill="#990076"/><rect x="780" y="492" fill="#990073"/><rect x="792" y="492" fill="#990071"/><rect x="804" y="492" fill="#99006f"/><rect x="816" y="492" fill="#99006d"/><rect x="828" y="492" fill="#99006b"/><rect x="840" y="492" fill="#990069"/><rect x="852" y="492" fill="#990067"/><rect x="864" y="492" fill="#990065"/><rect x="0" y="504" fill="#002299"/><rect x="12" y="504" fill="#002199"/><rect x="24" y="504" fill="#002099"/><rect x="36" y="504" fill="#001e99"/><rect x="48" y="504" fill="#001d99"/><rect x="60" y="504" fill="#001b99"/><rect x="72" y="504" fill="#001a99"/><rect x="84" y="504" fill="#001899"/><rect x="96" y="504" fill="#001799"/><rect x="108" y="504" fill="#001599"/><rect x="120" y="504" fill="#001399"/><rect x="132" y="504" fill="#001299"/><rect x="144" y="504" fill="#001099"/><rect x="156" y="504" fill="#000e99"/><rect x="168" y="504" fill="#000c99"/><rect x="180" y="504" fill="#000a99"/><rect x="192" y="504" fill="#000899"/><rect x="204" y="504" fill="#000699"/><rect x="216" y="504" fill="#000399"/><rect x="228" y="504" fill="#000099"/><rect x="240" y="504" fill="#000099"/><rect x="252" y="504" fill="#020099"/><rect x="264" y="504" fill="#0b0099"/><rect x="276" y="504" fill="#110099"/><rect x="288" y="504" fill="#180099"/><rect x="300" y="504" fill="#1d0099"/><rect x="312" y="504" fill="#230099"/><rect x="324" y="504" fill="#280099"/><rect x="336" y="504" fill="#2d0099"/><rect x="348" y="504" fill="#320099"/><rect x="360" y="504" fill="#360099"/><rect x="372" y="504" fill="#3b0099"/><rect x="384" y="504" fill="#400099"/><rect x="396" y="504" fill="#440099"/><rect x="408" y="504" fill="#480099"/><rect x="420" y="504" fill="#4d0099"/><rect x="432" y="504" fill="#510099"/><rect x="444" y="504" fill="#550099"/><rect x="456" y="504" fill="#5a0099"/><rect x="468" y="504" fill="#5e0099"/><rect x="480" y="504" fill="#620099"/><rect x="492" y="504" fill="#660099"/><rect x="504" y="504" fill="#6a0099"/><rect x="516" y="504" fill="#6e0099"/><rect x="528" y="504" fill="#720099"/><rect x="540" y="504" fill="#760099"/><rect x="552" y="504" fill="#7a0099"/><rect x="564" y="504" fill="#7e0099"/><rect x="576" y="504" fill="#820099"/><rect x="588" y="504" fill="#860099"/><rect x="600" y="504" fill="#8a0099"/><rect x="612" y="504" fill="#8e0099"/><rect x="624" y="504" fill="#920099"/><rect x="636" y="504" fill="#960099"/><rect x="648" y="504" fill="#990097"/><rect x="660" y="504" fill="#990093"/><rect x="672" y="504" fill="#990090"/><rect x="684" y="504" fill="#99008c"/><rect x="696" y="504" fill="#990089"/><rect x="708" y="504" fill="#990086"/><rect x="720" y="504" fill="#990083"/><rect x="732" y="504" fill="#990080"/><rect x="744" y="504" fill="#99007e"/><rect x="756" y="504" fill="#99007b"/><rect x="768" y="504" fill="#990079"/><rect x="780" y="504" fill="#990076"/><rect x="792" y="504" fill="#990074"/><rect x="804" y="504" fill="#990072"/><rect x="816" y="504" fill="#990070"/><rect x="828" y="504" fill="#99006e"/><rect x="840" y="504" fill="#99006c"/><rect x="852" y="504" fill="#99006a"/><rect x="864" y="504" fill="#990068"/><rect x="0" y="516" fill="#002099"/><rect x="12" y="516" fill="#001f99"/><rect x="24" y="516" fill="#001e99"/><rect x="36" y="516" fill="#001c99"/><rect x="48" y="516" fill="#001b99"/><rect x="60" y="516" fill="#001999"/><rect x="72" y="516" fill="#001899"/><rect x="84" y="516" fill="#001699"/><rect x="96" y="516" fill="#001599"/><rect x="108" y="516" fill="#001399"/><rect x="120" y="516" fill="#001199"/><rect x="132" y="516" fill="#001099"/><rect x="144" y="516" fill="#000e99"/><rect x="156" y="516" fill="#000c99"/><rect x="168" y="516" fill="#000a99"/><rect x="180" y="516" fill="#000899"/><rect x="192" y="516" fill="#000699"/><rect x="204" y="516" fill="#000399"/><rect x="216" y="516" fill="#000099"/><rect x="228" y="516" fill="#000099"/><rect x="240" y="516" fill="#000099"/><rect x="252" y="516" fill="#000099"/><rect x="264" y="516" fill="#090099"/><rect x="276" y="516" fill="#100099"/><rect x="288" y="516" fill="#160099"/><rect x="300" y="516" fill="#1c0099"/><rect x="312" y="516" fill="#210099"/><rect x="324" y="516" fill="#260099"/><rect x="336" y="516" fill="#2b0099"/><rect x="348" y="516" fill="#300099"/><rect x="360" y="516" fill="#350099"/><rect x="372" y="516" fill="#390099"/><rect x="384" y="516" fill="#3e0099"/><rect x="396" y="516" fill="#420099"/><rect x="408" y="516" fill="#460099"/><rect x="420" y="516" fill="#4b0099"/><rect x="432" y="516" fill="#4f0099"/><rect x="444" y="516" fill="#530099"/><rect x="456" y="516" fill="#570099"/><rect x="468" y="516" fill="#5b0099"/><rect x="480" y="516" fill="#5f0099"/><rect x="492" y="516" fill="#630099"/><rect x="504" y="516" fill="#670099"/><rect x="516" y="516" fill="#6b0099"/><rect x="528" y="516" fill="#6f0099"/><rect x="540" y="516" fill="#730099"/><rect x="552" y="516" fill="#770099"/><rect x="564" y="516" fill="#7b0099"/><rect x="576" y="516" fill="#7f0099"/><rect x="588" y="516" fill="#830099"/><rect x="600" y="516" fill="#870099"/><rect x="612" y="516" fill="#8b0099"/><rect x="624" y="516" fill="#8e0099"/><rect x="636" y="516" fill="#920099"/><rect x="648" y="516" fill="#960099"/><rect x="660" y="516" fill="#990097"/><rect x="672" y="516" fill="#990094"/><rect x="684" y="516" fill="#990090"/><rect x="696" y="516" fill="#99008d"/><rect x="708" y="516" fill="#99008a"/><rect x="720" y="516" fill="#990087"/><rect x="732" y="516" fill="#990084"/><rect x="744" y="516" fill="#990081"/><rect x="756" y="516" fill="#99007e"/><rect x="768" y="516" fill="#99007c"/><rect x="780" y="516" fill="#990079"/><rect x="792" y="516" fill="#990077"/><rect x="804" y="516" fill="#990075"/><rect x="816" y="516" fill="#990073"/><rect x="828" y="516" fill="#990071"/><rect x="840" y="516" fill="#99006f"/><rect x="852" y="516" fill="#99006d"/><rect x="864" y="516" fill="#99006b"/><rect x="0" y="528" fill="#001e99"/><rect x="12" y="528" fill="#001d99"/><rect x="24" y="528" fill="#001c99"/><rect x="36" y="528" fill="#001a99"/><rect x="48" y="528" fill="#001999"/><rect x="60" y="528" fill="#001799"/><rect x="72" y="528" fill="#001699"/><rect x="84" y="528" fill="#001499"/><rect x="96" y="528" fill="#001399"/><rect x="108" y="528" fill="#001199"/><rect x="120" y="528" fill="#000f99"/><rect x="132" y="528" fill="#000e99"/><rect x="144" y="528" fill="#000c99"/><rect x="156" y="528" fill="#000a99"/><rect x="168" y="528" fill="#000899"/><rect x="180" y="528" fill="#000699"/><rect x="192" y="528" fill="#000399"/><rect x="204" y="528" fill="#000099"/><rect x="216" y="528" fill="#000099"/><rect x="228" y="528" fill="#000099"/><rect x="240" y="528" fill="#000099"/><rect x="252" y="528" fill="#000099"/><rect x="264" y="528" fill="#080099"/><rect x="276" y="528" fill="#0f0099"/><rect x="288" y="528" fill="#150099"/><rect x="300" y="528" fill="#1a0099"/><rect x="312" y="528" fill="#200099"/><rect x="324" y="528" fill="#250099"/><rect x="336" y="528" fill="#290099"/><rect x="348" y="528" fill="#2e0099"/><rect x="360" y="528" fill="#330099"/><rect x="372" y="528" fill="#370099"/><rect x="384" y="528" fill="#3c0099"/><rect x="396" y="528" fill="#400099"/><rect x="408" y="528" fill="#440099"/><rect x="420" y="528" fill="#480099"/><rect x="432" y="528" fill="#4d0099"/><rect x="444" y="528" fill="#510099"/><rect x="456" y="528" fill="#550099"/><rect x="468" y="528" fill="#590099"/><rect x="480" y="528" fill="#5d0099"/><rect x="492" y="528" fill="#610099"/><rect x="504" y="528" fill="#650099"/><rect x="516" y="528" fill="#690099"/><rect x="528" y="528" fill="#6d0099"/><rect x="540" y="528" fill="#700099"/><rect x="552" y="528" fill="#740099"/><rect x="564" y="528" fill="#780099"/><rect x="576" y="528" fill="#7c0099"/><rect x="588" y="528" fill="#800099"/><rect x="600" y="528" fill="#830099"/><rect x="612" y="528" fill="#870099"/><rect x="624" y="528" fill="#8b0099"/><rect x="636" y="528" fill="#8f0099"/><rect x="648" y="528" fill="#920099"/><rect x="660" y="528" fill="#960099"/><rect x="672" y="528" fill="#990097"/><rect x="684" y="528" fill="#990094"/><rect x="696" y="528" fill="#990090"/><rect x="708" y="528" fill="#99008d"/><rect x="720" y="528" fill="#99008a"/><rect x="732" y="528" fill="#990087"/><rect x="744" y="528" fill="#990084"/><rect x="756" y="528" fill="#990082"/><rect x="768" y="528" fill="#99007f"/><rect x="780" y="528" fill="#99007c"/><rect x="792" y="528" fill="#99007a"/><rect x="804" y="528" fill="#990078"/><rect x="816" y="528" fill="#990076"/><rect x="828" y="528" fill="#990073"/><rect x="840" y="528" fill="#990071"/><rect x="852" y="528" fill="#99006f"/><rect x="864" y="528" fill="#99006d"/><rect x="0" y="540" fill="#001c99"/><rect x="12" y="540" fill="#001b99"/><rect x="24" y="540" fill="#001a99"/><rect x="36" y="540" fill="#001899"/><rect x="48" y="540" fill="#001799"/><rect x="60" y="540" fill="#001599"/><rect x="72" y="540" fill="#001499"/><rect x="84" y="540" fill="#001299"/><rect x="96" y="540" fill="#001199"/><rect x="108" y="540" fill="#000f99"/><rect x="120" y="540" fill="#000d99"/><rect x="132" y="540" fill="#000c99"/><rect x="144" y="540" fill="#000a99"/><rect x="156" y="540" fill="#000899"/><rect x="168" y="540" fill="#000699"/><rect x="180" y="540" fill="#000399"/><rect x="192" y="540" fill="#000099"/><rect x="204" y="540" fill="#000099"/><rect x="216" y="540" fill="#000099"/><rect x="228" y="540" fill="#000099"/><rect x="240" y="540" fill="#000099"/><rect x="252" y="540" fill="#000099"/><rect x="264" y="540" fill="#070099"/><rect x="276" y="540" fill="#0d0099"/><rect x="288" y="540" fill="#130099"/><rect x="300" y="540" fill="#190099"/><rect x="312" y="540" fill="#1e0099"/><rect x="324" y="540" fill="#230099"/><rect x="336" y="540" fill="#280099"/><rect x="348" y="540" fill="#2d0099"/><rect x="360" y="540" fill="#310099"/><rect x="372" y="540" fill="#350099"/><rect x="384" y="540" fill="#3a0099"/><rect x="396" y="540" fill="#3e0099"/><rect x="408" y="540" fill="#420099"/><rect x="420" y="540" fill="#460099"/><rect x="432" y="540" fill="#4a0099"/><rect x="444" y="540" fill="#4f0099"/><rect x="456" y="540" fill="#530099"/><rect x="468" y="540" fill="#560099"/><rect x="480" y="540" fill="#5a0099"/><rect x="492" y="540" fill="#5e0099"/><rect x="504" y="540" fill="#620099"/><rect x="516" y="540" fill="#660099"/><rect x="528" y="540" fill="#6a0099"/><rect x="540" y="540" fill="#6e0099"/><rect x="552" y="540" fill="#710099"/><rect x="564" y="540" fill="#750099"/><rect x="576" y="540" fill="#790099"/><rect x="588" y="540" fill="#7d0099"/><rect x="600" y="540" fill="#800099"/><rect x="612" y="540" fill="#840099"/><rect x="624" y="540" fill="#880099"/><rect x="636" y="540" fill="#8b0099"/><rect x="648" y="540" fill="#8f0099"/><rect x="660" y="540" fill="#930099"/><rect x="672" y="540" fill="#960099"/><rect x="684" y="540" fill="#990097"/><rect x="696" y="540" fill="#990094"/><rect x="708" y="540" fill="#990090"/><rect x="720" y="540" fill="#99008d"/><rect x="732" y="540" fill="#99008a"/><rect x="744" y="540" fill="#990087"/><rect x="756" y="540" fill="#990085"/><rect x="768" y="540" fill="#990082"/><rect x="780" y="540" fill="#99007f"/><rect x="792" y="540" fill="#99007d"/><rect x="804" y="540" fill="#99007b"/><rect x="816" y="540" fill="#990078"/><rect x="828" y="540" fill="#990076"/><rect x="840" y="540" fill="#990074"/><rect x="852" y="540" fill="#990072"/><rect x="864" y="540" fill="#990070"/><rect x="0" y="552" fill="#001b99"/><rect x="12" y="552" fill="#001999"/><rect x="24" y="552" fill="#001899"/><rect x="36" y="552" fill="#001699"/><rect x="48" y="552" fill="#001599"/><rect x="60" y="552" fill="#001499"/><rect x="72" y="552" fill="#001299"/><rect x="84" y="552" fill="#001099"/><rect x="96" y="552" fill="#000f99"/><rect x="108" y="552" fill="#000d99"/><rect x="120" y="552" fill="#000b99"/><rect x="132" y="552" fill="#000a99"/><rect x="144" y="552" fill="#000899"/><rect x="156" y="552" fill="#000699"/><rect x="168" y="552" fill="#000399"/><rect x="180" y="552" fill="#000099"/><rect x="192" y="552" fill="#000099"/><rect x="204" y="552" fill="#000099"/><rect x="216" y="552" fill="#000099"/><rect x="228" y="552" fill="#000099"/><rect x="240" y="552" fill="#000099"/><rect x="252" y="552" fill="#000099"/><rect x="264" y="552" fill="#050099"/><rect x="276" y="552" fill="#0c0099"/><rect x="288" y="552" fill="#120099"/><rect x="300" y="552" fill="#180099"/><rect x="312" y="552" fill="#1d0099"/><rect x="324" y="552" fill="#220099"/><rect x="336" y="552" fill="#260099"/><rect x="348" y="552" fill="#2b0099"/><rect x="360" y="552" fill="#2f0099"/><rect x="372" y="552" fill="#340099"/><rect x="384" y="552" fill="#380099"/><rect x="396" y="552" fill="#3c0099"/><rect x="408" y="552" fill="#400099"/><rect x="420" y="552" fill="#440099"/><rect x="432" y="552" fill="#480099"/><rect x="444" y="552" fill="#4c0099"/><rect x="456" y="552" fill="#500099"/><rect x="468" y="552" fill="#540099"/><rect x="480" y="552" fill="#580099"/><rect x="492" y="552" fill="#5c0099"/><rect x="504" y="552" fill="#600099"/><rect x="516" y="552" fill="#630099"/><rect x="528" y="552" fill="#670099"/><rect x="540" y="552" fill="#6b0099"/><rect x="552" y="552" fill="#6f0099"/><rect x="564" y="552" fill="#720099"/><rect x="576" y="552" fill="#760099"/><rect x="588" y="552" fill="#7a0099"/><rect x="600" y="552" fill="#7d0099"/><rect x="612" y="552" fill="#810099"/><rect x="624" y="552" fill="#840099"/><rect x="636" y="552" fill="#880099"/><rect x="648" y="552" fill="#8c0099"/><rect x="660" y="552" fill="#8f0099"/><rect x="672" y="552" fill="#930099"/><rect x="684" y="552" fill="#960099"/><rect x="696" y="552" fill="#990097"/><rect x="708" y="552" fill="#990094"/><rect x="720" y="552" fill="#990091"/><rect x="732" y="552" fill="#99008e"/><rect x="744" y="552" fill="#99008b"/><rect x="756" y="552" fill="#990088"/><rect x="768" y="552" fill="#990085"/><rect x="780" y="552" fill="#990082"/><rect x="792" y="552" fill="#990080"/><rect x="804" y="552" fill="#99007e"/><rect x="816" y="552" fill="#99007b"/><rect x="828" y="552" fill="#990079"/><rect x="840" y="552" fill="#990077"/><rect x="852" y="552" fill="#990075"/><rect x="864" y="552" fill="#990073"/><rect x="0" y="564" fill="#001999"/><rect x="12" y="564" fill="#001799"/><rect x="24" y="564" fill="#001699"/><rect x="36" y="564" fill="#001599"/><rect x="48" y="564" fill="#001399"/><rect x="60" y="564" fill="#001299"/><rect x="72" y="564" fill="#001099"/><rect x="84" y="564" fill="#000f99"/><rect x="96" y="564" fill="#000d99"/><rect x="108" y="564" fill="#000b99"/><rect x="120" y="564" fill="#000999"/><rect x="132" y="564" fill="#000899"/><rect x="144" y="564" fill="#000599"/><rect x="156" y="564" fill="#000399"/><rect x="168" y="564" fill="#000099"/><rect x="180" y="564" fill="#000099"/><rect x="192" y="564" fill="#000099"/><rect x="204" y="564" fill="#000099"/><rect x="216" y="564" fill="#000099"/><rect x="228" y="564" fill="#000099"/><rect x="240" y="564" fill="#000099"/><rect x="252" y="564" fill="#000099"/><rect x="264" y="564" fill="#040099"/><rect x="276" y="564" fill="#0b0099"/><rect x="288" y="564" fill="#110099"/><rect x="300" y="564" fill="#160099"/><rect x="312" y="564" fill="#1b0099"/><rect x="324" y="564" fill="#200099"/><rect x="336" y="564" fill="#250099"/><rect x="348" y="564" fill="#290099"/><rect x="360" y="564" fill="#2e0099"/><rect x="372" y="564" fill="#320099"/><rect x="384" y="564" fill="#360099"/><rect x="396" y="564" fill="#3a0099"/><rect x="408" y="564" fill="#3f0099"/><rect x="420" y="564" fill="#430099"/><rect x="432" y="564" fill="#460099"/><rect x="444" y="564" fill="#4a0099"/><rect x="456" y="564" fill="#4e0099"/><rect x="468" y="564" fill="#520099"/><rect x="480" y="564" fill="#560099"/><rect x="492" y="564" fill="#5a0099"/><rect x="504" y="564" fill="#5d0099"/><rect x="516" y="564" fill="#610099"/><rect x="528" y="564" fill="#650099"/><rect x="540" y="564" fill="#680099"/><rect x="552" y="564" fill="#6c0099"/><rect x="564" y="564" fill="#700099"/><rect x="576" y="564" fill="#730099"/><rect x="588" y="564" fill="#770099"/><rect x="600" y="564" fill="#7a0099"/><rect x="612" y="564" fill="#7e0099"/><rect x="624" y="564" fill="#810099"/><rect x="636" y="564" fill="#850099"/><rect x="648" y="564" fill="#880099"/><rect x="660" y="564" fill="#8c0099"/><rect x="672" y="564" fill="#8f0099"/><rect x="684" y="564" fill="#930099"/><rect x="696" y="564" fill="#960099"/><rect x="708" y="564" fill="#990097"/><rect x="720" y="564" fill="#990094"/><rect x="732" y="564" fill="#990091"/><rect x="744" y="564" fill="#99008e"/><rect x="756" y="564" fill="#99008b"/><rect x="768" y="564" fill="#990088"/><rect x="780" y="564" fill="#990085"/><rect x="792" y="564" fill="#990083"/><rect x="804" y="564" fill="#990080"/><rect x="816" y="564" fill="#99007e"/><rect x="828" y="564" fill="#99007c"/><rect x="840" y="564" fill="#99007a"/><rect x="852" y="564" fill="#990077"/><rect x="864" y="564" fill="#990075"/><rect x="0" y="576" fill="#001799"/><rect x="12" y="576" fill="#001699"/><rect x="24" y="576" fill="#001499"/><rect x="36" y="576" fill="#001399"/><rect x="48" y="576" fill="#001199"/><rect x="60" y="576" fill="#001099"/><rect x="72" y="576" fill="#000e99"/><rect x="84" y="576" fill="#000d99"/><rect x="96" y="576" fill="#000b99"/><rect x="108" y="576" fill="#000999"/><rect x="120" y="576" fill="#000799"/><rect x="132" y="576" fill="#000599"/><rect x="144" y="576" fill="#000399"/><rect x="156" y="576" fill="#000099"/><rect x="168" y="576" fill="#000099"/><rect x="180" y="576" fill="#000099"/><rect x="192" y="576" fill="#000099"/><rect x="204" y="576" fill="#000099"/><rect x="216" y="576" fill="#000099"/><rect x="228" y="576" fill="#000099"/><rect x="240" y="576" fill="#000099"/><rect x="252" y="576" fill="#000099"/><rect x="264" y="576" fill="#020099"/><rect x="276" y="576" fill="#0a0099"/><rect x="288" y="576" fill="#100099"/><rect x="300" y="576" fill="#150099"/><rect x="312" y="576" fill="#1a0099"/><rect x="324" y="576" fill="#1f0099"/><rect x="336" y="576" fill="#240099"/><rect x="348" y="576" fill="#280099"/><rect x="360" y="576" fill="#2c0099"/><rect x="372" y="576" fill="#310099"/><rect x="384" y="576" fill="#350099"/><rect x="396" y="576" fill="#390099"/><rect x="408" y="576" fill="#3d0099"/><rect x="420" y="576" fill="#410099"/><rect x="432" y="576" fill="#450099"/><rect x="444" y="576" fill="#480099"/><rect x="456" y="576" fill="#4c0099"/><rect x="468" y="576" fill="#500099"/><rect x="480" y="576" fill="#540099"/><rect x="492" y="576" fill="#570099"/><rect x="504" y="576" fill="#5b0099"/><rect x="516" y="576" fill="#5f0099"/><rect x="528" y="576" fill="#620099"/><rect x="540" y="576" fill="#660099"/><rect x="552" y="576" fill="#690099"/><rect x="564" y="576" fill="#6d0099"/><rect x="576" y="576" fill="#700099"/><rect x="588" y="576" fill="#740099"/><rect x="600" y="576" fill="#770099"/><rect x="612" y="576" fill="#7b0099"/><rect x="624" y="576" fill="#7e0099"/><rect x="636" y="576" fill="#820099"/><rect x="648" y="576" fill="#850099"/><rect x="660" y="576" fill="#890099"/><rect x="672" y="576" fill="#8c0099"/><rect x="684" y="576" fill="#8f0099"/><rect x="696" y="576" fill="#930099"/><rect x="708" y="576" fill="#960099"/><rect x="720" y="576" fill="#990097"/><rect x="732" y="576" fill="#990094"/><rect x="744" y="576" fill="#990091"/><rect x="756" y="576" fill="#99008e"/><rect x="768" y="576" fill="#99008b"/><rect x="780" y="576" fill="#990088"/><rect x="792" y="576" fill="#990086"/><rect x="804" y="576" fill="#990083"/><rect x="816" y="576" fill="#990081"/><rect x="828" y="576" fill="#99007f"/><rect x="840" y="576" fill="#99007c"/><rect x="852" y="576" fill="#99007a"/><rect x="864" y="576" fill="#990078"/><rect x="0" y="588" fill="#001599"/><rect x="12" y="588" fill="#001499"/><rect x="24" y="588" fill="#001399"/><rect x="36" y="588" fill="#001199"/><rect x="48" y="588" fill="#001099"/><rect x="60" y="588" fill="#000e99"/><rect x="72" y="588" fill="#000d99"/><rect x="84" y="588" fill="#000b99"/><rect x="96" y="588" fill="#000999"/><rect x="108" y="588" fill="#000799"/><rect x="120" y="588" fill="#000599"/><rect x="132" y="588" fill="#000399"/><rect x="144" y="588" fill="#000099"/><rect x="156" y="588" fill="#000099"/><rect x="168" y="588" fill="#000099"/><rect x="180" y="588" fill="#000099"/><rect x="192" y="588" fill="#000099"/><rect x="204" y="588" fill="#000099"/><rect x="216" y="588" fill="#000099"/><rect x="228" y="588" fill="#000099"/><rect x="240" y="588" fill="#000099"/><rect x="252" y="588" fill="#000099"/><rect x="264" y="588" fill="#000099"/><rect x="276" y="588" fill="#080099"/><rect x="288" y="588" fill="#0f0099"/><rect x="300" y="588" fill="#140099"/><rect x="312" y="588" fill="#190099"/><rect x="324" y="588" fill="#1e0099"/><rect x="336" y="588" fill="#220099"/><rect x="348" y="588" fill="#270099"/><rect x="360" y="588" fill="#2b0099"/><rect x="372" y="588" fill="#2f0099"/><rect x="384" y="588" fill="#330099"/><rect x="396" y="588" fill="#370099"/><rect x="408" y="588" fill="#3b0099"/><rect x="420" y="588" fill="#3f0099"/><rect x="432" y="588" fill="#430099"/><rect x="444" y="588" fill="#470099"/><rect x="456" y="588" fill="#4a0099"/><rect x="468" y="588" fill="#4e0099"/><rect x="480" y="588" fill="#520099"/><rect x="492" y="588" fill="#550099"/><rect x="504" y="588" fill="#590099"/><rect x="516" y="588" fill="#5c0099"/><rect x="528" y="588" fill="#600099"/><rect x="540" y="588" fill="#630099"/><rect x="552" y="588" fill="#670099"/><rect x="564" y="588" fill="#6a0099"/><rect x="576" y="588" fill="#6e0099"/><rect x="588" y="588" fill="#710099"/><rect x="600" y="588" fill="#750099"/><rect x="612" y="588" fill="#780099"/><rect x="624" y="588" fill="#7c0099"/><rect x="636" y="588" fill="#7f0099"/><rect x="648" y="588" fill="#820099"/><rect x="660" y="588" fill="#860099"/><rect x="672" y="588" fill="#890099"/><rect x="684" y="588" fill="#8c0099"/><rect x="696" y="588" fill="#900099"/><rect x="708" y="588" fill="#930099"/><rect x="720" y="588" fill="#960099"/><rect x="732" y="588" fill="#990097"/><rect x="744" y="588" fill="#990094"/><rect x="756" y="588" fill="#990091"/><rect x="768" y="588" fill="#99008e"/><rect x="780" y="588" fill="#99008b"/><rect x="792" y="588" fill="#990089"/><rect x="804" y="588" fill="#990086"/><rect x="816" y="588" fill="#990084"/><rect x="828" y="588" fill="#990081"/><rect x="840" y="588" fill="#99007f"/><rect x="852" y="588" fill="#99007d"/><rect x="864" y="588" fill="#99007b"/><rect x="0" y="600" fill="#001499"/><rect x="12" y="600" fill="#001299"/><rect x="24" y="600" fill="#001199"/><rect x="36" y="600" fill="#000f99"/><rect x="48" y="600" fill="#000e99"/><rect x="60" y="600" fill="#000c99"/><rect x="72" y="600" fill="#000b99"/><rect x="84" y="600" fill="#000999"/><rect x="96" y="600" fill="#000799"/><rect x="108" y="600" fill="#000599"/><rect x="120" y="600" fill="#000399"/><rect x="132" y="600" fill="#000099"/><rect x="144" y="600" fill="#000099"/><rect x="156" y="600" fill="#000099"/><rect x="168" y="600" fill="#000099"/><rect x="180" y="600" fill="#000099"/><rect x="192" y="600" fill="#000099"/><rect x="204" y="600" fill="#000099"/><rect x="216" y="600" fill="#000099"/><rect x="228" y="600" fill="#000099"/><rect x="240" y="600" fill="#000099"/><rect x="252" y="600" fill="#000099"/><rect x="264" y="600" fill="#000099"/><rect x="276" y="600" fill="#070099"/><rect x="288" y="600" fill="#0d0099"/><rect x="300" y="600" fill="#130099"/><rect x="312" y="600" fill="#180099"/><rect x="324" y="600" fill="#1c0099"/><rect x="336" y="600" fill="#210099"/><rect x="348" y="600" fill="#250099"/><rect x="360" y="600" fill="#2a0099"/><rect x="372" y="600" fill="#2e0099"/><rect x="384" y="600" fill="#320099"/><rect x="396" y="600" fill="#360099"/><rect x="408" y="600" fill="#390099"/><rect x="420" y="600" fill="#3d0099"/><rect x="432" y="600" fill="#410099"/><rect x="444" y="600" fill="#450099"/><rect x="456" y="600" fill="#480099"/><rect x="468" y="600" fill="#4c0099"/><rect x="480" y="600" fill="#500099"/><rect x="492" y="600" fill="#530099"/><rect x="504" y="600" fill="#570099"/><rect x="516" y="600" fill="#5a0099"/><rect x="528" y="600" fill="#5e0099"/><rect x="540" y="600" fill="#610099"/><rect x="552" y="600" fill="#650099"/><rect x="564" y="600" fill="#680099"/><rect x="576" y="600" fill="#6b0099"/><rect x="588" y="600" fill="#6f0099"/><rect x="600" y="600" fill="#720099"/><rect x="612" y="600" fill="#750099"/><rect x="624" y="600" fill="#790099"/><rect x="636" y="600" fill="#7c0099"/><rect x="648" y="600" fill="#7f0099"/><rect x="660" y="600" fill="#830099"/><rect x="672" y="600" fill="#860099"/><rect x="684" y="600" fill="#890099"/><rect x="696" y="600" fill="#8d0099"/><rect x="708" y="600" fill="#900099"/><rect x="720" y="600" fill="#930099"/><rect x="732" y="600" fill="#960099"/><rect x="744" y="600" fill="#990097"/><rect x="756" y="600" fill="#990094"/><rect x="768" y="600" fill="#990091"/><rect x="780" y="600" fill="#99008f"/><rect x="792" y="600" fill="#99008c"/><rect x="804" y="600" fill="#990089"/><rect x="816" y="600" fill="#990087"/><rect x="828" y="600" fill="#990084"/><rect x="840" y="600" fill="#990082"/><rect x="852" y="600" fill="#99007f"/><rect x="864" y="600" fill="#99007d"/><rect x="0" y="612" fill="#001299"/><rect x="12" y="612" fill="#001199"/><rect x="24" y="612" fill="#000f99"/><rect x="36" y="612" fill="#000e99"/><rect x="48" y="612" fill="#000c99"/><rect x="60" y="612" fill="#000b99"/><rect x="72" y="612" fill="#000999"/><rect x="84" y="612" fill="#000799"/><rect x="96" y="612" fill="#000599"/><rect x="108" y="612" fill="#000399"/><rect x="120" y="612" fill="#000099"/><rect x="132" y="612" fill="#000099"/><rect x="144" y="612" fill="#000099"/><rect x="156" y="612" fill="#000099"/><rect x="168" y="612" fill="#000099"/><rect x="180" y="612" fill="#000099"/><rect x="192" y="612" fill="#000099"/><rect x="204" y="612" fill="#000099"/><rect x="216" y="612" fill="#000099"/><rect x="228" y="612" fill="#000099"/><rect x="240" y="612" fill="#000099"/><rect x="252" y="612" fill="#000099"/><rect x="264" y="612" fill="#000099"/><rect x="276" y="612" fill="#060099"/><rect x="288" y="612" fill="#0c0099"/><rect x="300" y="612" fill="#120099"/><rect x="312" y="612" fill="#170099"/><rect x="324" y="612" fill="#1b0099"/><rect x="336" y="612" fill="#200099"/><rect x="348" y="612" fill="#240099"/><rect x="360" y="612" fill="#280099"/><rect x="372" y="612" fill="#2c0099"/><rect x="384" y="612" fill="#300099"/><rect x="396" y="612" fill="#340099"/><rect x="408" y="612" fill="#380099"/><rect x="420" y="612" fill="#3c0099"/><rect x="432" y="612" fill="#3f0099"/><rect x="444" y="612" fill="#430099"/><rect x="456" y="612" fill="#470099"/><rect x="468" y="612" fill="#4a0099"/><rect x="480" y="612" fill="#4e0099"/><rect x="492" y="612" fill="#510099"/><rect x="504" y="612" fill="#550099"/><rect x="516" y="612" fill="#580099"/><rect x="528" y="612" fill="#5c0099"/><rect x="540" y="612" fill="#5f0099"/><rect x="552" y="612" fill="#620099"/><rect x="564" y="612" fill="#660099"/><rect x="576" y="612" fill="#690099"/><rect x="588" y="612" fill="#6c0099"/><rect x="600" y="612" fill="#700099"/><rect x="612" y="612" fill="#730099"/><rect x="624" y="612" fill="#760099"/><rect x="636" y="612" fill="#790099"/><rect x="648" y="612" fill="#7d0099"/><rect x="660" y="612" fill="#800099"/><rect x="672" y="612" fill="#830099"/><rect x="684" y="612" fill="#860099"/><rect x="696" y="612" fill="#8a0099"/><rect x="708" y="612" fill="#8d0099"/><rect x="720" y="612" fill="#900099"/><rect x="732" y="612" fill="#930099"/><rect x="744" y="612" fill="#960099"/><rect x="756" y="612" fill="#990098"/><rect x="768" y="612" fill="#990094"/><rect x="780" y="612" fill="#990092"/><rect x="792" y="612" fill="#99008f"/><rect x="804" y="612" fill="#99008c"/><rect x="816" y="612" fill="#990089"/><rect x="828" y="612" fill="#990087"/><rect x="840" y="612" fill="#990084"/><rect x="852" y="612" fill="#990082"/><rect x="864" y="612" fill="#990080"/><rect x="0" y="624" fill="#001099"/><rect x="12" y="624" fill="#000f99"/><rect x="24" y="624" fill="#000d99"/><rect x="36" y="624" fill="#000c99"/><rect x="48" y="624" fill="#000a99"/><rect x="60" y="624" fill="#000999"/><rect x="72" y="624" fill="#000799"/><rect x="84" y="624" fill="#000599"/><rect x="96" y="624" fill="#000399"/><rect x="108" y="624" fill="#000099"/><rect x="120" y="624" fill="#000099"/><rect x="132" y="624" fill="#000099"/><rect x="144" y="624" fill="#000099"/><rect x="156" y="624" fill="#000099"/><rect x="168" y="624" fill="#000099"/><rect x="180" y="624" fill="#000099"/><rect x="192" y="624" fill="#000099"/><rect x="204" y="624" fill="#000099"/><rect x="216" y="624" fill="#000099"/><rect x="228" y="624" fill="#000099"/><rect x="240" y="624" fill="#000099"/><rect x="252" y="624" fill="#000099"/><rect x="264" y="624" fill="#000099"/><rect x="276" y="624" fill="#050099"/><rect x="288" y="624" fill="#0b0099"/><rect x="300" y="624" fill="#110099"/><rect x="312" y="624" fill="#150099"/><rect x="324" y="624" fill="#1a0099"/><rect x="336" y="624" fill="#1f0099"/><rect x="348" y="624" fill="#230099"/><rect x="360" y="624" fill="#270099"/><rect x="372" y="624" fill="#2b0099"/><rect x="384" y="624" fill="#2f0099"/><rect x="396" y="624" fill="#330099"/><rect x="408" y="624" fill="#360099"/><rect x="420" y="624" fill="#3a0099"/><rect x="432" y="624" fill="#3e0099"/><rect x="444" y="624" fill="#410099"/><rect x="456" y="624" fill="#450099"/><rect x="468" y="624" fill="#480099"/><rect x="480" y="624" fill="#4c0099"/><rect x="492" y="624" fill="#4f0099"/><rect x="504" y="624" fill="#530099"/><rect x="516" y="624" fill="#560099"/><rect x="528" y="624" fill="#5a0099"/><rect x="540" y="624" fill="#5d0099"/><rect x="552" y="624" fill="#600099"/><rect x="564" y="624" fill="#630099"/><rect x="576" y="624" fill="#670099"/><rect x="588" y="624" fill="#6a0099"/><rect x="600" y="624" fill="#6d0099"/><rect x="612" y="624" fill="#700099"/><rect x="624" y="624" fill="#740099"/><rect x="636" y="624" fill="#770099"/><rect x="648" y="624" fill="#7a0099"/><rect x="660" y="624" fill="#7d0099"/><rect x="672" y="624" fill="#800099"/><rect x="684" y="624" fill="#840099"/><rect x="696" y="624" fill="#870099"/><rect x="708" y="624" fill="#8a0099"/><rect x="720" y="624" fill="#8d0099"/><rect x="732" y="624" fill="#900099"/><rect x="744" y="624" fill="#930099"/><rect x="756" y="624" fill="#960099"/><rect x="768" y="624" fill="#990098"/><rect x="780" y="624" fill="#990095"/><rect x="792" y="624" fill="#990092"/><rect x="804" y="624" fill="#99008f"/><rect x="816" y="624" fill="#99008c"/><rect x="828" y="624" fill="#99008a"/><rect x="840" y="624" fill="#990087"/><rect x="852" y="624" fill="#990085"/><rect x="864" y="624" fill="#990083"/><rect x="0" y="636" fill="#000f99"/><rect x="12" y="636" fill="#000d99"/><rect x="24" y="636" fill="#000c99"/><rect x="36" y="636" fill="#000a99"/><rect x="48" y="636" fill="#000999"/><rect x="60" y="636" fill="#000799"/><rect x="72" y="636" fill="#000599"/><rect x="84" y="636" fill="#000399"/><rect x="96" y="636" fill="#000099"/><rect x="108" y="636" fill="#000099"/><rect x="120" y="636" fill="#000099"/><rect x="132" y="636" fill="#000099"/><rect x="144" y="636" fill="#000099"/><rect x="156" y="636" fill="#000099"/><rect x="168" y="636" fill="#000099"/><rect x="180" y="636" fill="#000099"/><rect x="192" y="636" fill="#000099"/><rect x="204" y="636" fill="#000099"/><rect x="216" y="636" fill="#000099"/><rect x="228" y="636" fill="#000099"/><rect x="240" y="636" fill="#000099"/><rect x="252" y="636" fill="#000099"/><rect x="264" y="636" fill="#000099"/><rect x="276" y="636" fill="#040099"/><rect x="288" y="636" fill="#0a0099"/><rect x="300" y="636" fill="#0f0099"/><rect x="312" y="636" fill="#140099"/><rect x="324" y="636" fill="#190099"/><rect x="336" y="636" fill="#1d0099"/><rect x="348" y="636" fill="#220099"/><rect x="360" y="636" fill="#260099"/><rect x="372" y="636" fill="#2a0099"/><rect x="384" y="636" fill="#2d0099"/><rect x="396" y="636" fill="#310099"/><rect x="408" y="636" fill="#350099"/><rect x="420" y="636" fill="#390099"/><rect x="432" y="636" fill="#3c0099"/><rect x="444" y="636" fill="#400099"/><rect x="456" y="636" fill="#430099"/><rect x="468" y="636" fill="#470099"/><rect x="480" y="636" fill="#4a0099"/><rect x="492" y="636" fill="#4e0099"/><rect x="504" y="636" fill="#510099"/><rect x="516" y="636" fill="#540099"/><rect x="528" y="636" fill="#580099"/><rect x="540" y="636" fill="#5b0099"/><rect x="552" y="636" fill="#5e0099"/><rect x="564" y="636" fill="#610099"/><rect x="576" y="636" fill="#650099"/><rect x="588" y="636" fill="#680099"/><rect x="600" y="636" fill="#6b0099"/><rect x="612" y="636" fill="#6e0099"/><rect x="624" y="636" fill="#710099"/><rect x="636" y="636" fill="#740099"/><rect x="648" y="636" fill="#780099"/><rect x="660" y="636" fill="#7b0099"/><rect x="672" y="636" fill="#7e0099"/><rect x="684" y="636" fill="#810099"/><rect x="696" y="636" fill="#840099"/><rect x="708" y="636" fill="#870099"/><rect x="720" y="636" fill="#8a0099"/><rect x="732" y="636" fill="#8d0099"/><rect x="744" y="636" fill="#900099"/><rect x="756" y="636" fill="#930099"/><rect x="768" y="636" fill="#960099"/><rect x="780" y="636" fill="#990098"/><rect x="792" y="636" fill="#990095"/><rect x="804" y="636" fill="#990092"/><rect x="816" y="636" fill="#99008f"/><rect x="828" y="636" fill="#99008c"/><rect x="840" y="636" fill="#99008a"/><rect x="852" y="636" fill="#990088"/><rect x="864" y="636" fill="#990085"/><rect x="0" y="648" fill="#000d99"/><rect x="12" y="648" fill="#000c99"/><rect x="24" y="648" fill="#000a99"/><rect x="36" y="648" fill="#000999"/><rect x="48" y="648" fill="#000799"/><rect x="60" y="648" fill="#000599"/><rect x="72" y="648" fill="#000399"/><rect x="84" y="648" fill="#000099"/><rect x="96" y="648" fill="#000099"/><rect x="108" y="648" fill="#000099"/><rect x="120" y="648" fill="#000099"/><rect x="132" y="648" fill="#000099"/><rect x="144" y="648" fill="#000099"/><rect x="156" y="648" fill="#000099"/><rect x="168" y="648" fill="#000099"/><rect x="180" y="648" fill="#000099"/><rect x="192" y="648" fill="#000099"/><rect x="204" y="648" fill="#000099"/><rect x="216" y="648" fill="#000099"/><rect x="228" y="648" fill="#000099"/><rect x="240" y="648" fill="#000099"/><rect x="252" y="648" fill="#000099"/><rect x="264" y="648" fill="#000099"/><rect x="276" y="648" fill="#020099"/><rect x="288" y="648" fill="#090099"/><rect x="300" y="648" fill="#0e0099"/><rect x="312" y="648" fill="#130099"/><rect x="324" y="648" fill="#180099"/><rect x="336" y="648" fill="#1c0099"/><rect x="348" y="648" fill="#200099"/><rect x="360" y="648" fill="#240099"/><rect x="372" y="648" fill="#280099"/><rect x="384" y="648" fill="#2c0099"/><rect x="396" y="648" fill="#300099"/><rect x="408" y="648" fill="#340099"/><rect x="420" y="648" fill="#370099"/><rect x="432" y="648" fill="#3b0099"/><rect x="444" y="648" fill="#3e0099"/><rect x="456" y="648" fill="#420099"/><rect x="468" y="648" fill="#450099"/><rect x="480" y="648" fill="#480099"/><rect x="492" y="648" fill="#4c0099"/><rect x="504" y="648" fill="#4f0099"/><rect x="516" y="648" fill="#520099"/><rect x="528" y="648" fill="#560099"/><rect x="540" y="648" fill="#590099"/><rect x="552" y="648" fill="#5c0099"/><rect x="564" y="648" fill="#5f0099"/><rect x="576" y="648" fill="#620099"/><rect x="588" y="648" fill="#660099"/><rect x="600" y="648" fill="#690099"/><rect x="612" y="648" fill="#6c0099"/><rect x="624" y="648" fill="#6f0099"/><rect x="636" y="648" fill="#720099"/><rect x="648" y="648" fill="#750099"/><rect x="660" y="648" fill="#780099"/><rect x="672" y="648" fill="#7b0099"/><rect x="684" y="648" fill="#7e0099"/><rect x="696" y="648" fill="#810099"/><rect x="708" y="648" fill="#840099"/><rect x="720" y="648" fill="#870099"/><rect x="732" y="648" fill="#8a0099"/><rect x="744" y="648" fill="#8d0099"/><rect x="756" y="648" fill="#900099"/><rect x="768" y="648" fill="#930099"/><rect x="780" y="648" fill="#960099"/><rect x="792" y="648" fill="#990098"/><rect x="804" y="648" fill="#990095"/><rect x="816" y="648" fill="#990092"/><rect x="828" y="648" fill="#99008f"/><rect x="840" y="648" fill="#99008d"/><rect x="852" y="648" fill="#99008a"/><rect x="864" y="648" fill="#990088"/><rect x="0" y="660" fill="#000c99"/><rect x="12" y="660" fill="#000a99"/><rect x="24" y="660" fill="#000899"/><rect x="36" y="660" fill="#000799"/><rect x="48" y="660" fill="#000599"/><rect x="60" y="660" fill="#000399"/><rect x="72" y="660" fill="#000199"/><rect x="84" y="660" fill="#000099"/><rect x="96" y="660" fill="#000099"/><rect x="108" y="660" fill="#000099"/><rect x="120" y="660" fill="#000099"/><rect x="132" y="660" fill="#000099"/><rect x="144" y="660" fill="#000099"/><rect x="156" y="660" fill="#000099"/><rect x="168" y="660" fill="#000099"/><rect x="180" y="660" fill="#000099"/><rect x="192" y="660" fill="#000099"/><rect x="204" y="660" fill="#000099"/><rect x="216" y="660" fill="#000099"/><rect x="228" y="660" fill="#000099"/><rect x="240" y="660" fill="#000099"/><rect x="252" y="660" fill="#000099"/><rect x="264" y="660" fill="#000099"/><rect x="276" y="660" fill="#010099"/><rect x="288" y="660" fill="#080099"/><rect x="300" y="660" fill="#0d0099"/><rect x="312" y="660" fill="#120099"/><rect x="324" y="660" fill="#170099"/><rect x="336" y="660" fill="#1b0099"/><rect x="348" y="660" fill="#1f0099"/><rect x="360" y="660" fill="#230099"/><rect x="372" y="660" fill="#270099"/><rect x="384" y="660" fill="#2b0099"/><rect x="396" y="660" fill="#2f0099"/><rect x="408" y="660" fill="#320099"/><rect x="420" y="660" fill="#360099"/><rect x="432" y="660" fill="#390099"/><rect x="444" y="660" fill="#3d0099"/><rect x="456" y="660" fill="#400099"/><rect x="468" y="660" fill="#430099"/><rect x="480" y="660" fill="#470099"/><rect x="492" y="660" fill="#4a0099"/><rect x="504" y="660" fill="#4d0099"/><rect x="516" y="660" fill="#510099"/><rect x="528" y="660" fill="#540099"/><rect x="540" y="660" fill="#570099"/><rect x="552" y="660" fill="#5a0099"/><rect x="564" y="660" fill="#5d0099"/><rect x="576" y="660" fill="#600099"/><rect x="588" y="660" fill="#640099"/><rect x="600" y="660" fill="#670099"/><rect x="612" y="660" fill="#6a0099"/><rect x="624" y="660" fill="#6d0099"/><rect x="636" y="660" fill="#700099"/><rect x="648" y="660" fill="#730099"/><rect x="660" y="660" fill="#760099"/><rect x="672" y="660" fill="#790099"/><rect x="684" y="660" fill="#7c0099"/><rect x="696" y="660" fill="#7f0099"/><rect x="708" y="660" fill="#820099"/><rect x="720" y="660" fill="#850099"/><rect x="732" y="660" fill="#880099"/><rect x="744" y="660" fill="#8b0099"/><rect x="756" y="660" fill="#8e0099"/><rect x="768" y="660" fill="#910099"/><rect x="780" y="660" fill="#940099"/><rect x="792" y="660" fill="#960099"/><rect x="804" y="660" fill="#990098"/><rect x="816" y="660" fill="#990095"/><rect x="828" y="660" fill="#990092"/><rect x="840" y="660" fill="#99008f"/><rect x="852" y="660" fill="#99008d"/><rect x="864" y="660" fill="#99008b"/></g><g clip-path="url(#tc)"><rect x="180" y="36" fill="#16ff00"/><rect x="192" y="36" fill="#34ff00"/><rect x="204" y="36" fill="#4eff00"/><rect x="216" y="36" fill="#67ff00"/><rect x="228" y="36" fill="#80ff00"/><rect x="180" y="48" fill="#10ff20"/><rect x="192" y="48" fill="#30ff1e"/><rect x="204" y="48" fill="#4cff1c"/><rect x="216" y="48" fill="#65ff1a"/><rect x="228" y="48" fill="#7fff17"/><rect x="240" y="48" fill="#98ff14"/><rect x="252" y="48" fill="#b1ff11"/><rect x="264" y="48" fill="#caff0d"/><rect x="276" y="48" fill="#e5ff09"/><rect x="288" y="48" fill="#fffe04"/><rect x="300" y="48" fill="#ffe500"/><rect x="312" y="48" fill="#ffd000"/><rect x="324" y="48" fill="#ffbe00"/><rect x="336" y="48" fill="#ffae00"/><rect x="348" y="48" fill="#ffa000"/><rect x="360" y="48" fill="#ff9400"/><rect x="180" y="60" fill="#0aff3b"/><rect x="192" y="60" fill="#2cff3a"/><rect x="204" y="60" fill="#49ff39"/><rect x="216" y="60" fill="#64ff37"/><rect x="228" y="60" fill="#7eff36"/><rect x="240" y="60" fill="#97ff35"/><rect x="252" y="60" fill="#b1ff33"/><rect x="264" y="60" fill="#ccff31"/><rect x="276" y="60" fill="#e6ff30"/><rect x="288" y="60" fill="#fffb2d"/><rect x="300" y="60" fill="#ffe227"/><rect x="312" y="60" fill="#ffcd21"/><rect x="324" y="60" fill="#ffbb1c"/><rect x="336" y="60" fill="#ffab18"/><rect x="348" y="60" fill="#ff9d14"/><rect x="360" y="60" fill="#ff9111"/><rect x="372" y="60" fill="#ff850d"/><rect x="384" y="60" fill="#ff7b0a"/><rect x="396" y="60" fill="#ff7207"/><rect x="408" y="60" fill="#ff6a04"/><rect x="420" y="60" fill="#ff6201"/><rect x="432" y="60" fill="#ff5b00"/><rect x="444" y="60" fill="#ff5400"/><rect x="456" y="60" fill="#ff4e00"/><rect x="468" y="60" fill="#ff4800"/><rect x="480" y="60" fill="#ff4200"/><rect x="492" y="60" fill="#ff3d00"/><rect x="180" y="72" fill="#02ff54"/><rect x="192" y="72" fill="#28ff53"/><rect x="204" y="72" fill="#46ff53"/><rect x="216" y="72" fill="#62ff52"/><rect x="228" y="72" fill="#7cff52"/><rect x="240" y="72" fill="#97ff51"/><rect x="252" y="72" fill="#b2ff51"/><rect x="264" y="72" fill="#cdff50"/><rect x="276" y="72" fill="#e8ff4f"/><rect x="288" y="72" fill="#fff84d"/><rect x="300" y="72" fill="#ffdf44"/><rect x="312" y="72" fill="#ffca3d"/><rect x="324" y="72" fill="#ffb837"/><rect x="336" y="72" fill="#ffa831"/><rect x="348" y="72" fill="#ff9a2d"/><rect x="360" y="72" fill="#ff8d28"/><rect x="372" y="72" fill="#ff8224"/><rect x="384" y="72" fill="#ff7821"/><rect x="396" y="72" fill="#ff6f1e"/><rect x="408" y="72" fill="#ff671b"/><rect x="420" y="72" fill="#ff5f18"/><rect x="432" y="72" fill="#ff5815"/><rect x="444" y="72" fill="#ff5113"/><rect x="456" y="72" fill="#ff4b11"/><rect x="468" y="72" fill="#ff450e"/><rect x="480" y="72" fill="#ff3f0c"/><rect x="492" y="72" fill="#ff3a0a"/><rect x="504" y="72" fill="#ff3508"/><rect x="516" y="72" fill="#ff3006"/><rect x="528" y="72" fill="#ff2c04"/><rect x="540" y="72" fill="#ff2702"/><rect x="552" y="72" fill="#ff2300"/><rect x="564" y="72" fill="#ff1f00"/><rect x="576" y="72" fill="#ff1b00"/><rect x="588" y="72" fill="#ff1700"/><rect x="600" y="72" fill="#ff1300"/><rect x="612" y="72" fill="#ff0f00"/><rect x="180" y="84" fill="#00ff6c"/><rect x="192" y="84" fill="#24ff6c"/><rect x="204" y="84" fill="#43ff6c"/><rect x="216" y="84" fill="#60ff6c"/><rect x="228" y="84" fill="#7bff6c"/><rect x="240" y="84" fill="#96ff6d"/><rect x="252" y="84" fill="#b2ff6d"/><rect x="264" y="84" fill="#ceff6d"/><rect x="276" y="84" fill="#eaff6d"/><rect x="288" y="84" fill="#fff66a"/><rect x="300" y="84" fill="#ffdc5f"/><rect x="312" y="84" fill="#ffc756"/><rect x="324" y="84" fill="#ffb44e"/><rect x="336" y="84" fill="#ffa548"/><rect x="348" y="84" fill="#ff9742"/><rect x="360" y="84" fill="#ff8a3d"/><rect x="372" y="84" fill="#ff7f38"/><rect x="384" y="84" fill="#ff7534"/><rect x="396" y="84" fill="#ff6c30"/><rect x="408" y="84" fill="#ff632c"/><rect x="420" y="84" fill="#ff5c29"/><rect x="432" y="84" fill="#ff5426"/><rect x="444" y="84" fill="#ff4e23"/><rect x="456" y="84" fill="#ff4821"/><rect x="468" y="84" fill="#ff421e"/><rect x="480" y="84" fill="#ff3c1c"/><rect x="492" y="84" fill="#ff371a"/><rect x="504" y="84" fill="#ff3218"/><rect x="516" y="84" fill="#ff2d16"/><rect x="528" y="84" fill="#ff2914"/><rect x="540" y="84" fill="#ff2412"/><rect x="552" y="84" fill="#ff2011"/><rect x="564" y="84" fill="#ff1c0f"/><rect x="576" y="84" fill="#ff180d"/><rect x="588" y="84" fill="#ff140c"/><rect x="600" y="84" fill="#ff100a"/><rect x="612" y="84" fill="#ff0b09"/><rect x="624" y="84" fill="#ff0707"/><rect x="636" y="84" fill="#ff0206"/><rect x="180" y="96" fill="#00ff83"/><rect x="192" y="96" fill="#1fff84"/><rect x="204" y="96" fill="#40ff85"/><rect x="216" y="96" fill="#5dff85"/><rect x="228" y="96" fill="#7aff86"/><rect x="240" y="96" fill="#96ff87"/><rect x="252" y="96" fill="#b2ff88"/><rect x="264" y="96" fill="#cfff8a"/><rect x="276" y="96" fill="#edff8b"/><rect x="288" y="96" fill="#fff385"/><rect x="300" y="96" fill="#ffd979"/><rect x="312" y="96" fill="#ffc36e"/><rect x="324" y="96" fill="#ffb164"/><rect x="336" y="96" fill="#ffa15c"/><rect x="348" y="96" fill="#ff9355"/><rect x="360" y="96" fill="#ff874f"/><rect x="372" y="96" fill="#ff7c4a"/><rect x="384" y="96" fill="#ff7245"/><rect x="396" y="96" fill="#ff6840"/><rect x="408" y="96" fill="#ff603c"/><rect x="420" y="96" fill="#ff5839"/><rect x="432" y="96" fill="#ff5135"/><rect x="444" y="96" fill="#ff4b32"/><rect x="456" y="96" fill="#ff442f"/><rect x="468" y="96" fill="#ff3e2c"/><rect x="480" y="96" fill="#ff392a"/><rect x="492" y="96" fill="#ff3427"/><rect x="504" y="96" fill="#ff2f25"/><rect x="516" y="96" fill="#ff2a23"/><rect x="528" y="96" fill="#ff2521"/><rect x="540" y="96" fill="#ff211f"/><rect x="552" y="96" fill="#ff1d1d"/><rect x="564" y="96" fill="#ff181b"/><rect x="576" y="96" fill="#ff1419"/><rect x="588" y="96" fill="#ff1018"/><rect x="600" y="96" fill="#ff0c16"/><rect x="612" y="96" fill="#ff0715"/><rect x="624" y="96" fill="#ff0213"/><rect x="636" y="96" fill="#ff0012"/><rect x="180" y="108" fill="#00ff9a"/><rect x="192" y="108" fill="#1aff9c"/><rect x="204" y="108" fill="#3cff9d"/><rect x="216" y="108" fill="#5bff9f"/><rect x="228" y="108" fill="#78ffa0"/><rect x="240" y="108" fill="#95ffa2"/><rect x="252" y="108" fill="#b3ffa4"/><rect x="264" y="108" fill="#d0ffa6"/><rect x="276" y="108" fill="#efffa8"/><rect x="288" y="108" fill="#fff0a1"/><rect x="300" y="108" fill="#ffd691"/><rect x="312" y="108" fill="#ffc085"/><rect x="324" y="108" fill="#ffae7a"/><rect x="336" y="108" fill="#ff9e70"/><rect x="348" y="108" fill="#ff9068"/><rect x="360" y="108" fill="#ff8361"/><rect x="372" y="108" fill="#ff785b"/><rect x="384" y="108" fill="#ff6e55"/><rect x="396" y="108" fill="#ff6550"/><rect x="408" y="108" fill="#ff5d4b"/><rect x="420" y="108" fill="#ff5547"/><rect x="432" y="108" fill="#ff4e43"/><rect x="444" y="108" fill="#ff473f"/><rect x="456" y="108" fill="#ff413c"/><rect x="468" y="108" fill="#ff3b39"/><rect x="480" y="108" fill="#ff3636"/><rect x="492" y="108" fill="#ff3033"/><rect x="504" y="108" fill="#ff2b31"/><rect x="516" y="108" fill="#ff272e"/><rect x="528" y="108" fill="#ff222c"/><rect x="540" y="108" fill="#ff1e2a"/><rect x="552" y="108" fill="#ff1928"/><rect x="564" y="108" fill="#ff1526"/><rect x="576" y="108" fill="#ff1124"/><rect x="588" y="108" fill="#ff0c22"/><rect x="600" y="108" fill="#ff0821"/><rect x="612" y="108" fill="#ff021f"/><rect x="624" y="108" fill="#ff001d"/><rect x="192" y="120" fill="#14ffb4"/><rect x="204" y="120" fill="#39ffb6"/><rect x="216" y="120" fill="#58ffb8"/><rect x="228" y="120" fill="#77ffbb"/><rect x="240" y="120" fill="#95ffbd"/><rect x="252" y="120" fill="#b3ffc0"/><rect x="264" y="120" fill="#d2ffc3"/><rect x="276" y="120" fill="#f1ffc6"/><rect x="288" y="120" fill="#ffecbb"/><rect x="300" y="120" fill="#ffd2aa"/><rect x="312" y="120" fill="#ffbd9b"/><rect x="324" y="120" fill="#ffaa8f"/><rect x="336" y="120" fill="#ff9a84"/><rect x="348" y="120" fill="#ff8c7b"/><rect x="360" y="120" fill="#ff8073"/><rect x="372" y="120" fill="#ff756b"/><rect x="384" y="120" fill="#ff6b65"/><rect x="396" y="120" fill="#ff625f"/><rect x="408" y="120" fill="#ff595a"/><rect x="420" y="120" fill="#ff5255"/><rect x="432" y="120" fill="#ff4a50"/><rect x="444" y="120" fill="#ff444c"/><rect x="456" y="120" fill="#ff3e49"/><rect x="468" y="120" fill="#ff3845"/><rect x="480" y="120" fill="#ff3242"/><rect x="492" y="120" fill="#ff2d3f"/><rect x="504" y="120" fill="#ff283c"/><rect x="516" y="120" fill="#ff2339"/><rect x="528" y="120" fill="#ff1f37"/><rect x="540" y="120" fill="#ff1a34"/><rect x="552" y="120" fill="#ff1632"/><rect x="564" y="120" fill="#ff1130"/><rect x="576" y="120" fill="#ff0d2e"/><rect x="588" y="120" fill="#ff082c"/><rect x="600" y="120" fill="#ff032a"/><rect x="612" y="120" fill="#ff0028"/><rect x="192" y="132" fill="#0dffcd"/><rect x="204" y="132" fill="#35ffcf"/><rect x="216" y="132" fill="#56ffd3"/><rect x="228" y="132" fill="#75ffd6"/><rect x="240" y="132" fill="#94ffd9"/><rect x="252" y="132" fill="#b4ffdd"/><rect x="264" y="132" fill="#d3ffe1"/><rect x="276" y="132" fill="#f4ffe5"/><rect x="288" y="132" fill="#ffe9d6"/><rect x="300" y="132" fill="#ffcfc2"/><rect x="312" y="132" fill="#ffb9b1"/><rect x="324" y="132" fill="#ffa6a3"/><rect x="336" y="132" fill="#ff9697"/><rect x="348" y="132" fill="#ff888d"/><rect x="360" y="132" fill="#ff7c83"/><rect x="372" y="132" fill="#ff717b"/><rect x="384" y="132" fill="#ff6774"/><rect x="396" y="132" fill="#ff5e6e"/><rect x="408" y="132" fill="#ff5668"/><rect x="420" y="132" fill="#ff4e62"/><rect x="432" y="132" fill="#ff475d"/><rect x="444" y="132" fill="#ff4059"/><rect x="456" y="132" fill="#ff3a55"/><rect x="468" y="132" fill="#ff3451"/><rect x="480" y="132" fill="#ff2f4d"/><rect x="492" y="132" fill="#ff2a4a"/><rect x="504" y="132" fill="#ff2547"/><rect x="516" y="132" fill="#ff2044"/><rect x="528" y="132" fill="#ff1b41"/><rect x="540" y="132" fill="#ff163e"/><rect x="552" y="132" fill="#ff123c"/><rect x="564" y="132" fill="#ff0d3a"/><rect x="576" y="132" fill="#ff0837"/><rect x="588" y="132" fill="#ff0335"/><rect x="600" y="132" fill="#ff0033"/><rect x="192" y="144" fill="#04ffe6"/><rect x="204" y="144" fill="#30ffe9"/><rect x="216" y="144" fill="#53ffed"/><rect x="228" y="144" fill="#74fff1"/><rect x="240" y="144" fill="#94fff6"/><rect x="252" y="144" fill="#b4fffb"/><rect x="264" y="144" fill="#d4fdff"/><rect x="276" y="144" fill="#f1f8ff"/><rect x="288" y="144" fill="#ffe6f1"/><rect x="300" y="144" fill="#ffcbda"/><rect x="312" y="144" fill="#ffb5c7"/><rect x="324" y="144" fill="#ffa3b7"/><rect x="336" y="144" fill="#ff93aa"/><rect x="348" y="144" fill="#ff859e"/><rect x="360" y="144" fill="#ff7894"/><rect x="372" y="144" fill="#ff6d8b"/><rect x="384" y="144" fill="#ff6383"/><rect x="396" y="144" fill="#ff5a7c"/><rect x="408" y="144" fill="#ff5275"/><rect x="420" y="144" fill="#ff4a6f"/><rect x="432" y="144" fill="#ff436a"/><rect x="444" y="144" fill="#ff3d65"/><rect x="456" y="144" fill="#ff3760"/><rect x="468" y="144" fill="#ff315c"/><rect x="480" y="144" fill="#ff2b58"/><rect x="492" y="144" fill="#ff2655"/><rect x="504" y="144" fill="#ff2151"/><rect x="516" y="144" fill="#ff1c4e"/><rect x="528" y="144" fill="#ff174b"/><rect x="540" y="144" fill="#ff1248"/><rect x="552" y="144" fill="#ff0e45"/><rect x="564" y="144" fill="#ff0943"/><rect x="576" y="144" fill="#ff0340"/><rect x="588" y="144" fill="#ff003e"/><rect x="192" y="156" fill="#00fdff"/><rect x="204" y="156" fill="#2af9ff"/><rect x="216" y="156" fill="#4df5ff"/><rect x="228" y="156" fill="#6bf0ff"/><rect x="240" y="156" fill="#88ebff"/><rect x="252" y="156" fill="#a3e6ff"/><rect x="264" y="156" fill="#bee1ff"/><rect x="276" y="156" fill="#d8dcff"/><rect x="288" y="156" fill="#f2d7ff"/><rect x="300" y="156" fill="#ffc7f2"/><rect x="312" y="156" fill="#ffb1dd"/><rect x="324" y="156" fill="#ff9fcc"/><rect x="336" y="156" fill="#ff8fbd"/><rect x="348" y="156" fill="#ff81b0"/><rect x="360" y="156" fill="#ff74a5"/><rect x="372" y="156" fill="#ff699b"/><rect x="384" y="156" fill="#ff5f92"/><rect x="396" y="156" fill="#ff568a"/><rect x="408" y="156" fill="#ff4e83"/><rect x="420" y="156" fill="#ff477c"/><rect x="432" y="156" fill="#ff4076"/><rect x="444" y="156" fill="#ff3971"/><rect x="456" y="156" fill="#ff336c"/><rect x="468" y="156" fill="#ff2d67"/><rect x="480" y="156" fill="#ff2763"/><rect x="492" y="156" fill="#ff225f"/><rect x="504" y="156" fill="#ff1d5b"/><rect x="516" y="156" fill="#ff1858"/><rect x="528" y="156" fill="#ff1354"/><rect x="540" y="156" fill="#ff0e51"/><rect x="552" y="156" fill="#ff094e"/><rect x="564" y="156" fill="#ff034c"/><rect x="576" y="156" fill="#ff0049"/><rect x="192" y="168" fill="#00e5ff"/><rect x="204" y="168" fill="#22e1ff"/><rect x="216" y="168" fill="#42ddff"/><rect x="228" y="168" fill="#5fd8ff"/><rect x="240" y="168" fill="#7ad4ff"/><rect x="252" y="168" fill="#93cfff"/><rect x="264" y="168" fill="#accaff"/><rect x="276" y="168" fill="#c4c5ff"/><rect x="288" y="168" fill="#dcc0ff"/><rect x="300" y="168" fill="#f3baff"/><rect x="312" y="168" fill="#ffadf3"/><rect x="324" y="168" fill="#ff9ae0"/><rect x="336" y="168" fill="#ff8ad0"/><rect x="348" y="168" fill="#ff7cc1"/><rect x="360" y="168" fill="#ff70b5"/><rect x="372" y="168" fill="#ff65aa"/><rect x="384" y="168" fill="#ff5ba1"/><rect x="396" y="168" fill="#ff5298"/><rect x="408" y="168" fill="#ff4a90"/><rect x="420" y="168" fill="#ff4389"/><rect x="432" y="168" fill="#ff3c83"/><rect x="444" y="168" fill="#ff357d"/><rect x="456" y="168" fill="#ff2f77"/><rect x="468" y="168" fill="#ff2972"/><rect x="480" y="168" fill="#ff246e"/><rect x="492" y="168" fill="#ff1e69"/><rect x="504" y="168" fill="#ff1965"/><rect x="516" y="168" fill="#ff1461"/><rect x="528" y="168" fill="#ff0f5e"/><rect x="540" y="168" fill="#ff095a"/><rect x="552" y="168" fill="#ff0357"/><rect x="564" y="168" fill="#ff0054"/><rect x="192" y="180" fill="#00d1ff"/><rect x="204" y="180" fill="#1acdff"/><rect x="216" y="180" fill="#39c8ff"/><rect x="228" y="180" fill="#54c4ff"/><rect x="240" y="180" fill="#6ebfff"/><rect x="252" y="180" fill="#85bbff"/><rect x="264" y="180" fill="#9cb6ff"/><rect x="276" y="180" fill="#b3b1ff"/><rect x="288" y="180" fill="#c9acff"/><rect x="300" y="180" fill="#dfa7ff"/><rect x="312" y="180" fill="#f4a2ff"/><rect x="324" y="180" fill="#ff96f4"/><rect x="336" y="180" fill="#ff86e2"/><rect x="348" y="180" fill="#ff78d3"/><rect x="360" y="180" fill="#ff6cc5"/><rect x="372" y="180" fill="#ff61ba"/><rect x="384" y="180" fill="#ff57af"/><rect x="396" y="180" fill="#ff4ea6"/><rect x="408" y="180" fill="#ff469d"/><rect x="420" y="180" fill="#ff3f96"/><rect x="432" y="180" fill="#ff388f"/><rect x="444" y="180" fill="#ff3188"/><rect x="456" y="180" fill="#ff2b82"/><rect x="468" y="180" fill="#ff257d"/><rect x="480" y="180" fill="#ff1f78"/><rect x="492" y="180" fill="#ff1a73"/><rect x="504" y="180" fill="#ff156f"/><rect x="516" y="180" fill="#ff0f6b"/><rect x="528" y="180" fill="#ff0a67"/><rect x="540" y="180" fill="#ff0463"/><rect x="552" y="180" fill="#ff0060"/><rect x="204" y="192" fill="#12bbff"/><rect x="216" y="192" fill="#31b7ff"/><rect x="228" y="192" fill="#4bb3ff"/><rect x="240" y="192" fill="#63aeff"/><rect x="252" y="192" fill="#7aaaff"/><rect x="264" y="192" fill="#8fa5ff"/><rect x="276" y="192" fill="#a4a0ff"/><rect x="288" y="192" fill="#b99bff"/><rect x="300" y="192" fill="#cd96ff"/><rect x="312" y="192" fill="#e191ff"/><rect x="324" y="192" fill="#f58cff"/><rect x="336" y="192" fill="#ff82f5"/><rect x="348" y="192" fill="#ff74e4"/><rect x="360" y="192" fill="#ff68d6"/><rect x="372" y="192" fill="#ff5dc9"/><rect x="384" y="192" fill="#ff53be"/><rect x="396" y="192" fill="#ff4ab3"/><rect x="408" y="192" fill="#ff42aa"/><rect x="420" y="192" fill="#ff3aa2"/><rect x="432" y="192" fill="#ff339b"/><rect x="444" y="192" fill="#ff2d94"/><rect x="456" y="192" fill="#ff278d"/><rect x="468" y="192" fill="#ff2188"/><rect x="480" y="192" fill="#ff1b82"/><rect x="492" y="192" fill="#ff157d"/><rect x="504" y="192" fill="#ff1079"/><rect x="516" y="192" fill="#ff0a74"/><rect x="528" y="192" fill="#ff0470"/><rect x="540" y="192" fill="#ff006c"/><rect x="204" y="204" fill="#0cacff"/><rect x="216" y="204" fill="#2aa7ff"/><rect x="228" y="204" fill="#43a3ff"/><rect x="240" y="204" fill="#5a9fff"/><rect x="252" y="204" fill="#6f9bff"/><rect x="264" y="204" fill="#8496ff"/><rect x="276" y="204" fill="#9791ff"/><rect x="288" y="204" fill="#ab8dff"/><rect x="300" y="204" fill="#be88ff"/><rect x="312" y="204" fill="#d083ff"/><rect x="324" y="204" fill="#e37eff"/><rect x="336" y="204" fill="#f579ff"/><rect x="348" y="204" fill="#ff6ff6"/><rect x="360" y="204" fill="#ff63e6"/><rect x="372" y="204" fill="#ff58d8"/><rect x="384" y="204" fill="#ff4fcc"/><rect x="396" y="204" fill="#ff46c1"/><rect x="408" y="204" fill="#ff3eb7"/><rect x="420" y="204" fill="#ff36af"/><rect x="432" y="204" fill="#ff2fa7"/><rect x="444" y="204" fill="#ff289f"/><rect x="456" y="204" fill="#ff2298"/><rect x="468" y="204" fill="#ff1c92"/><rect x="480" y="204" fill="#ff168c"/><rect x="492" y="204" fill="#ff1187"/><rect x="504" y="204" fill="#ff0b82"/><rect x="516" y="204" fill="#ff047d"/><rect x="528" y="204" fill="#ff0079"/><rect x="204" y="216" fill="#049eff"/><rect x="216" y="216" fill="#249aff"/><rect x="228" y="216" fill="#3c96ff"/><rect x="240" y="216" fill="#5291ff"/><rect x="252" y="216" fill="#668dff"/><rect x="264" y="216" fill="#7989ff"/><rect x="276" y="216" fill="#8c84ff"/><rect x="288" y="216" fill="#9f80ff"/><rect x="300" y="216" fill="#b07bff"/><rect x="312" y="216" fill="#c276ff"/><rect x="324" y="216" fill="#d471ff"/><rect x="336" y="216" fill="#e56cff"/><rect x="348" y="216" fill="#f667ff"/><rect x="360" y="216" fill="#ff5ef7"/><rect x="372" y="216" fill="#ff54e8"/><rect x="384" y="216" fill="#ff4adb"/><rect x="396" y="216" fill="#ff41cf"/><rect x="408" y="216" fill="#ff39c4"/><rect x="420" y="216" fill="#ff31bb"/><rect x="432" y="216" fill="#ff2ab2"/><rect x="444" y="216" fill="#ff24aa"/><rect x="456" y="216" fill="#ff1ea3"/><rect x="468" y="216" fill="#ff179d"/><rect x="480" y="216" fill="#ff1197"/><rect x="492" y="216" fill="#ff0b91"/><rect x="504" y="216" fill="#ff058c"/><rect x="516" y="216" fill="#ff0087"/><rect x="204" y="228" fill="#0092ff"/><rect x="216" y="228" fill="#1e8eff"/><rect x="228" y="228" fill="#358aff"/><rect x="240" y="228" fill="#4a85ff"/><rect x="252" y="228" fill="#5e81ff"/><rect x="264" y="228" fill="#707dff"/><rect x="276" y="228" fill="#8279ff"/><rect x="288" y="228" fill="#9474ff"/><rect x="300" y="228" fill="#a570ff"/><rect x="312" y="228" fill="#b56bff"/><rect x="324" y="228" fill="#c666ff"/><rect x="336" y="228" fill="#d661ff"/><rect x="348" y="228" fill="#e65cff"/><rect x="360" y="228" fill="#f657ff"/><rect x="372" y="228" fill="#ff4ff7"/><rect x="384" y="228" fill="#ff45e9"/><rect x="396" y="228" fill="#ff3cdd"/><rect x="408" y="228" fill="#ff34d1"/><rect x="420" y="228" fill="#ff2dc7"/><rect x="432" y="228" fill="#ff26be"/><rect x="444" y="228" fill="#ff1fb6"/><rect x="456" y="228" fill="#ff19ae"/><rect x="468" y="228" fill="#ff12a7"/><rect x="480" y="228" fill="#ff0ca1"/><rect x="492" y="228" fill="#ff059b"/><rect x="504" y="228" fill="#ff0095"/><rect x="204" y="240" fill="#0087ff"/><rect x="216" y="240" fill="#1983ff"/><rect x="228" y="240" fill="#307fff"/><rect x="240" y="240" fill="#447bff"/><rect x="252" y="240" fill="#5777ff"/><rect x="264" y="240" fill="#6872ff"/><rect x="276" y="240" fill="#796eff"/><rect x="288" y="240" fill="#8a6aff"/><rect x="300" y="240" fill="#9a65ff"/><rect x="312" y="240" fill="#aa61ff"/><rect x="324" y="240" fill="#ba5cff"/><rect x="336" y="240" fill="#c957ff"/><rect x="348" y="240" fill="#d852ff"/><rect x="360" y="240" fill="#e84dff"/><rect x="372" y="240" fill="#f747ff"/><rect x="384" y="240" fill="#ff40f8"/><rect x="396" y="240" fill="#ff37ea"/><rect x="408" y="240" fill="#ff2fde"/><rect x="420" y="240" fill="#ff28d4"/><rect x="432" y="240" fill="#ff21ca"/><rect x="444" y="240" fill="#ff1ac1"/><rect x="456" y="240" fill="#ff13b9"/><rect x="468" y="240" fill="#ff0db1"/><rect x="480" y="240" fill="#ff05ab"/><rect x="492" y="240" fill="#ff00a4"/><rect x="204" y="252" fill="#007cff"/><rect x="216" y="252" fill="#1379ff"/><rect x="228" y="252" fill="#2a75ff"/><rect x="240" y="252" fill="#3e71ff"/><rect x="252" y="252" fill="#506dff"/><rect x="264" y="252" fill="#6169ff"/><rect x="276" y="252" fill="#7165ff"/><rect x="288" y="252" fill="#8160ff"/><rect x="300" y="252" fill="#915cff"/><rect x="312" y="252" fill="#a057ff"/><rect x="324" y="252" fill="#af53ff"/><rect x="336" y="252" fill="#be4eff"/><rect x="348" y="252" fill="#cc49ff"/><rect x="360" y="252" fill="#db44ff"/><rect x="372" y="252" fill="#e93fff"/><rect x="384" y="252" fill="#f739ff"/><rect x="396" y="252" fill="#ff32f8"/><rect x="408" y="252" fill="#ff2aeb"/><rect x="420" y="252" fill="#ff22e0"/><rect x="432" y="252" fill="#ff1bd6"/><rect x="444" y="252" fill="#ff14cc"/><rect x="456" y="252" fill="#ff0dc4"/><rect x="468" y="252" fill="#ff06bc"/><rect x="480" y="252" fill="#ff00b5"/><rect x="204" y="264" fill="#0073ff"/><rect x="216" y="264" fill="#0e70ff"/><rect x="228" y="264" fill="#256cff"/><rect x="240" y="264" fill="#3868ff"/><rect x="252" y="264" fill="#4a64ff"/><rect x="264" y="264" fill="#5a60ff"/><rect x="276" y="264" fill="#6a5cff"/><rect x="288" y="264" fill="#7958ff"/><rect x="300" y="264" fill="#8853ff"/><rect x="312" y="264" fill="#974fff"/><rect x="324" y="264" fill="#a54aff"/><rect x="336" y="264" fill="#b345ff"/><rect x="348" y="264" fill="#c141ff"/><rect x="360" y="264" fill="#cf3cff"/><rect x="372" y="264" fill="#dc36ff"/><rect x="384" y="264" fill="#ea31ff"/><rect x="396" y="264" fill="#f72bff"/><rect x="408" y="264" fill="#ff24f8"/><rect x="420" y="264" fill="#ff1dec"/><rect x="432" y="264" fill="#ff15e1"/><rect x="444" y="264" fill="#ff0ed8"/><rect x="456" y="264" fill="#ff06ce"/><rect x="468" y="264" fill="#ff00c6"/><rect x="216" y="276" fill="#0967ff"/><rect x="228" y="276" fill="#2063ff"/><rect x="240" y="276" fill="#3360ff"/><rect x="252" y="276" fill="#445cff"/><rect x="264" y="276" fill="#5458ff"/><rect x="276" y="276" fill="#6354ff"/><rect x="288" y="276" fill="#7250ff"/><rect x="300" y="276" fill="#804bff"/><rect x="312" y="276" fill="#8e47ff"/><rect x="324" y="276" fill="#9c42ff"/><rect x="336" y="276" fill="#aa3eff"/><rect x="348" y="276" fill="#b739ff"/><rect x="360" y="276" fill="#c434ff"/><rect x="372" y="276" fill="#d12fff"/><rect x="384" y="276" fill="#de29ff"/><rect x="396" y="276" fill="#eb24ff"/><rect x="408" y="276" fill="#f81eff"/><rect x="420" y="276" fill="#ff17f9"/><rect x="432" y="276" fill="#ff0fed"/><rect x="444" y="276" fill="#ff07e3"/><rect x="456" y="276" fill="#ff00d9"/><rect x="216" y="288" fill="#045fff"/><rect x="228" y="288" fill="#1c5cff"/><rect x="240" y="288" fill="#2e58ff"/><rect x="252" y="288" fill="#3f54ff"/><rect x="264" y="288" fill="#4f50ff"/><rect x="276" y="288" fill="#5d4cff"/><rect x="288" y="288" fill="#6c48ff"/><rect x="300" y="288" fill="#7944ff"/><rect x="312" y="288" fill="#8740ff"/><rect x="324" y="288" fill="#943bff"/><rect x="336" y="288" fill="#a137ff"/><rect x="348" y="288" fill="#ae32ff"/><rect x="360" y="288" fill="#ba2dff"/><rect x="372" y="288" fill="#c728ff"/><rect x="384" y="288" fill="#d322ff"/><rect x="396" y="288" fill="#e01cff"/><rect x="408" y="288" fill="#ec16ff"/><rect x="420" y="288" fill="#f80fff"/><rect x="432" y="288" fill="#ff07f9"/><rect x="444" y="288" fill="#ff00ee"/><rect x="216" y="300" fill="#0058ff"/><rect x="228" y="300" fill="#1855ff"/><rect x="240" y="300" fill="#2a51ff"/><rect x="252" y="300" fill="#3a4dff"/><rect x="264" y="300" fill="#4949ff"/><rect x="276" y="300" fill="#5845ff"/><rect x="288" y="300" fill="#6541ff"/><rect x="300" y="300" fill="#733dff"/><rect x="312" y="300" fill="#8039ff"/><rect x="324" y="300" fill="#8c34ff"/><rect x="336" y="300" fill="#9930ff"/><rect x="348" y="300" fill="#a52bff"/><rect x="360" y="300" fill="#b126ff"/><rect x="372" y="300" fill="#bd21ff"/><rect x="384" y="300" fill="#c91bff"/><rect x="396" y="300" fill="#d515ff"/><rect x="408" y="300" fill="#e10fff"/><rect x="420" y="300" fill="#ed07ff"/><rect x="432" y="300" fill="#f800ff"/><rect x="216" y="312" fill="#0052ff"/><rect x="228" y="312" fill="#144eff"/><rect x="240" y="312" fill="#264aff"/><rect x="252" y="312" fill="#3647ff"/><rect x="264" y="312" fill="#4443ff"/><rect x="276" y="312" fill="#523fff"/><rect x="288" y="312" fill="#603bff"/><rect x="300" y="312" fill="#6d37ff"/><rect x="312" y="312" fill="#7932ff"/><rect x="324" y="312" fill="#862eff"/><rect x="336" y="312" fill="#9229ff"/><rect x="348" y="312" fill="#9e25ff"/><rect x="360" y="312" fill="#a920ff"/><rect x="372" y="312" fill="#b51aff"/><rect x="384" y="312" fill="#c015ff"/><rect x="396" y="312" fill="#cc0eff"/><rect x="408" y="312" fill="#d707ff"/><rect x="420" y="312" fill="#e200ff"/><rect x="216" y="324" fill="#004bff"/><rect x="228" y="324" fill="#1048ff"/><rect x="240" y="324" fill="#2244ff"/><rect x="252" y="324" fill="#3240ff"/><rect x="264" y="324" fill="#403dff"/><rect x="276" y="324" fill="#4e39ff"/><rect x="288" y="324" fill="#5b35ff"/><rect x="300" y="324" fill="#6731ff"/><rect x="312" y="324" fill="#732cff"/><rect x="324" y="324" fill="#7f28ff"/><rect x="336" y="324" fill="#8b23ff"/><rect x="348" y="324" fill="#961fff"/><rect x="360" y="324" fill="#a219ff"/><rect x="372" y="324" fill="#ad14ff"/><rect x="384" y="324" fill="#b80eff"/><rect x="396" y="324" fill="#c307ff"/><rect x="408" y="324" fill="#ce00ff"/><rect x="216" y="336" fill="#0045ff"/><rect x="228" y="336" fill="#0c42ff"/><rect x="240" y="336" fill="#1e3eff"/><rect x="252" y="336" fill="#2e3bff"/><rect x="264" y="336" fill="#3c37ff"/><rect x="276" y="336" fill="#4933ff"/><rect x="288" y="336" fill="#562fff"/><rect x="300" y="336" fill="#622bff"/><rect x="312" y="336" fill="#6e27ff"/><rect x="324" y="336" fill="#7922ff"/><rect x="336" y="336" fill="#851eff"/><rect x="348" y="336" fill="#9019ff"/><rect x="360" y="336" fill="#9b13ff"/><rect x="372" y="336" fill="#a50dff"/><rect x="384" y="336" fill="#b007ff"/><rect x="396" y="336" fill="#bb00ff"/><rect x="228" y="348" fill="#083cff"/><rect x="240" y="348" fill="#1b39ff"/><rect x="252" y="348" fill="#2a35ff"/><rect x="264" y="348" fill="#3831ff"/><rect x="276" y="348" fill="#452dff"/><rect x="288" y="348" fill="#512aff"/><rect x="300" y="348" fill="#5d25ff"/><rect x="312" y="348" fill="#6821ff"/><rect x="324" y="348" fill="#741dff"/><rect x="336" y="348" fill="#7f18ff"/><rect x="348" y="348" fill="#8913ff"/><rect x="360" y="348" fill="#940dff"/><rect x="372" y="348" fill="#9f07ff"/><rect x="384" y="348" fill="#a900ff"/><rect x="228" y="360" fill="#0437ff"/><rect x="240" y="360" fill="#1733ff"/><rect x="252" y="360" fill="#2730ff"/><rect x="264" y="360" fill="#342cff"/><rect x="276" y="360" fill="#4128ff"/><rect x="288" y="360" fill="#4d24ff"/><rect x="300" y="360" fill="#5820ff"/><rect x="312" y="360" fill="#641cff"/><rect x="324" y="360" fill="#6f17ff"/><rect x="336" y="360" fill="#7912ff"/><rect x="348" y="360" fill="#840dff"/><rect x="360" y="360" fill="#8e07ff"/><rect x="372" y="360" fill="#9800ff"/><rect x="228" y="372" fill="#0032ff"/><rect x="240" y="372" fill="#142eff"/><rect x="252" y="372" fill="#232bff"/><rect x="264" y="372" fill="#3127ff"/><rect x="276" y="372" fill="#3d23ff"/><rect x="288" y="372" fill="#491fff"/><rect x="300" y="372" fill="#541bff"/><rect x="312" y="372" fill="#5f16ff"/><rect x="324" y="372" fill="#6a12ff"/><rect x="336" y="372" fill="#740cff"/><rect x="348" y="372" fill="#7e06ff"/><rect x="360" y="372" fill="#8800ff"/><rect x="228" y="384" fill="#002dff"/><rect x="240" y="384" fill="#112aff"/><rect x="252" y="384" fill="#2026ff"/><rect x="264" y="384" fill="#2d22ff"/><rect x="276" y="384" fill="#391eff"/><rect x="288" y="384" fill="#451aff"/><rect x="300" y="384" fill="#5016ff"/><rect x="312" y="384" fill="#5b11ff"/><rect x="324" y="384" fill="#650cff"/><rect x="336" y="384" fill="#6f06ff"/><rect x="348" y="384" fill="#7900ff"/><rect x="228" y="396" fill="#0028ff"/><rect x="240" y="396" fill="#0e25ff"/><rect x="252" y="396" fill="#1d21ff"/><rect x="264" y="396" fill="#2a1dff"/><rect x="276" y="396" fill="#3619ff"/><rect x="288" y="396" fill="#4115ff"/><rect x="300" y="396" fill="#4c11ff"/><rect x="312" y="396" fill="#570cff"/><rect x="324" y="396" fill="#6106ff"/><rect x="336" y="396" fill="#6b00ff"/><rect x="228" y="408" fill="#0024ff"/><rect x="240" y="408" fill="#0b20ff"/><rect x="252" y="408" fill="#1a1dff"/><rect x="264" y="408" fill="#2719ff"/><rect x="276" y="408" fill="#3315ff"/><rect x="288" y="408" fill="#3e10ff"/><rect x="300" y="408" fill="#490cff"/><rect x="312" y="408" fill="#5306ff"/><rect x="324" y="408" fill="#5d00ff"/><rect x="240" y="420" fill="#071cff"/><rect x="252" y="420" fill="#1718ff"/><rect x="264" y="420" fill="#2414ff"/><rect x="276" y="420" fill="#3010ff"/><rect x="288" y="420" fill="#3b0bff"/><rect x="300" y="420" fill="#4506ff"/><rect x="312" y="420" fill="#4f00ff"/><rect x="240" y="432" fill="#0418ff"/><rect x="252" y="432" fill="#1414ff"/><rect x="264" y="432" fill="#2110ff"/><rect x="276" y="432" fill="#2d0bff"/><rect x="288" y="432" fill="#3806ff"/><rect x="300" y="432" fill="#4200ff"/><rect x="240" y="444" fill="#0013ff"/><rect x="252" y="444" fill="#120fff"/><rect x="264" y="444" fill="#1f0bff"/><rect x="276" y="444" fill="#2a06ff"/><rect x="288" y="444" fill="#3500ff"/><rect x="240" y="456" fill="#000fff"/><rect x="252" y="456" fill="#0f0bff"/><rect x="264" y="456" fill="#1c06ff"/><rect x="276" y="456" fill="#2700ff"/><rect x="240" y="468" fill="#000bff"/><rect x="252" y="468" fill="#0c06ff"/><rect x="264" y="468" fill="#1900ff"/><rect x="240" y="480" fill="#0006ff"/><rect x="252" y="480" fill="#0a00ff"/></g></svg>
<canvas id="cie" class="a" style="left:1679px;top:291px" width="866" height="666"></canvas>
<div class="a" style="left:2245px;top:747px;width:295px;height:203px;background:#333"></div>
<div class="a" style="left:2249px;top:751px;width:287px;height:195px;background:#999"></div>
<svg class="a" style="left:2251px;top:753px" width="283" height="191"><defs><linearGradient id="zt" x1="0" y1="0" x2="1" y2="1"><stop offset="0" stop-color="#649600"/><stop offset="0.5" stop-color="#969600"/><stop offset="1" stop-color="#9a6e00"/></linearGradient><linearGradient id="zb" x1="0" y1="0" x2="1" y2="1"><stop offset="0" stop-color="#a6ff1f"/><stop offset="0.5" stop-color="#ffff08"/><stop offset="1" stop-color="#ffb405"/></linearGradient></defs><rect width="283" height="191" fill="url(#zb)"/><path d="M0 0 L283 0 L283 171.5 L0 18.4 Z" fill="url(#zt)"/></svg>
<canvas id="ciez" class="a" style="left:2251px;top:753px" width="283" height="191"></canvas>
<div class="a" style="left:300px;top:1435px;width:2256px;height:93px;background:#2c2c2c"></div>
<div class="a" style="left:301.5px;top:1435px;width:67px;height:91px;border-radius:6px;background:linear-gradient(#a9a9a9,#8a8a8a 35%,#6a6a6a 70%,#595959)"></div>
<div class="a" style="left:324px;top:1438px;width:23px;height:23px;border-radius:50%;background:linear-gradient(#555,#888 60%,#9a9a9a)"></div>
<div class="a" style="left:309px;top:1474px;width:53px;height:45px;border-radius:6px;background:#ffff00;box-shadow:inset 2px 2px 0 #d8d800"></div>
<div class="a" style="left:378px;top:1435px;width:225px;height:91px;border-radius:6px;background:linear-gradient(#a9a9a9,#8a8a8a 35%,#6a6a6a 70%,#595959)"></div>
<div class="a" style="left:385.5px;top:1442.5px;width:210px;height:54px;border-radius:6px;background:#c1c0a3;box-shadow:inset 2px 2px 0 rgba(0,0,0,0.25)"></div>
<div class="t" style="left:378px;width:225px;text-align:center;top:1507.5px;font-size:16px;font-weight:bold;color:#222">20%</div>
<div class="a" style="left:606.5px;top:1435px;width:224.10000000000002px;height:91px;border-radius:6px;background:linear-gradient(#a9a9a9,#8a8a8a 35%,#6a6a6a 70%,#595959)"></div>
<div class="a" style="left:614.0px;top:1442.5px;width:209.10000000000002px;height:54px;border-radius:6px;background:#c2c086;box-shadow:inset 2px 2px 0 rgba(0,0,0,0.25)"></div>
<div class="t" style="left:606.5px;width:224.10000000000002px;text-align:center;top:1507.5px;font-size:16px;font-weight:bold;color:#222">40%</div>
<div class="a" style="left:834px;top:1435px;width:225px;height:91px;border-radius:6px;background:linear-gradient(#a9a9a9,#8a8a8a 35%,#6a6a6a 70%,#595959)"></div>
<div class="a" style="left:841.5px;top:1442.5px;width:210px;height:54px;border-radius:6px;background:#c2bf6c;box-shadow:inset 2px 2px 0 rgba(0,0,0,0.25)"></div>
<div class="t" style="left:834px;width:225px;text-align:center;top:1507.5px;font-size:16px;font-weight:bold;color:#222">60%</div>
<div class="a" style="left:1062.5px;top:1435px;width:224.0px;height:91px;border-radius:6px;background:linear-gradient(#a9a9a9,#8a8a8a 35%,#6a6a6a 70%,#595959)"></div>
<div class="a" style="left:1070.0px;top:1442.5px;width:209.0px;height:54px;border-radius:6px;background:#c2bf52;box-shadow:inset 2px 2px 0 rgba(0,0,0,0.25)"></div>
<div class="t" style="left:1062.5px;width:224.0px;text-align:center;top:1507.5px;font-size:16px;font-weight:bold;color:#222">80%</div>
<div class="a" style="left:1290px;top:1435px;width:226px;height:91px;border-radius:6px;background:linear-gradient(#1a1a1a,#252525 60%,#303030)"></div>
<div class="a" style="left:1297px;top:1442.5px;width:212px;height:54px;border-radius:6px;background:#c4c000;box-shadow:inset 2px 2px 0 rgba(0,0,0,0.25)"></div>
<div class="t" style="left:1290px;width:226px;text-align:center;top:1507.5px;font-size:16px;font-weight:bold;color:#fff">100%</div>
<div class="a" style="left:1516px;top:1435px;width:558px;height:91px;background:linear-gradient(#4a4a4a,#383838 40%,#262626 90%,#222)"></div>
<div class="a" style="left:2076px;top:1435px;width:72px;height:91px;border-radius:6px;background:linear-gradient(#a9a9a9,#8a8a8a 35%,#6a6a6a 70%,#595959)"></div>
<div class="a" style="left:2076px;top:1462px;width:72px;height:1px;background:#555"></div>
<div class="a" style="left:2100px;top:1437px;width:22px;height:22px;border-radius:50%;background:linear-gradient(#777,#999 60%,#aaa)"></div>
<div class="a" style="left:2088px;top:1471px;width:46px;height:46px;border-radius:7px;border:3px solid #1a1a1a;background:linear-gradient(#c8c8c8,#a0a0a0 50%,#8a8a8a 50%,#999)"></div>
<div class="a" style="left:2101px;top:1485px;width:20px;height:20px;background:#050505"></div>
<div class="a" style="left:2149.5px;top:1435px;width:410px;height:91px;border-radius:6px 0 0 6px;background:linear-gradient(#a9a9a9,#8a8a8a 35%,#6a6a6a 70%,#595959)"></div>
<div class="a" style="left:2218.8px;top:1435px;width:1px;height:45px;background:#4a4a4a"></div>
<div class="a" style="left:2286px;top:1435px;width:1px;height:45px;background:#4a4a4a"></div>
<div class="a" style="left:2353.5px;top:1435px;width:1px;height:45px;background:#4a4a4a"></div>
<div class="a" style="left:2421px;top:1435px;width:1px;height:45px;background:#4a4a4a"></div>
<div class="a" style="left:2488px;top:1435px;width:1px;height:45px;background:#4a4a4a"></div>
<div class="a" style="left:2149.5px;top:1480px;width:410px;height:1px;background:#4a4a4a"></div>
<div class="a" style="left:2353.5px;top:1480px;width:1px;height:46px;background:#4a4a4a"></div>
<div class="a" style="left:2170px;top:1443px;width:28px;height:28px;border-radius:50%;background:linear-gradient(#777,#8c8c8c 60%,#a0a0a0)"></div>
<div class="a" style="left:2238px;top:1443px;width:28px;height:28px;border-radius:50%;background:linear-gradient(#777,#8c8c8c 60%,#a0a0a0)"></div>
<div class="a" style="left:2306px;top:1443px;width:28px;height:28px;border-radius:50%;background:linear-gradient(#777,#8c8c8c 60%,#a0a0a0)"></div>
<div class="a" style="left:2373px;top:1443px;width:28px;height:28px;border-radius:50%;background:linear-gradient(#777,#8c8c8c 60%,#a0a0a0)"></div>
<div class="a" style="left:2441px;top:1443px;width:28px;height:28px;border-radius:50%;background:linear-gradient(#777,#8c8c8c 60%,#a0a0a0)"></div>
<div class="a" style="left:2509px;top:1443px;width:28px;height:28px;border-radius:50%;background:linear-gradient(#777,#8c8c8c 60%,#a0a0a0)"></div>
<div class="a" style="left:2179.7px;top:1489px;width:30px;height:30px;border-radius:50%;background:linear-gradient(#7a7a7a,#8e8e8e 60%,#a2a2a2)"></div>
<div class="a" style="left:2500.4px;top:1489px;width:30px;height:30px;border-radius:50%;background:linear-gradient(#7a7a7a,#8e8e8e 60%,#a2a2a2)"></div>
<div class="t" style="left:2235px;top:1486px;font-size:34px;color:#2a2a2a;font-weight:normal;">Back</div>
<div class="t" style="left:2396px;top:1486px;font-size:36px;color:#2a2a2a;font-weight:normal;">Next</div>
<svg class="a" style="left:0;top:0" width="2560" height="1528" viewBox="0 0 2560 1528" font-family="Liberation Sans, sans-serif"><g transform="translate(14,16.8) rotate(45)"><path d="M-0.72 -7.21 L-7.21 -7.21 L-7.21 -0.72" fill="none" stroke="#ffc400" stroke-width="3.8" stroke-linejoin="round" stroke-linecap="round"/><path d="M0.72 -7.21 L7.21 -7.21 L7.21 -0.72" fill="none" stroke="#00dd00" stroke-width="3.8" stroke-linejoin="round" stroke-linecap="round"/><path d="M0.72 7.21 L7.21 7.21 L7.21 0.72" fill="none" stroke="#ff1a5a" stroke-width="3.8" stroke-linejoin="round" stroke-linecap="round"/><path d="M-0.72 7.21 L-7.21 7.21 L-7.21 0.72" fill="none" stroke="#33c6ff" stroke-width="3.8" stroke-linejoin="round" stroke-linecap="round"/><rect x="-4.47" y="-4.47" width="3.75" height="3.75" rx="0.8" fill="#ffc400"/><rect x="0.72" y="-4.47" width="3.75" height="3.75" rx="0.8" fill="#00dd00"/><rect x="0.72" y="0.72" width="3.75" height="3.75" rx="0.8" fill="#ff1a5a"/><rect x="-4.47" y="0.72" width="3.75" height="3.75" rx="0.8" fill="#33c6ff"/></g><line x1="2376" y1="17" x2="2391" y2="17" stroke="#111" stroke-width="1.3"/><rect x="2445" y="13" width="11" height="11" rx="2" fill="none" stroke="#111" stroke-width="1.3"/><path d="M2448 10 h8 a3 3 0 0 1 3 3 v8" fill="none" stroke="#111" stroke-width="1.3"/><path d="M2517 10 L2531 24 M2531 10 L2517 24" stroke="#111" stroke-width="1.4"/><g transform="translate(51.65,55.5) rotate(45)"><path d="M-2.79 -11.17 L-11.17 -11.17 L-11.17 -2.79" fill="none" stroke="#fff" stroke-width="3.6" stroke-linejoin="round" stroke-linecap="round"/><path d="M2.79 -11.17 L11.17 -11.17 L11.17 -2.79" fill="none" stroke="#fff" stroke-width="3.6" stroke-linejoin="round" stroke-linecap="round"/><path d="M2.79 11.17 L11.17 11.17 L11.17 2.79" fill="none" stroke="#fff" stroke-width="3.6" stroke-linejoin="round" stroke-linecap="round"/><path d="M-2.79 11.17 L-11.17 11.17 L-11.17 2.79" fill="none" stroke="#fff" stroke-width="3.6" stroke-linejoin="round" stroke-linecap="round"/><rect x="-6.82" y="-6.82" width="5.59" height="5.59" rx="0.8" fill="#fff"/><rect x="1.23" y="-6.82" width="5.59" height="5.59" rx="0.8" fill="#fff"/><rect x="1.23" y="1.23" width="5.59" height="5.59" rx="0.8" fill="#fff"/><rect x="-6.82" y="1.23" width="5.59" height="5.59" rx="0.8" fill="#fff"/></g><path d="M242 52 L256 52 L249 60 Z" fill="#fff"/><path d="M275 100 L275 114 L267 107 Z" fill="#fff"/><path d="M34 177.3 L34 183.3 L28 183.3 Z" fill="#555"/><path d="M34 243.75 L34 249.75 L28 249.75 Z" fill="#555"/><path d="M1946 106 L1960 106 L1953 114 Z" fill="#fff"/><path d="M2209 106 L2223 106 L2216 114 Z" fill="#fff"/><path d="M2433 106 L2447 106 L2440 114 Z" fill="#fff"/><g transform="translate(2494,108)" fill="#ccc"><rect x="-2" y="-9.5" width="4" height="5" transform="rotate(0)"/><rect x="-2" y="-9.5" width="4" height="5" transform="rotate(45)"/><rect x="-2" y="-9.5" width="4" height="5" transform="rotate(90)"/><rect x="-2" y="-9.5" width="4" height="5" transform="rotate(135)"/><rect x="-2" y="-9.5" width="4" height="5" transform="rotate(180)"/><rect x="-2" y="-9.5" width="4" height="5" transform="rotate(225)"/><rect x="-2" y="-9.5" width="4" height="5" transform="rotate(270)"/><rect x="-2" y="-9.5" width="4" height="5" transform="rotate(315)"/><circle r="6.5" fill="none" stroke="#ccc" stroke-width="3.2"/></g><path d="M2545 100 L2545 115 L2537 107.5 Z" fill="#fff"/><path d="M1587 273 L1603 273 L1595 281 Z" fill="#000"/><path d="M785 357 L801 357 L793 365 Z" fill="#000"/><rect x="359" y="420.5" width="422" height="522.5" fill="#222"/><line x1="415.3" y1="420.5" x2="415.3" y2="943" stroke="#9a9a9a" stroke-width="1.5"/><line x1="471.5" y1="420.5" x2="471.5" y2="943" stroke="#9a9a9a" stroke-width="1.5"/><line x1="527.8" y1="420.5" x2="527.8" y2="943" stroke="#9a9a9a" stroke-width="1.5"/><line x1="584.1" y1="420.5" x2="584.1" y2="943" stroke="#9a9a9a" stroke-width="1.5"/><line x1="640.3" y1="420.5" x2="640.3" y2="943" stroke="#9a9a9a" stroke-width="1.5"/><line x1="696.6" y1="420.5" x2="696.6" y2="943" stroke="#9a9a9a" stroke-width="1.5"/><line x1="752.9" y1="420.5" x2="752.9" y2="943" stroke="#9a9a9a" stroke-width="1.5"/><rect x="359" y="420.5" width="422" height="522.5" fill="none" stroke="#9a9a9a" stroke-width="1.5"/><line x1="359.0" y1="943" x2="359.0" y2="950" stroke="#ddd" stroke-width="1.5"/><text x="359.0" y="973" font-size="19" fill="#dcdcdc" text-anchor="middle" font-weight="normal" >0</text><line x1="415.3" y1="943" x2="415.3" y2="950" stroke="#ddd" stroke-width="1.5"/><text x="415.3" y="973" font-size="19" fill="#dcdcdc" text-anchor="middle" font-weight="normal" >2</text><line x1="471.5" y1="943" x2="471.5" y2="950" stroke="#ddd" stroke-width="1.5"/><text x="471.5" y="973" font-size="19" fill="#dcdcdc" text-anchor="middle" font-weight="normal" >4</text><line x1="527.8" y1="943" x2="527.8" y2="950" stroke="#ddd" stroke-width="1.5"/><text x="527.8" y="973" font-size="19" fill="#dcdcdc" text-anchor="middle" font-weight="normal" >6</text><line x1="584.1" y1="943" x2="584.1" y2="950" stroke="#ddd" stroke-width="1.5"/><text x="584.1" y="973" font-size="19" fill="#dcdcdc" text-anchor="middle" font-weight="normal" >8</text><line x1="640.3" y1="943" x2="640.3" y2="950" stroke="#ddd" stroke-width="1.5"/><text x="640.3" y="973" font-size="19" fill="#dcdcdc" text-anchor="middle" font-weight="normal" >10</text><line x1="696.6" y1="943" x2="696.6" y2="950" stroke="#ddd" stroke-width="1.5"/><text x="696.6" y="973" font-size="19" fill="#dcdcdc" text-anchor="middle" font-weight="normal" >12</text><line x1="752.9" y1="943" x2="752.9" y2="950" stroke="#ddd" stroke-width="1.5"/><text x="752.9" y="973" font-size="19" fill="#dcdcdc" text-anchor="middle" font-weight="normal" >14</text><line x1="351" y1="420.5" x2="359" y2="420.5" stroke="#ddd" stroke-width="2"/><line x1="351" y1="507.6" x2="359" y2="507.6" stroke="#ddd" stroke-width="2"/><line x1="351" y1="594.7" x2="359" y2="594.7" stroke="#ddd" stroke-width="2"/><line x1="351" y1="681.8" x2="359" y2="681.8" stroke="#ddd" stroke-width="2"/><line x1="351" y1="768.8" x2="359" y2="768.8" stroke="#ddd" stroke-width="2"/><line x1="351" y1="855.9" x2="359" y2="855.9" stroke="#ddd" stroke-width="2"/><line x1="351" y1="943.0" x2="359" y2="943.0" stroke="#ddd" stroke-width="2"/><text x="357" y="472.5" font-size="19" fill="#dcdcdc" text-anchor="end" font-weight="normal" >100%</text><text x="357" y="559.6" font-size="19" fill="#dcdcdc" text-anchor="end" font-weight="normal" >80%</text><text x="357" y="646.7" font-size="19" fill="#dcdcdc" text-anchor="end" font-weight="normal" >60%</text><text x="357" y="733.8" font-size="19" fill="#dcdcdc" text-anchor="end" font-weight="normal" >40%</text><text x="357" y="820.8" font-size="19" fill="#dcdcdc" text-anchor="end" font-weight="normal" >20%</text><text x="357" y="907.9" font-size="19" fill="#dcdcdc" text-anchor="end" font-weight="normal" >100</text><text x="545.5" y="414" font-size="19" fill="#dcdcdc" text-anchor="middle" font-weight="normal" >DeltaE 2000</text><defs><linearGradient id="b00" x1="0" x2="1"><stop offset="0" stop-color="#e03030"/><stop offset="1" stop-color="#7a0808"/></linearGradient><linearGradient id="b01" x1="0" x2="1"><stop offset="0" stop-color="#30d030"/><stop offset="1" stop-color="#107010"/></linearGradient><linearGradient id="b02" x1="0" x2="1"><stop offset="0" stop-color="#3838e0"/><stop offset="1" stop-color="#0a0a70"/></linearGradient><linearGradient id="b03" x1="0" x2="1"><stop offset="0" stop-color="#30d0d0"/><stop offset="1" stop-color="#108080"/></linearGradient><linearGradient id="b04" x1="0" x2="1"><stop offset="0" stop-color="#d040d0"/><stop offset="1" stop-color="#801080"/></linearGradient><linearGradient id="b05" x1="0" x2="1"><stop offset="0" stop-color="#d0d030"/><stop offset="1" stop-color="#808010"/></linearGradient><linearGradient id="b10" x1="0" x2="1"><stop offset="0" stop-color="#e03030"/><stop offset="1" stop-color="#7a0808"/></linearGradient><linearGradient id="b11" x1="0" x2="1"><stop offset="0" stop-color="#30d030"/><stop offset="1" stop-color="#107010"/></linearGradient><linearGradient id="b12" x1="0" x2="1"><stop offset="0" stop-color="#3838e0"/><stop offset="1" stop-color="#0a0a70"/></linearGradient><linearGradient id="b13" x1="0" x2="1"><stop offset="0" stop-color="#30d0d0"/><stop offset="1" stop-color="#108080"/></linearGradient><linearGradient id="b14" x1="0" x2="1"><stop offset="0" stop-color="#d040d0"/><stop offset="1" stop-color="#801080"/></linearGradient><linearGradient id="b15" x1="0" x2="1"><stop offset="0" stop-color="#d0d030"/><stop offset="1" stop-color="#808010"/></linearGradient><linearGradient id="b20" x1="0" x2="1"><stop offset="0" stop-color="#e03030"/><stop offset="1" stop-color="#7a0808"/></linearGradient><linearGradient id="b21" x1="0" x2="1"><stop offset="0" stop-color="#30d030"/><stop offset="1" stop-color="#107010"/></linearGradient><linearGradient id="b22" x1="0" x2="1"><stop offset="0" stop-color="#3838e0"/><stop offset="1" stop-color="#0a0a70"/></linearGradient><linearGradient id="b23" x1="0" x2="1"><stop offset="0" stop-color="#30d0d0"/><stop offset="1" stop-color="#108080"/></linearGradient><linearGradient id="b24" x1="0" x2="1"><stop offset="0" stop-color="#d040d0"/><stop offset="1" stop-color="#801080"/></linearGradient><linearGradient id="b25" x1="0" x2="1"><stop offset="0" stop-color="#d0d030"/><stop offset="1" stop-color="#808010"/></linearGradient><linearGradient id="b30" x1="0" x2="1"><stop offset="0" stop-color="#e03030"/><stop offset="1" stop-color="#7a0808"/></linearGradient><linearGradient id="b31" x1="0" x2="1"><stop offset="0" stop-color="#30d030"/><stop offset="1" stop-color="#107010"/></linearGradient><linearGradient id="b32" x1="0" x2="1"><stop offset="0" stop-color="#3838e0"/><stop offset="1" stop-color="#0a0a70"/></linearGradient><linearGradient id="b33" x1="0" x2="1"><stop offset="0" stop-color="#30d0d0"/><stop offset="1" stop-color="#108080"/></linearGradient><linearGradient id="b34" x1="0" x2="1"><stop offset="0" stop-color="#d040d0"/><stop offset="1" stop-color="#801080"/></linearGradient><linearGradient id="b35" x1="0" x2="1"><stop offset="0" stop-color="#d0d030"/><stop offset="1" stop-color="#808010"/></linearGradient><linearGradient id="b40" x1="0" x2="1"><stop offset="0" stop-color="#e03030"/><stop offset="1" stop-color="#7a0808"/></linearGradient><linearGradient id="b41" x1="0" x2="1"><stop offset="0" stop-color="#30d030"/><stop offset="1" stop-color="#107010"/></linearGradient><linearGradient id="b42" x1="0" x2="1"><stop offset="0" stop-color="#3838e0"/><stop offset="1" stop-color="#0a0a70"/></linearGradient><linearGradient id="b43" x1="0" x2="1"><stop offset="0" stop-color="#30d0d0"/><stop offset="1" stop-color="#108080"/></linearGradient><linearGradient id="b44" x1="0" x2="1"><stop offset="0" stop-color="#d040d0"/><stop offset="1" stop-color="#801080"/></linearGradient><linearGradient id="b45" x1="0" x2="1"><stop offset="0" stop-color="#d0d030"/><stop offset="1" stop-color="#808010"/></linearGradient><linearGradient id="bw" x1="0" x2="1"><stop offset="0" stop-color="#fff"/><stop offset="1" stop-color="#aaa"/></linearGradient></defs><linearGradient id="g00" x1="0" x2="1"><stop offset="0" stop-color="#dc4646"/><stop offset="0.4" stop-color="#e03030"/><stop offset="1" stop-color="#7a0808"/></linearGradient><rect x="359.5" y="430.0" width="101.9" height="9" fill="#000"/><rect x="359.8" y="431.5" width="99.4" height="6" fill="url(#g00)"/><linearGradient id="g01" x1="0" x2="1"><stop offset="0" stop-color="#46ce46"/><stop offset="0.4" stop-color="#30d030"/><stop offset="1" stop-color="#107010"/></linearGradient><rect x="359.5" y="439.2" width="5.4" height="9" fill="#000"/><rect x="359.8" y="440.8" width="2.9" height="6" fill="url(#g01)"/><linearGradient id="g02" x1="0" x2="1"><stop offset="0" stop-color="#4d4ddc"/><stop offset="0.4" stop-color="#3838e0"/><stop offset="1" stop-color="#0a0a70"/></linearGradient><rect x="359.5" y="448.5" width="37.2" height="9" fill="#000"/><rect x="359.8" y="450.0" width="34.7" height="6" fill="url(#g02)"/><linearGradient id="g03" x1="0" x2="1"><stop offset="0" stop-color="#46cece"/><stop offset="0.4" stop-color="#30d0d0"/><stop offset="1" stop-color="#108080"/></linearGradient><rect x="359.5" y="457.8" width="9.9" height="9" fill="#000"/><rect x="359.8" y="459.2" width="7.4" height="6" fill="url(#g03)"/><linearGradient id="g04" x1="0" x2="1"><stop offset="0" stop-color="#ce54ce"/><stop offset="0.4" stop-color="#d040d0"/><stop offset="1" stop-color="#801080"/></linearGradient><rect x="359.5" y="467.0" width="3" height="9" fill="#000"/><linearGradient id="g05" x1="0" x2="1"><stop offset="0" stop-color="#cece46"/><stop offset="0.4" stop-color="#d0d030"/><stop offset="1" stop-color="#808010"/></linearGradient><rect x="359.5" y="476.2" width="11.0" height="9" fill="#000"/><rect x="359.8" y="477.8" width="8.5" height="6" fill="url(#g05)"/><linearGradient id="g10" x1="0" x2="1"><stop offset="0" stop-color="#d56d6d"/><stop offset="0.4" stop-color="#d85d5d"/><stop offset="1" stop-color="#8c3636"/></linearGradient><rect x="359.5" y="517.1" width="5.4" height="9" fill="#000"/><rect x="359.8" y="518.6" width="2.9" height="6" fill="url(#g10)"/><linearGradient id="g11" x1="0" x2="1"><stop offset="0" stop-color="#6dcc6d"/><stop offset="0.4" stop-color="#5dcd5d"/><stop offset="1" stop-color="#3c853c"/></linearGradient><rect x="359.5" y="526.3" width="8.2" height="9" fill="#000"/><rect x="359.8" y="527.8" width="5.7" height="6" fill="url(#g11)"/><linearGradient id="g12" x1="0" x2="1"><stop offset="0" stop-color="#7272d5"/><stop offset="0.4" stop-color="#6363d8"/><stop offset="1" stop-color="#373785"/></linearGradient><rect x="359.5" y="535.6" width="4.0" height="9" fill="#000"/><rect x="359.8" y="537.1" width="1.5" height="6" fill="url(#g12)"/><linearGradient id="g13" x1="0" x2="1"><stop offset="0" stop-color="#6dcccc"/><stop offset="0.4" stop-color="#5dcdcd"/><stop offset="1" stop-color="#3c9191"/></linearGradient><rect x="359.5" y="544.8" width="16.6" height="9" fill="#000"/><rect x="359.8" y="546.3" width="14.1" height="6" fill="url(#g13)"/><linearGradient id="g14" x1="0" x2="1"><stop offset="0" stop-color="#cc76cc"/><stop offset="0.4" stop-color="#cd68cd"/><stop offset="1" stop-color="#913c91"/></linearGradient><rect x="359.5" y="554.1" width="5.4" height="9" fill="#000"/><rect x="359.8" y="555.6" width="2.9" height="6" fill="url(#g14)"/><linearGradient id="g15" x1="0" x2="1"><stop offset="0" stop-color="#cccc6d"/><stop offset="0.4" stop-color="#cdcd5d"/><stop offset="1" stop-color="#91913c"/></linearGradient><rect x="359.5" y="563.3" width="11.0" height="9" fill="#000"/><rect x="359.8" y="564.8" width="8.5" height="6" fill="url(#g15)"/><linearGradient id="g20" x1="0" x2="1"><stop offset="0" stop-color="#d38080"/><stop offset="0.4" stop-color="#d57474"/><stop offset="1" stop-color="#964d4d"/></linearGradient><rect x="359.5" y="604.2" width="4.8" height="9" fill="#000"/><rect x="359.8" y="605.7" width="2.3" height="6" fill="url(#g20)"/><linearGradient id="g21" x1="0" x2="1"><stop offset="0" stop-color="#80cb80"/><stop offset="0.4" stop-color="#74cc74"/><stop offset="1" stop-color="#528f52"/></linearGradient><rect x="359.5" y="613.4" width="4.8" height="9" fill="#000"/><rect x="359.8" y="614.9" width="2.3" height="6" fill="url(#g21)"/><linearGradient id="g22" x1="0" x2="1"><stop offset="0" stop-color="#8484d3"/><stop offset="0.4" stop-color="#7878d5"/><stop offset="1" stop-color="#4e4e8f"/></linearGradient><rect x="359.5" y="622.7" width="3" height="9" fill="#000"/><linearGradient id="g23" x1="0" x2="1"><stop offset="0" stop-color="#80cbcb"/><stop offset="0.4" stop-color="#74cccc"/><stop offset="1" stop-color="#529999"/></linearGradient><rect x="359.5" y="631.9" width="9.9" height="9" fill="#000"/><rect x="359.8" y="633.4" width="7.4" height="6" fill="url(#g23)"/><linearGradient id="g24" x1="0" x2="1"><stop offset="0" stop-color="#cb88cb"/><stop offset="0.4" stop-color="#cc7dcc"/><stop offset="1" stop-color="#995299"/></linearGradient><rect x="359.5" y="641.2" width="4.8" height="9" fill="#000"/><rect x="359.8" y="642.7" width="2.3" height="6" fill="url(#g24)"/><linearGradient id="g25" x1="0" x2="1"><stop offset="0" stop-color="#cbcb80"/><stop offset="0.4" stop-color="#cccc74"/><stop offset="1" stop-color="#999952"/></linearGradient><rect x="359.5" y="650.4" width="7.6" height="9" fill="#000"/><rect x="359.8" y="651.9" width="5.1" height="6" fill="url(#g25)"/><linearGradient id="g30" x1="0" x2="1"><stop offset="0" stop-color="#d09191"/><stop offset="0.4" stop-color="#d28888"/><stop offset="1" stop-color="#9e6161"/></linearGradient><rect x="359.5" y="691.2" width="6.2" height="9" fill="#000"/><rect x="359.8" y="692.8" width="3.7" height="6" fill="url(#g30)"/><linearGradient id="g31" x1="0" x2="1"><stop offset="0" stop-color="#91ca91"/><stop offset="0.4" stop-color="#88cb88"/><stop offset="1" stop-color="#659865"/></linearGradient><rect x="359.5" y="700.5" width="8.8" height="9" fill="#000"/><rect x="359.8" y="702.0" width="6.3" height="6" fill="url(#g31)"/><linearGradient id="g32" x1="0" x2="1"><stop offset="0" stop-color="#9494d0"/><stop offset="0.4" stop-color="#8b8bd2"/><stop offset="1" stop-color="#626298"/></linearGradient><rect x="359.5" y="709.8" width="3" height="9" fill="#000"/><linearGradient id="g33" x1="0" x2="1"><stop offset="0" stop-color="#91caca"/><stop offset="0.4" stop-color="#88cbcb"/><stop offset="1" stop-color="#65a1a1"/></linearGradient><rect x="359.5" y="719.0" width="10.4" height="9" fill="#000"/><rect x="359.8" y="720.5" width="7.9" height="6" fill="url(#g33)"/><linearGradient id="g34" x1="0" x2="1"><stop offset="0" stop-color="#ca96ca"/><stop offset="0.4" stop-color="#cb8ecb"/><stop offset="1" stop-color="#a165a1"/></linearGradient><rect x="359.5" y="728.2" width="3" height="9" fill="#000"/><linearGradient id="g35" x1="0" x2="1"><stop offset="0" stop-color="#caca91"/><stop offset="0.4" stop-color="#cbcb88"/><stop offset="1" stop-color="#a1a165"/></linearGradient><rect x="359.5" y="737.5" width="6.2" height="9" fill="#000"/><rect x="359.8" y="739.0" width="3.7" height="6" fill="url(#g35)"/><linearGradient id="g40" x1="0" x2="1"><stop offset="0" stop-color="#cda0a0"/><stop offset="0.4" stop-color="#cf9a9a"/><stop offset="1" stop-color="#a57373"/></linearGradient><rect x="359.5" y="778.3" width="4.8" height="9" fill="#000"/><rect x="359.8" y="779.8" width="2.3" height="6" fill="url(#g40)"/><linearGradient id="g41" x1="0" x2="1"><stop offset="0" stop-color="#a0c9a0"/><stop offset="0.4" stop-color="#9aca9a"/><stop offset="1" stop-color="#77a177"/></linearGradient><rect x="359.5" y="787.6" width="6.2" height="9" fill="#000"/><rect x="359.8" y="789.1" width="3.7" height="6" fill="url(#g41)"/><linearGradient id="g42" x1="0" x2="1"><stop offset="0" stop-color="#a2a2cd"/><stop offset="0.4" stop-color="#9c9ccf"/><stop offset="1" stop-color="#7474a1"/></linearGradient><rect x="359.5" y="796.8" width="6.2" height="9" fill="#000"/><rect x="359.8" y="798.3" width="3.7" height="6" fill="url(#g42)"/><linearGradient id="g43" x1="0" x2="1"><stop offset="0" stop-color="#a0c9c9"/><stop offset="0.4" stop-color="#9acaca"/><stop offset="1" stop-color="#77a8a8"/></linearGradient><rect x="359.5" y="806.1" width="17.5" height="9" fill="#000"/><rect x="359.8" y="807.6" width="15.0" height="6" fill="url(#g43)"/><linearGradient id="g44" x1="0" x2="1"><stop offset="0" stop-color="#c9a5c9"/><stop offset="0.4" stop-color="#ca9fca"/><stop offset="1" stop-color="#a877a8"/></linearGradient><rect x="359.5" y="815.3" width="5.4" height="9" fill="#000"/><rect x="359.8" y="816.8" width="2.9" height="6" fill="url(#g44)"/><linearGradient id="g45" x1="0" x2="1"><stop offset="0" stop-color="#c9c9a0"/><stop offset="0.4" stop-color="#caca9a"/><stop offset="1" stop-color="#a8a877"/></linearGradient><rect x="359.5" y="824.6" width="13.8" height="9" fill="#000"/><rect x="359.8" y="826.1" width="11.3" height="6" fill="url(#g45)"/><rect x="359.5" y="919.9" width="24.0" height="9" fill="#000"/><rect x="359.8" y="921.4" width="22.0" height="6" fill="url(#bw)"/><rect x="853" y="348.5" width="196" height="382.0" fill="#222"/><line x1="853" y1="411.9" x2="1049" y2="411.9" stroke="#9a9a9a" stroke-width="1.5"/><line x1="853" y1="476.8" x2="1049" y2="476.8" stroke="#9a9a9a" stroke-width="1.5"/><line x1="853" y1="541.0" x2="1049" y2="541.0" stroke="#9a9a9a" stroke-width="1.5"/><line x1="853" y1="603.5" x2="1049" y2="603.5" stroke="#9a9a9a" stroke-width="1.5"/><line x1="853" y1="667.9" x2="1049" y2="667.9" stroke="#9a9a9a" stroke-width="1.5"/><line x1="844" y1="349.4" x2="853" y2="349.4" stroke="#ddd" stroke-width="1.5"/><text x="845" y="356.4" font-size="19" fill="#dcdcdc" text-anchor="end" font-weight="normal" >15</text><line x1="844" y1="411.9" x2="853" y2="411.9" stroke="#ddd" stroke-width="1.5"/><text x="845" y="418.9" font-size="19" fill="#dcdcdc" text-anchor="end" font-weight="normal" >10</text><line x1="844" y1="476.8" x2="853" y2="476.8" stroke="#ddd" stroke-width="1.5"/><text x="845" y="483.8" font-size="19" fill="#dcdcdc" text-anchor="end" font-weight="normal" >5</text><line x1="844" y1="541.0" x2="853" y2="541.0" stroke="#ddd" stroke-width="1.5"/><text x="845" y="548.0" font-size="19" fill="#dcdcdc" text-anchor="end" font-weight="normal" >0</text><line x1="844" y1="603.5" x2="853" y2="603.5" stroke="#ddd" stroke-width="1.5"/><text x="845" y="610.5" font-size="19" fill="#dcdcdc" text-anchor="end" font-weight="normal" >-5</text><line x1="844" y1="667.9" x2="853" y2="667.9" stroke="#ddd" stroke-width="1.5"/><text x="845" y="674.9" font-size="19" fill="#dcdcdc" text-anchor="end" font-weight="normal" >-10</text><line x1="844" y1="730.5" x2="853" y2="730.5" stroke="#ddd" stroke-width="1.5"/><text x="845" y="737.5" font-size="19" fill="#dcdcdc" text-anchor="end" font-weight="normal" >-15</text><rect x="853" y="348.5" width="196" height="382.0" fill="none" stroke="#9a9a9a" stroke-width="2"/><line x1="853" y1="730.5" x2="853" y2="738.5" stroke="#ddd" stroke-width="1.5"/><line x1="1049" y1="730.5" x2="1049" y2="738.5" stroke="#ddd" stroke-width="1.5"/><text x="951" y="752" font-size="19" fill="#dcdcdc" text-anchor="middle" font-weight="normal" >100%</text><text x="933" y="341" font-size="19.2" fill="#dcdcdc" text-anchor="middle" font-weight="normal" >Delta L</text><rect x="872" y="538" width="157" height="4" fill="#000"/><rect x="1120" y="348.5" width="196" height="382.0" fill="#222"/><line x1="1120" y1="411.9" x2="1316" y2="411.9" stroke="#9a9a9a" stroke-width="1.5"/><line x1="1120" y1="476.8" x2="1316" y2="476.8" stroke="#9a9a9a" stroke-width="1.5"/><line x1="1120" y1="541.0" x2="1316" y2="541.0" stroke="#9a9a9a" stroke-width="1.5"/><line x1="1120" y1="603.5" x2="1316" y2="603.5" stroke="#9a9a9a" stroke-width="1.5"/><line x1="1120" y1="667.9" x2="1316" y2="667.9" stroke="#9a9a9a" stroke-width="1.5"/><line x1="1111" y1="349.4" x2="1120" y2="349.4" stroke="#ddd" stroke-width="1.5"/><text x="1112" y="356.4" font-size="19" fill="#dcdcdc" text-anchor="end" font-weight="normal" >15</text><line x1="1111" y1="411.9" x2="1120" y2="411.9" stroke="#ddd" stroke-width="1.5"/><text x="1112" y="418.9" font-size="19" fill="#dcdcdc" text-anchor="end" font-weight="normal" >10</text><line x1="1111" y1="476.8" x2="1120" y2="476.8" stroke="#ddd" stroke-width="1.5"/><text x="1112" y="483.8" font-size="19" fill="#dcdcdc" text-anchor="end" font-weight="normal" >5</text><line x1="1111" y1="541.0" x2="1120" y2="541.0" stroke="#ddd" stroke-width="1.5"/><text x="1112" y="548.0" font-size="19" fill="#dcdcdc" text-anchor="end" font-weight="normal" >0</text><line x1="1111" y1="603.5" x2="1120" y2="603.5" stroke="#ddd" stroke-width="1.5"/><text x="1112" y="610.5" font-size="19" fill="#dcdcdc" text-anchor="end" font-weight="normal" >-5</text><line x1="1111" y1="667.9" x2="1120" y2="667.9" stroke="#ddd" stroke-width="1.5"/><text x="1112" y="674.9" font-size="19" fill="#dcdcdc" text-anchor="end" font-weight="normal" >-10</text><line x1="1111" y1="730.5" x2="1120" y2="730.5" stroke="#ddd" stroke-width="1.5"/><text x="1112" y="737.5" font-size="19" fill="#dcdcdc" text-anchor="end" font-weight="normal" >-15</text><rect x="1120" y="348.5" width="196" height="382.0" fill="none" stroke="#9a9a9a" stroke-width="2"/><line x1="1120" y1="730.5" x2="1120" y2="738.5" stroke="#ddd" stroke-width="1.5"/><line x1="1316" y1="730.5" x2="1316" y2="738.5" stroke="#ddd" stroke-width="1.5"/><text x="1218" y="752" font-size="19" fill="#dcdcdc" text-anchor="middle" font-weight="normal" >100%</text><text x="1200" y="341" font-size="19.2" fill="#dcdcdc" text-anchor="middle" font-weight="normal" >Delta C</text><linearGradient id="dc" x1="0" y1="0" x2="0" y2="1"><stop offset="0" stop-color="#cdc800"/><stop offset="0.6" stop-color="#c4c000"/><stop offset="1" stop-color="#6e6c00"/></linearGradient><rect x="1140" y="538.3" width="156" height="21.5" fill="#000"/><rect x="1141.5" y="540" width="153" height="18" fill="url(#dc)"/><rect x="1387" y="348.5" width="196" height="382.0" fill="#222"/><line x1="1387" y1="411.9" x2="1583" y2="411.9" stroke="#9a9a9a" stroke-width="1.5"/><line x1="1387" y1="476.8" x2="1583" y2="476.8" stroke="#9a9a9a" stroke-width="1.5"/><line x1="1387" y1="541.0" x2="1583" y2="541.0" stroke="#9a9a9a" stroke-width="1.5"/><line x1="1387" y1="603.5" x2="1583" y2="603.5" stroke="#9a9a9a" stroke-width="1.5"/><line x1="1387" y1="667.9" x2="1583" y2="667.9" stroke="#9a9a9a" stroke-width="1.5"/><line x1="1378" y1="349.4" x2="1387" y2="349.4" stroke="#ddd" stroke-width="1.5"/><text x="1379" y="356.4" font-size="19" fill="#dcdcdc" text-anchor="end" font-weight="normal" >15</text><line x1="1378" y1="411.9" x2="1387" y2="411.9" stroke="#ddd" stroke-width="1.5"/><text x="1379" y="418.9" font-size="19" fill="#dcdcdc" text-anchor="end" font-weight="normal" >10</text><line x1="1378" y1="476.8" x2="1387" y2="476.8" stroke="#ddd" stroke-width="1.5"/><text x="1379" y="483.8" font-size="19" fill="#dcdcdc" text-anchor="end" font-weight="normal" >5</text><line x1="1378" y1="541.0" x2="1387" y2="541.0" stroke="#ddd" stroke-width="1.5"/><text x="1379" y="548.0" font-size="19" fill="#dcdcdc" text-anchor="end" font-weight="normal" >0</text><line x1="1378" y1="603.5" x2="1387" y2="603.5" stroke="#ddd" stroke-width="1.5"/><text x="1379" y="610.5" font-size="19" fill="#dcdcdc" text-anchor="end" font-weight="normal" >-5</text><line x1="1378" y1="667.9" x2="1387" y2="667.9" stroke="#ddd" stroke-width="1.5"/><text x="1379" y="674.9" font-size="19" fill="#dcdcdc" text-anchor="end" font-weight="normal" >-10</text><line x1="1378" y1="730.5" x2="1387" y2="730.5" stroke="#ddd" stroke-width="1.5"/><text x="1379" y="737.5" font-size="19" fill="#dcdcdc" text-anchor="end" font-weight="normal" >-15</text><rect x="1387" y="348.5" width="196" height="382.0" fill="none" stroke="#9a9a9a" stroke-width="2"/><line x1="1387" y1="730.5" x2="1387" y2="738.5" stroke="#ddd" stroke-width="1.5"/><line x1="1583" y1="730.5" x2="1583" y2="738.5" stroke="#ddd" stroke-width="1.5"/><text x="1485" y="752" font-size="19" fill="#dcdcdc" text-anchor="middle" font-weight="normal" >100%</text><text x="1467" y="341" font-size="19.2" fill="#dcdcdc" text-anchor="middle" font-weight="normal" >Delta H</text><rect x="1407" y="539.5" width="156" height="2" fill="#000"/><text x="903.8" y="976" font-size="16.5" fill="#f4f4f4" text-anchor="middle" font-weight="normal" >20%</text><text x="1060.5" y="976" font-size="16.5" fill="#f4f4f4" text-anchor="middle" font-weight="normal" >40%</text><text x="1217.2" y="976" font-size="16.5" fill="#f4f4f4" text-anchor="middle" font-weight="normal" >60%</text><text x="1373.9" y="976" font-size="16.5" fill="#f4f4f4" text-anchor="middle" font-weight="normal" >80%</text><text x="1530.6" y="976" font-size="16.5" fill="#f4f4f4" text-anchor="middle" font-weight="normal" >100%</text><text x="826" y="814" font-size="16" fill="#f0f0f0" text-anchor="middle" font-weight="normal" transform="rotate(-90 826 814)">Actual</text><text x="826" y="915" font-size="16" fill="#f0f0f0" text-anchor="middle" font-weight="normal" transform="rotate(-90 826 915)">Target</text><rect x="784" y="1057" width="338" height="243.70000000000005" fill="#222"/><line x1="784" y1="1082.6" x2="1122" y2="1082.6" stroke="#9a9a9a" stroke-width="1.5"/><line x1="777" y1="1082.6" x2="784" y2="1082.6" stroke="#ddd" stroke-width="1.5"/><text x="776" y="1089.6" font-size="19" fill="#dcdcdc" text-anchor="end" font-weight="normal" >104</text><line x1="784" y1="1131.3" x2="1122" y2="1131.3" stroke="#9a9a9a" stroke-width="1.5"/><line x1="777" y1="1131.3" x2="784" y2="1131.3" stroke="#ddd" stroke-width="1.5"/><text x="776" y="1138.3" font-size="19" fill="#dcdcdc" text-anchor="end" font-weight="normal" >102</text><line x1="784" y1="1180.0" x2="1122" y2="1180.0" stroke="#9a9a9a" stroke-width="1.5"/><line x1="777" y1="1180.0" x2="784" y2="1180.0" stroke="#ddd" stroke-width="1.5"/><text x="776" y="1187.0" font-size="19" fill="#dcdcdc" text-anchor="end" font-weight="normal" >100</text><line x1="784" y1="1228.7" x2="1122" y2="1228.7" stroke="#9a9a9a" stroke-width="1.5"/><line x1="777" y1="1228.7" x2="784" y2="1228.7" stroke="#ddd" stroke-width="1.5"/><text x="776" y="1235.7" font-size="19" fill="#dcdcdc" text-anchor="end" font-weight="normal" >98</text><line x1="784" y1="1277.4" x2="1122" y2="1277.4" stroke="#9a9a9a" stroke-width="1.5"/><line x1="777" y1="1277.4" x2="784" y2="1277.4" stroke="#ddd" stroke-width="1.5"/><text x="776" y="1284.4" font-size="19" fill="#dcdcdc" text-anchor="end" font-weight="normal" >96</text><rect x="784" y="1057" width="338" height="243.70000000000005" fill="none" stroke="#9a9a9a" stroke-width="1.5"/><line x1="784" y1="1300.7" x2="784" y2="1309.7" stroke="#ddd" stroke-width="1.5"/><line x1="1122" y1="1300.7" x2="1122" y2="1309.7" stroke="#ddd" stroke-width="1.5"/><text x="953" y="1323" font-size="19" fill="#dcdcdc" text-anchor="middle" font-weight="normal" >100%</text><text x="932" y="1050" font-size="18.5" fill="#dcdcdc" text-anchor="middle" font-weight="normal" >RGB Balance</text><linearGradient id="rr" x1="0" y1="0" x2="0" y2="1"><stop offset="0" stop-color="#ff5a5a"/><stop offset="1" stop-color="#ff3c3c"/></linearGradient><linearGradient id="rg" x1="0" y1="0" x2="0" y2="1"><stop offset="0" stop-color="#5aaa5a"/><stop offset="1" stop-color="#3c9e3c"/></linearGradient><linearGradient id="rb" x1="0" y1="0" x2="0" y2="1"><stop offset="0" stop-color="#5c5cff"/><stop offset="1" stop-color="#2a2aff"/></linearGradient><rect x="816.4" y="1179.5" width="89.0" height="121.20000000000005" fill="#000"/><rect x="818.1999999999999" y="1181.3" width="85.4" height="119.40000000000005" fill="url(#rr)"/><rect x="906.5" y="1183.9" width="89.89999999999998" height="116.79999999999995" fill="#000"/><rect x="908.3" y="1185.7" width="86.29999999999998" height="114.99999999999996" fill="url(#rg)"/><rect x="997" y="1078.2" width="89.5" height="222.5" fill="#000"/><rect x="998.8" y="1080.0" width="85.9" height="220.7" fill="url(#rb)"/><rect x="1679" y="291" width="866" height="666" fill="none" stroke="#9a9a9a" stroke-width="1.8"/><line x1="1670" y1="957.0" x2="1679" y2="957.0" stroke="#ddd" stroke-width="1.8"/><text x="1669" y="964.0" font-size="19" fill="#dcdcdc" text-anchor="end" font-weight="normal" >0</text><line x1="1679.0" y1="957" x2="1679.0" y2="965" stroke="#ddd" stroke-width="1.8"/><text x="1679.0" y="986" font-size="19" fill="#dcdcdc" text-anchor="middle" font-weight="normal" >0</text><line x1="1670" y1="901.6" x2="1679" y2="901.6" stroke="#ddd" stroke-width="1.8"/><text x="1669" y="908.6" font-size="19" fill="#dcdcdc" text-anchor="end" font-weight="normal" >0.05</text><line x1="1751.0" y1="957" x2="1751.0" y2="965" stroke="#ddd" stroke-width="1.8"/><text x="1751.0" y="986" font-size="19" fill="#dcdcdc" text-anchor="middle" font-weight="normal" >0.05</text><line x1="1670" y1="846.2" x2="1679" y2="846.2" stroke="#ddd" stroke-width="1.8"/><text x="1669" y="853.2" font-size="19" fill="#dcdcdc" text-anchor="end" font-weight="normal" >0.1</text><line x1="1823.0" y1="957" x2="1823.0" y2="965" stroke="#ddd" stroke-width="1.8"/><text x="1823.0" y="986" font-size="19" fill="#dcdcdc" text-anchor="middle" font-weight="normal" >0.1</text><line x1="1670" y1="790.8" x2="1679" y2="790.8" stroke="#ddd" stroke-width="1.8"/><text x="1669" y="797.8" font-size="19" fill="#dcdcdc" text-anchor="end" font-weight="normal" >0.15</text><line x1="1895.0" y1="957" x2="1895.0" y2="965" stroke="#ddd" stroke-width="1.8"/><text x="1895.0" y="986" font-size="19" fill="#dcdcdc" text-anchor="middle" font-weight="normal" >0.15</text><line x1="1670" y1="735.4" x2="1679" y2="735.4" stroke="#ddd" stroke-width="1.8"/><text x="1669" y="742.4" font-size="19" fill="#dcdcdc" text-anchor="end" font-weight="normal" >0.2</text><line x1="1967.0" y1="957" x2="1967.0" y2="965" stroke="#ddd" stroke-width="1.8"/><text x="1967.0" y="986" font-size="19" fill="#dcdcdc" text-anchor="middle" font-weight="normal" >0.2</text><line x1="1670" y1="680.0" x2="1679" y2="680.0" stroke="#ddd" stroke-width="1.8"/><text x="1669" y="687.0" font-size="19" fill="#dcdcdc" text-anchor="end" font-weight="normal" >0.25</text><line x1="2039.0" y1="957" x2="2039.0" y2="965" stroke="#ddd" stroke-width="1.8"/><text x="2039.0" y="986" font-size="19" fill="#dcdcdc" text-anchor="middle" font-weight="normal" >0.25</text><line x1="1670" y1="624.6" x2="1679" y2="624.6" stroke="#ddd" stroke-width="1.8"/><text x="1669" y="631.6" font-size="19" fill="#dcdcdc" text-anchor="end" font-weight="normal" >0.3</text><line x1="2111.0" y1="957" x2="2111.0" y2="965" stroke="#ddd" stroke-width="1.8"/><text x="2111.0" y="986" font-size="19" fill="#dcdcdc" text-anchor="middle" font-weight="normal" >0.3</text><line x1="1670" y1="569.2" x2="1679" y2="569.2" stroke="#ddd" stroke-width="1.8"/><text x="1669" y="576.2" font-size="19" fill="#dcdcdc" text-anchor="end" font-weight="normal" >0.35</text><line x1="2183.0" y1="957" x2="2183.0" y2="965" stroke="#ddd" stroke-width="1.8"/><text x="2183.0" y="986" font-size="19" fill="#dcdcdc" text-anchor="middle" font-weight="normal" >0.35</text><line x1="1670" y1="513.8" x2="1679" y2="513.8" stroke="#ddd" stroke-width="1.8"/><text x="1669" y="520.8" font-size="19" fill="#dcdcdc" text-anchor="end" font-weight="normal" >0.4</text><line x1="2255.0" y1="957" x2="2255.0" y2="965" stroke="#ddd" stroke-width="1.8"/><text x="2255.0" y="986" font-size="19" fill="#dcdcdc" text-anchor="middle" font-weight="normal" >0.4</text><line x1="1670" y1="458.4" x2="1679" y2="458.4" stroke="#ddd" stroke-width="1.8"/><text x="1669" y="465.4" font-size="19" fill="#dcdcdc" text-anchor="end" font-weight="normal" >0.45</text><line x1="2327.0" y1="957" x2="2327.0" y2="965" stroke="#ddd" stroke-width="1.8"/><text x="2327.0" y="986" font-size="19" fill="#dcdcdc" text-anchor="middle" font-weight="normal" >0.45</text><line x1="1670" y1="403.0" x2="1679" y2="403.0" stroke="#ddd" stroke-width="1.8"/><text x="1669" y="410.0" font-size="19" fill="#dcdcdc" text-anchor="end" font-weight="normal" >0.5</text><line x1="2399.0" y1="957" x2="2399.0" y2="965" stroke="#ddd" stroke-width="1.8"/><text x="2399.0" y="986" font-size="19" fill="#dcdcdc" text-anchor="middle" font-weight="normal" >0.5</text><line x1="1670" y1="347.6" x2="1679" y2="347.6" stroke="#ddd" stroke-width="1.8"/><text x="1669" y="354.6" font-size="19" fill="#dcdcdc" text-anchor="end" font-weight="normal" >0.55</text><line x1="2471.0" y1="957" x2="2471.0" y2="965" stroke="#ddd" stroke-width="1.8"/><text x="2471.0" y="986" font-size="19" fill="#dcdcdc" text-anchor="middle" font-weight="normal" >0.55</text><text x="2088" y="283" font-size="18.5" fill="#dcdcdc" text-anchor="middle" font-weight="normal" >CIE 1976 u'v'</text><rect x="1849.2" y="321.6" width="17.6" height="17.6" fill="none" stroke="#fff" stroke-width="2"/><circle cx="1859" cy="330.6" r="5.4" fill="#00be00" stroke="#111" stroke-width="1.5"/><rect x="1865.8" y="338.3" width="17.6" height="17.6" fill="none" stroke="#fff" stroke-width="2"/><circle cx="1874.6" cy="347.1" r="5.4" fill="#46b446" stroke="#111" stroke-width="1.5"/><rect x="1882.4" y="355.3" width="17.6" height="17.6" fill="none" stroke="#fff" stroke-width="2"/><circle cx="1891.2" cy="364.1" r="5.4" fill="#64aa64" stroke="#111" stroke-width="1.5"/><rect x="1903.1" y="375.6" width="17.6" height="17.6" fill="none" stroke="#fff" stroke-width="2"/><circle cx="1911.9" cy="384.4" r="5.4" fill="#8cb48c" stroke="#111" stroke-width="1.5"/><rect x="1926.0" y="397.1" width="17.6" height="17.6" fill="none" stroke="#fff" stroke-width="2"/><circle cx="1934.8" cy="405.9" r="5.4" fill="#aab9a0" stroke="#111" stroke-width="1.5"/><rect x="1963.3" y="332.9" width="17.6" height="17.6" fill="none" stroke="#fff" stroke-width="2"/><circle cx="1973" cy="342.5" r="5.4" fill="#c8be00" stroke="#111" stroke-width="1.5"/><rect x="1961.9" y="348.6" width="17.6" height="17.6" fill="none" stroke="#fff" stroke-width="2"/><circle cx="1972" cy="358.3" r="5.4" fill="#bebb50" stroke="#111" stroke-width="1.5"/><rect x="1960.6" y="364.3" width="17.6" height="17.6" fill="none" stroke="#fff" stroke-width="2"/><circle cx="1970.6" cy="373.7" r="5.4" fill="#bebb6e" stroke="#111" stroke-width="1.5"/><rect x="1959.2" y="382.3" width="17.6" height="17.6" fill="none" stroke="#fff" stroke-width="2"/><circle cx="1968.4" cy="391.6" r="5.4" fill="#bebb8c" stroke="#111" stroke-width="1.5"/><rect x="1957.4" y="402.5" width="17.6" height="17.6" fill="none" stroke="#fff" stroke-width="2"/><circle cx="1966.2" cy="411.3" r="5.4" fill="#c3bea5" stroke="#111" stroke-width="1.5"/><rect x="1868.9" y="441.6" width="17.6" height="17.6" fill="none" stroke="#fff" stroke-width="2"/><circle cx="1877.5" cy="451" r="5.4" fill="#00bebe" stroke="#111" stroke-width="1.5"/><rect x="1886.9" y="438.0" width="17.6" height="17.6" fill="none" stroke="#fff" stroke-width="2"/><circle cx="1896" cy="446.5" r="5.4" fill="#46b4b4" stroke="#111" stroke-width="1.5"/><rect x="1904.0" y="435.8" width="17.6" height="17.6" fill="none" stroke="#fff" stroke-width="2"/><circle cx="1912.8" cy="444" r="5.4" fill="#6eb4b4" stroke="#111" stroke-width="1.5"/><rect x="1920.6" y="431.7" width="17.6" height="17.6" fill="none" stroke="#fff" stroke-width="2"/><circle cx="1929.7" cy="440.5" r="5.4" fill="#8cb4b4" stroke="#111" stroke-width="1.5"/><rect x="1937.2" y="429.5" width="17.6" height="17.6" fill="none" stroke="#fff" stroke-width="2"/><circle cx="1947" cy="437.5" r="5.4" fill="#a5b4b4" stroke="#111" stroke-width="1.5"/><rect x="1934.1" y="655.5" width="17.6" height="17.6" fill="none" stroke="#fff" stroke-width="2"/><circle cx="1942.9" cy="664.3" r="5.4" fill="#4646be" stroke="#111" stroke-width="1.5"/><rect x="1940.8" y="577.8" width="17.6" height="17.6" fill="none" stroke="#fff" stroke-width="2"/><circle cx="1949.6" cy="586.6" r="5.4" fill="#6e6ebe" stroke="#111" stroke-width="1.5"/><rect x="1946.7" y="517.1" width="17.6" height="17.6" fill="none" stroke="#fff" stroke-width="2"/><circle cx="1955.5" cy="525.9" r="5.4" fill="#8c8cbe" stroke="#111" stroke-width="1.5"/><rect x="1950.3" y="468.6" width="17.6" height="17.6" fill="none" stroke="#fff" stroke-width="2"/><circle cx="1959.1" cy="477.4" r="5.4" fill="#a0a0be" stroke="#111" stroke-width="1.5"/><rect x="2109.3" y="580.0" width="17.6" height="17.6" fill="none" stroke="#fff" stroke-width="2"/><circle cx="2118.1" cy="588.8" r="5.4" fill="#a000a0" stroke="#111" stroke-width="1.5"/><rect x="2064.4" y="536.4" width="17.6" height="17.6" fill="none" stroke="#fff" stroke-width="2"/><circle cx="2073.2" cy="545.2" r="5.4" fill="#b45ab4" stroke="#111" stroke-width="1.5"/><rect x="2029.3" y="502.3" width="17.6" height="17.6" fill="none" stroke="#fff" stroke-width="2"/><circle cx="2038.1" cy="511.1" r="5.4" fill="#b478b4" stroke="#111" stroke-width="1.5"/><rect x="2003.7" y="475.3" width="17.6" height="17.6" fill="none" stroke="#fff" stroke-width="2"/><circle cx="2012.5" cy="484.1" r="5.4" fill="#b496b4" stroke="#111" stroke-width="1.5"/><rect x="1977.7" y="448.8" width="17.6" height="17.6" fill="none" stroke="#fff" stroke-width="2"/><circle cx="1986.5" cy="457.6" r="5.4" fill="#b9a5b9" stroke="#111" stroke-width="1.5"/><rect x="2232.0" y="381.0" width="17.6" height="17.6" fill="none" stroke="#fff" stroke-width="2"/><circle cx="2239" cy="389.8" r="5.4" fill="#b94646" stroke="#111" stroke-width="1.5"/><rect x="2158.8" y="393.5" width="17.6" height="17.6" fill="none" stroke="#fff" stroke-width="2"/><circle cx="2166.5" cy="402.3" r="5.4" fill="#be6464" stroke="#111" stroke-width="1.5"/><rect x="2092.2" y="403.4" width="17.6" height="17.6" fill="none" stroke="#fff" stroke-width="2"/><circle cx="2101" cy="412.2" r="5.4" fill="#be8282" stroke="#111" stroke-width="1.5"/><rect x="2020.4" y="416.0" width="17.6" height="17.6" fill="none" stroke="#fff" stroke-width="2"/><circle cx="2029.2" cy="424.8" r="5.4" fill="#bea0a0" stroke="#111" stroke-width="1.5"/><rect x="1922.1" y="770.3" width="19" height="19" fill="none" stroke="#fff" stroke-width="2.2"/><circle cx="1942.9" cy="769.5" r="6" fill="#0000aa" stroke="#111" stroke-width="1.6"/><rect x="2318.5" y="365" width="19" height="19" fill="none" stroke="#fff" stroke-width="2.2"/><circle cx="2316.7" cy="379.9" r="6" fill="#aa0000" stroke="#111" stroke-width="1.6"/><rect x="1953.6" y="426.5" width="19" height="19" fill="none" stroke="#000" stroke-width="2.6"/><circle cx="1964.5" cy="436" r="6" fill="#fff" stroke="#111" stroke-width="1.6"/><rect x="2382.3" y="837.3" width="19.5" height="19.5" fill="none" stroke="#fff" stroke-width="2.2"/><circle cx="2384.6" cy="858.5" r="5.8" fill="#c8be00" stroke="#111" stroke-width="1.6"/><path d="M329 1453 L341 1453 L335 1446 Z" fill="#222"/><path d="M2105 1452 L2117 1452 L2111 1445 Z" fill="#222"/><text x="2515" y="1512" font-size="26" fill="#333" text-anchor="middle" font-weight="bold" >»</text><text x="2195" y="1512" font-size="26" fill="#333" text-anchor="middle" font-weight="bold" >«</text><rect x="2180" y="1451" width="10" height="11" rx="1" fill="#222"/><path d="M2246 1449 L2246 1463 L2257 1456 Z" fill="#222"/><path d="M2313 1450 L2311 1450 L2311 1462 L2313 1462 M2327 1450 L2329 1450 L2329 1462 L2327 1462" fill="none" stroke="#222" stroke-width="1.8"/><path d="M2387 1456 C2383 1450 2377 1450 2377 1456 C2377 1462 2383 1462 2387 1456 C2391 1450 2397 1450 2397 1456 C2397 1462 2391 1462 2387 1456 Z" fill="none" stroke="#222" stroke-width="1.8"/><path d="M2461 1452 A7 7 0 1 0 2462 1460" fill="none" stroke="#222" stroke-width="2"/><path d="M2458 1448 L2464 1452 L2458 1455 Z" fill="#222"/><g><path d="M2187 1490 L2227.3 1486 L2226 1456 L2174.6 1446 L2176.4 1493 L2208 1510 L2263 1493 L2232 1488" fill="none" stroke="#e8e8e8" stroke-width="6.5" stroke-linejoin="miter"/><path d="M2187 1490 L2227.3 1486 L2226 1456 L2174.6 1446 L2176.4 1493 L2208 1510 L2263 1493 L2232 1488" fill="none" stroke="#a8454c" stroke-width="3.6" stroke-linejoin="miter"/><path d="M2189 1464 Q2196 1457 2201 1466 L2205 1475 L2232.5 1445 L2207 1484 L2203 1484 Q2198 1472 2189 1464 Z" fill="#464646" stroke="#e8e8e8" stroke-width="2.2"/><text x="2234" y="1483.5" font-size="34" font-weight="bold" fill="#a8454c" stroke="#e8e8e8" stroke-width="2.4" paint-order="stroke" textLength="197" lengthAdjust="spacingAndGlyphs">NOTEBOOK</text><text x="2431" y="1483.5" font-size="34" font-weight="bold" fill="#404040" stroke="#e8e8e8" stroke-width="2.4" paint-order="stroke" textLength="118" lengthAdjust="spacingAndGlyphs">CHECK</text></g></svg>
<script>
(function(){
function col(u,v,o,d,g){
  var dd=6*u-16*v+12, x=9*u/dd, y=4*v/dd; if(y<1e-4)y=1e-4;
  var X=x/y, Z=(1-x-y)/y;
  var r=3.2406*X-1.5372-0.4986*Z, gg=-0.9689*X+1.8758+0.0415*Z, b=0.0557*X-0.2040+1.0570*Z;
  var ins=(r>=0&&gg>=0&&b>=0);
  if(r<0)r=0; if(gg<0)gg=0; if(b<0)b=0;
  var m=Math.max(r,gg,b)||1; var k=ins?255:255*0.6;
  d[o]=k*Math.pow(r/m,g); d[o+1]=k*Math.pow(gg/m,g); d[o+2]=k*Math.pow(b/m,g); d[o+3]=255;
}
var G=1/1.3;
var c=document.getElementById('cie'); var ctx=c.getContext('2d');
var W=c.width,H=c.height;
var tmp=document.createElement('canvas'); tmp.width=W; tmp.height=H; var tc=tmp.getContext('2d');
var img=tc.createImageData(W,H), d=img.data;
for(var j=0;j<H;j++){ var v=(666-(j+0.5))/1108;
  for(var i=0;i<W;i++){ var u=(i+0.5)/1440; col(u,v,(j*W+i)*4,d,G); } }
tc.putImageData(img,0,0);
ctx.save(); ctx.beginPath();
var p=new Path2D("M369.8 647.6 L369.7 647.7 L369.7 647.7 L369.6 647.8 L369.5 647.8 L369.4 647.9 L369.2 648.0 L369.1 648.0 L369.0 648.1 L368.8 648.2 L368.6 648.2 L368.4 648.3 L368.2 648.3 L368.0 648.4 L367.8 648.4 L367.5 648.4 L367.2 648.4 L366.9 648.4 L366.5 648.3 L366.1 648.3 L365.7 648.3 L365.3 648.2 L364.8 648.1 L364.1 647.8 L363.2 647.3 L362.1 646.6 L360.9 645.8 L359.6 644.9 L358.1 643.8 L356.4 642.5 L354.4 640.9 L352.2 639.2 L349.9 637.2 L347.3 635.1 L344.5 632.7 L341.4 630.1 L338.0 627.2 L334.2 624.2 L330.3 621.0 L326.1 617.5 L321.5 613.8 L316.5 609.7 L311.1 605.1 L305.4 600.4 L299.4 595.5 L293.0 590.3 L286.1 584.5 L278.6 577.6 L270.3 569.5 L260.9 559.6 L250.2 548.1 L239.0 535.6 L227.7 522.7 L217.0 510.2 L207.5 498.7 L199.3 488.3 L192.0 478.7 L185.3 469.3 L178.8 459.9 L172.2 450.1 L165.2 439.6 L157.7 428.2 L150.1 416.3 L142.3 404.0 L134.6 391.4 L126.8 378.7 L119.3 365.9 L111.7 353.0 L104.0 339.7 L96.5 326.3 L89.0 312.8 L81.9 299.5 L75.1 286.3 L68.6 273.2 L62.4 260.1 L56.5 247.1 L50.9 234.3 L45.5 221.9 L40.6 209.9 L35.9 198.2 L31.5 186.9 L27.4 175.9 L23.7 165.2 L20.2 155.1 L17.1 145.4 L14.3 136.3 L11.9 127.7 L9.8 119.5 L7.9 111.8 L6.4 104.5 L5.0 97.5 L3.9 91.0 L3.1 84.9 L2.5 79.3 L2.1 74.0 L2.0 69.0 L2.1 64.2 L2.3 59.7 L2.8 55.5 L3.5 51.5 L4.4 47.9 L5.5 44.5 L6.7 41.3 L8.1 38.3 L9.7 35.5 L11.5 33.0 L13.4 30.7 L15.5 28.6 L17.7 26.7 L20.0 25.0 L22.4 23.5 L25.0 22.3 L27.7 21.2 L30.5 20.2 L33.3 19.3 L36.2 18.5 L39.2 18.0 L42.3 17.5 L45.4 17.1 L48.6 16.8 L51.9 16.6 L55.1 16.3 L58.5 16.1 L61.8 16.0 L65.3 16.0 L68.7 15.9 L72.1 15.9 L75.5 15.9 L78.9 15.9 L82.3 15.9 L85.7 16.0 L89.2 16.0 L92.6 16.1 L96.1 16.2 L99.7 16.4 L103.2 16.5 L106.8 16.7 L110.4 16.9 L114.1 17.1 L117.8 17.4 L121.6 17.6 L125.4 17.9 L129.3 18.2 L133.2 18.5 L137.2 18.8 L141.2 19.1 L145.3 19.5 L149.5 19.9 L153.7 20.2 L157.9 20.7 L162.3 21.1 L166.7 21.5 L171.2 21.9 L175.7 22.4 L180.4 22.9 L185.1 23.4 L189.9 23.9 L194.8 24.4 L199.7 24.9 L204.8 25.4 L209.9 26.0 L215.2 26.6 L220.5 27.1 L225.9 27.7 L231.4 28.3 L237.0 29.0 L242.6 29.6 L248.4 30.3 L254.3 30.9 L260.3 31.6 L266.4 32.3 L272.5 33.0 L278.8 33.7 L285.2 34.4 L291.7 35.1 L298.3 35.9 L305.0 36.7 L311.8 37.4 L318.8 38.2 L325.8 39.0 L332.9 39.9 L340.1 40.7 L347.4 41.5 L354.9 42.4 L362.4 43.3 L370.1 44.1 L377.8 45.0 L385.6 45.9 L393.5 46.8 L401.6 47.8 L409.7 48.7 L417.9 49.7 L426.2 50.6 L434.5 51.6 L443.0 52.5 L451.5 53.5 L460.1 54.5 L468.7 55.5 L477.4 56.5 L486.1 57.5 L494.9 58.5 L503.7 59.5 L512.5 60.5 L521.3 61.6 L530.0 62.5 L538.1 63.5 L545.5 64.3 L552.9 65.2 L560.8 66.1 L570.0 67.2 L581.0 68.4 L594.5 70.0 L610.1 71.7 L626.9 73.7 L644.0 75.6 L660.6 77.5 L675.6 79.2 L689.3 80.8 L702.5 82.3 L715.0 83.8 L727.0 85.2 L738.4 86.5 L749.2 87.7 L759.3 88.9 L768.7 90.0 L777.5 91.0 L785.8 91.9 L793.7 92.9 L801.4 93.7 L808.7 94.6 L815.6 95.4 L822.2 96.1 L828.3 96.8 L834.1 97.5 L839.6 98.1 L844.6 98.7 L849.3 99.2 L853.6 99.7 L857.6 100.2 L861.3 100.6 L864.7 101.0 L867.8 101.4 L870.5 101.7 L873.0 102.0 L875.2 102.2 L877.4 102.5 L879.7 102.7 L882.0 103.0 L884.4 103.3 L886.8 103.5 L889.0 103.8 L891.0 104.0 L892.7 104.2 L894.0 104.4 L895.1 104.5 L896.0 104.6 L896.7 104.7 L897.2 104.8 L897.7 104.8 Z"); ctx.clip(p);
ctx.drawImage(tmp,0,0); ctx.restore();
var z=document.getElementById('ciez'); var zc=z.getContext('2d');
var zi=zc.createImageData(z.width,z.height), zd=zi.data;
var kx=0.0002, ky=kx*1.468;
for(var j=0;j<z.height;j++){ for(var i=0;i<z.width;i++){
  var px=i+2251+0.5, py=j+753+0.5;
  var xx=0.4193+(px-2392)*kx, yy=0.5053-(py-847)*ky, dd=-2*xx+12*yy+3;
  col(4*xx/dd, 9*yy/dd, (j*z.width+i)*4, zd, G); } }
zc.putImageData(zi,0,0);
})();
</script>
</body></html>
